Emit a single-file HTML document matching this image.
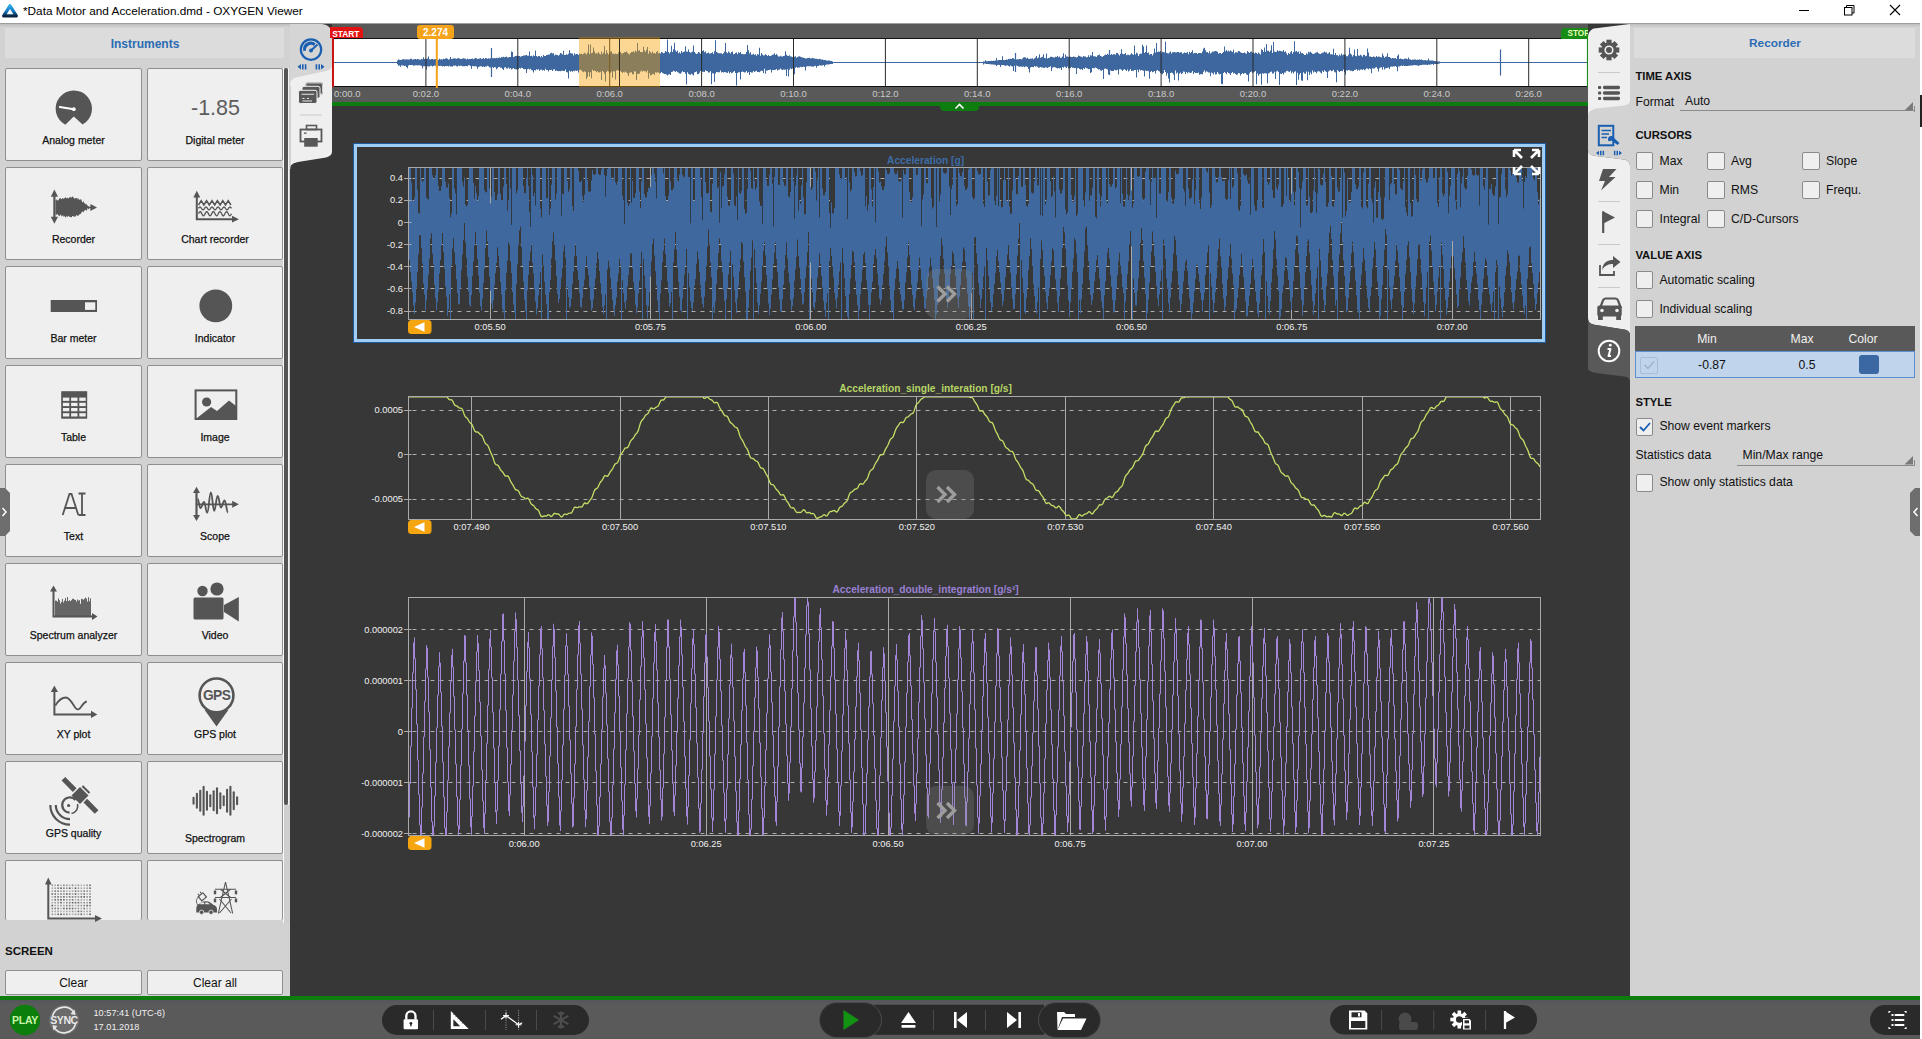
<!DOCTYPE html><html><head><meta charset="utf-8"><title>OXYGEN Viewer</title><style>
*{margin:0;padding:0;box-sizing:border-box}
html,body{width:1922px;height:1039px;overflow:hidden;background:#373737;font-family:"Liberation Sans",sans-serif}
.a{position:absolute}
.t{position:absolute;white-space:nowrap;line-height:1}
</style></head><body>
<div class="a" style="left:0px;top:0px;width:1922px;height:23px;background:#fff"></div>
<div class="a" style="left:0px;top:23px;width:1920px;height:1px;background:#9d9d9d"></div>
<div class="a" style="left:1920px;top:0px;width:2px;height:1039px;background:#fff"></div>
<svg class="a" style="left:0px;top:0px;" width="22" height="22" viewBox="0 0 22 22"><defs><linearGradient id="lg" x1="0" y1="0" x2="0" y2="1"><stop offset="0" stop-color="#2aa8e8"/><stop offset="0.55" stop-color="#1677c0"/><stop offset="1" stop-color="#0a2440"/></linearGradient></defs><path d="M10 5.8 L16.3 15.9 L3.7 15.9 Z" fill="none" stroke="url(#lg)" stroke-width="3.3" stroke-linejoin="round"/></svg>
<div class="t" style="left:23.00px;top:6.41px;font-size:11.8px;color:#000;">*Data Motor and Acceleration.dmd - OXYGEN Viewer</div>
<div class="a" style="left:1799px;top:10px;width:10px;height:1px;background:#000"></div>
<svg class="a" style="left:1843px;top:4px;" width="13" height="12" viewBox="0 0 13 12"><rect x="1.5" y="3.5" width="7.5" height="7.5" fill="none" stroke="#000" stroke-width="1"/><path d="M3.5 3.5 V1.5 H11 V9 H9" fill="none" stroke="#000" stroke-width="1"/></svg>
<svg class="a" style="left:1889px;top:4px;" width="12" height="12" viewBox="0 0 12 12"><path d="M1 1 L11 11 M11 1 L1 11" stroke="#000" stroke-width="1.1"/></svg>
<div class="a" style="left:0px;top:24px;width:290px;height:972px;background:#d2d2d2"></div>
<div class="a" style="left:0px;top:24px;width:290px;height:3px;background:linear-gradient(#bdbdbd,#d2d2d2)"></div>
<div class="a" style="left:5px;top:28px;width:279px;height:30px;background:#dcdcdc"></div>
<div class="t" style="left:-155.00px;width:600px;text-align:center;top:37.84px;font-size:12px;color:#2b6cb3;font-weight:bold;">Instruments</div>
<div class="a" style="left:5px;top:68px;width:137px;height:93px;background:#efefef;border:1px solid #8f8f8f;border-radius:2px;"></div>
<div class="t" style="left:-226.50px;width:600px;text-align:center;top:135.11px;font-size:10.5px;color:#111;-webkit-text-stroke:0.25px #111;">Analog meter</div>
<div class="a" style="left:147px;top:68px;width:136px;height:93px;background:#efefef;border:1px solid #8f8f8f;border-radius:2px;"></div>
<div class="t" style="left:-85.00px;width:600px;text-align:center;top:135.11px;font-size:10.5px;color:#111;-webkit-text-stroke:0.25px #111;">Digital meter</div>
<div class="a" style="left:5px;top:167px;width:137px;height:93px;background:#efefef;border:1px solid #8f8f8f;border-radius:2px;"></div>
<div class="t" style="left:-226.50px;width:600px;text-align:center;top:234.11px;font-size:10.5px;color:#111;-webkit-text-stroke:0.25px #111;">Recorder</div>
<div class="a" style="left:147px;top:167px;width:136px;height:93px;background:#efefef;border:1px solid #8f8f8f;border-radius:2px;"></div>
<div class="t" style="left:-85.00px;width:600px;text-align:center;top:234.11px;font-size:10.5px;color:#111;-webkit-text-stroke:0.25px #111;">Chart recorder</div>
<div class="a" style="left:5px;top:266px;width:137px;height:93px;background:#efefef;border:1px solid #8f8f8f;border-radius:2px;"></div>
<div class="t" style="left:-226.50px;width:600px;text-align:center;top:333.11px;font-size:10.5px;color:#111;-webkit-text-stroke:0.25px #111;">Bar meter</div>
<div class="a" style="left:147px;top:266px;width:136px;height:93px;background:#efefef;border:1px solid #8f8f8f;border-radius:2px;"></div>
<div class="t" style="left:-85.00px;width:600px;text-align:center;top:333.11px;font-size:10.5px;color:#111;-webkit-text-stroke:0.25px #111;">Indicator</div>
<div class="a" style="left:5px;top:365px;width:137px;height:93px;background:#efefef;border:1px solid #8f8f8f;border-radius:2px;"></div>
<div class="t" style="left:-226.50px;width:600px;text-align:center;top:432.11px;font-size:10.5px;color:#111;-webkit-text-stroke:0.25px #111;">Table</div>
<div class="a" style="left:147px;top:365px;width:136px;height:93px;background:#efefef;border:1px solid #8f8f8f;border-radius:2px;"></div>
<div class="t" style="left:-85.00px;width:600px;text-align:center;top:432.11px;font-size:10.5px;color:#111;-webkit-text-stroke:0.25px #111;">Image</div>
<div class="a" style="left:5px;top:464px;width:137px;height:93px;background:#efefef;border:1px solid #8f8f8f;border-radius:2px;"></div>
<div class="t" style="left:-226.50px;width:600px;text-align:center;top:531.11px;font-size:10.5px;color:#111;-webkit-text-stroke:0.25px #111;">Text</div>
<div class="a" style="left:147px;top:464px;width:136px;height:93px;background:#efefef;border:1px solid #8f8f8f;border-radius:2px;"></div>
<div class="t" style="left:-85.00px;width:600px;text-align:center;top:531.11px;font-size:10.5px;color:#111;-webkit-text-stroke:0.25px #111;">Scope</div>
<div class="a" style="left:5px;top:563px;width:137px;height:93px;background:#efefef;border:1px solid #8f8f8f;border-radius:2px;"></div>
<div class="t" style="left:-226.50px;width:600px;text-align:center;top:630.11px;font-size:10.5px;color:#111;-webkit-text-stroke:0.25px #111;">Spectrum analyzer</div>
<div class="a" style="left:147px;top:563px;width:136px;height:93px;background:#efefef;border:1px solid #8f8f8f;border-radius:2px;"></div>
<div class="t" style="left:-85.00px;width:600px;text-align:center;top:630.11px;font-size:10.5px;color:#111;-webkit-text-stroke:0.25px #111;">Video</div>
<div class="a" style="left:5px;top:662px;width:137px;height:93px;background:#efefef;border:1px solid #8f8f8f;border-radius:2px;"></div>
<div class="t" style="left:-226.50px;width:600px;text-align:center;top:729.11px;font-size:10.5px;color:#111;-webkit-text-stroke:0.25px #111;">XY plot</div>
<div class="a" style="left:147px;top:662px;width:136px;height:93px;background:#efefef;border:1px solid #8f8f8f;border-radius:2px;"></div>
<div class="t" style="left:-85.00px;width:600px;text-align:center;top:729.11px;font-size:10.5px;color:#111;-webkit-text-stroke:0.25px #111;">GPS plot</div>
<div class="a" style="left:5px;top:761px;width:137px;height:93px;background:#efefef;border:1px solid #8f8f8f;border-radius:2px;"></div>
<div class="t" style="left:-226.50px;width:600px;text-align:center;top:828.11px;font-size:10.5px;color:#111;-webkit-text-stroke:0.25px #111;">GPS quality</div>
<div class="a" style="left:147px;top:761px;width:136px;height:93px;background:#efefef;border:1px solid #8f8f8f;border-radius:2px;"></div>
<div class="t" style="left:-85.00px;width:600px;text-align:center;top:833.11px;font-size:10.5px;color:#111;-webkit-text-stroke:0.25px #111;">Spectrogram</div>
<div class="a" style="left:5px;top:860px;width:137px;height:60px;background:#efefef;border:1px solid #8f8f8f;border-radius:2px;border-bottom:none;"></div>
<div class="a" style="left:147px;top:860px;width:136px;height:60px;background:#efefef;border:1px solid #8f8f8f;border-radius:2px;border-bottom:none;"></div>
<div class="a" style="left:0px;top:923px;width:290px;height:73px;background:#d2d2d2"></div>
<div class="a" style="left:283px;top:68px;width:1px;height:855px;background:#fafafa"></div>
<div class="a" style="left:284px;top:68px;width:6px;height:855px;background:#cfcfcf"></div>
<div class="a" style="left:284px;top:68px;width:3.5px;height:737px;background:#555;border-radius:2px"></div>
<div class="a" style="left:288px;top:68px;width:1px;height:737px;background:#f4f4f4"></div>
<div class="t" style="left:5.00px;top:946.27px;font-size:11.5px;color:#111;font-weight:bold;">SCREEN</div>
<div class="a" style="left:5px;top:970px;width:137px;height:25px;background:#efefef;border:1px solid #8f8f8f;border-radius:2px"></div>
<div class="a" style="left:147px;top:970px;width:136px;height:25px;background:#efefef;border:1px solid #8f8f8f;border-radius:2px"></div>
<div class="t" style="left:-226.50px;width:600px;text-align:center;top:976.84px;font-size:12px;color:#111;">Clear</div>
<div class="t" style="left:-85.00px;width:600px;text-align:center;top:976.84px;font-size:12px;color:#111;">Clear all</div>
<svg class="a" style="left:0px;top:488px;" width="11" height="48" viewBox="0 0 11 48"><path d="M0 0 L5 0 L10 5 L10 43 L5 48 L0 48 Z" fill="#6e6e6e"/><path d="M2.5 20 L6 24 L2.5 28" fill="none" stroke="#fff" stroke-width="1.5"/></svg>
<svg class="a" style="left:0px;top:0px;" width="290" height="996" viewBox="0 0 290 996"><path d="M73.8 116.6 L65.26 124.67 A18.2 18.2 0 1 1 82.62 124.52 Z" fill="#555555"/><path d="M59.8 106.9 L73.8 109.2" stroke="#fff" stroke-width="2" stroke-linecap="round"/><circle cx="73.8" cy="109.2" r="1.9" fill="#fff"/><path d="M54.4 194 V219" stroke="#555555" stroke-width="2.2"/><path d="M50.8 196.8 L54.4 189.6 L58 196.8 Z M50.8 216.8 L54.4 223.8 L58 216.8 Z" fill="#555555"/><path d="M55.50 200.09 L56.20 200.18 L56.90 199.04 L57.60 200.86 L58.30 200.17 L59.00 199.29 L59.70 198.06 L60.40 197.95 L61.10 199.33 L61.80 199.11 L62.50 197.73 L63.20 198.64 L63.90 198.86 L64.60 198.02 L65.30 197.62 L66.00 197.38 L66.70 198.51 L67.40 197.52 L68.10 198.40 L68.80 198.31 L69.50 197.35 L70.20 197.56 L70.90 196.44 L71.60 198.04 L72.30 196.19 L73.00 196.95 L73.70 197.60 L74.40 199.09 L75.10 197.81 L75.80 198.53 L76.50 198.01 L77.20 198.10 L77.90 199.74 L78.60 198.00 L79.30 200.17 L80.00 199.26 L80.70 199.52 L81.40 199.59 L82.10 202.13 L82.80 202.14 L83.50 200.75 L84.20 203.62 L84.90 202.93 L85.60 204.15 L86.30 204.03 L87.00 205.11 L87.70 205.65 L88.40 206.23 L89.10 206.81 L89.10 207.88 L88.40 209.55 L87.70 207.72 L87.00 210.33 L86.30 210.73 L85.60 209.71 L84.90 209.94 L84.20 210.91 L83.50 212.57 L82.80 211.30 L82.10 211.72 L81.40 212.77 L80.70 213.78 L80.00 214.51 L79.30 214.20 L78.60 215.58 L77.90 216.27 L77.20 215.25 L76.50 214.91 L75.80 216.22 L75.10 216.54 L74.40 216.69 L73.70 216.45 L73.00 216.10 L72.30 216.00 L71.60 217.59 L70.90 217.07 L70.20 216.88 L69.50 216.92 L68.80 215.77 L68.10 216.40 L67.40 217.02 L66.70 215.55 L66.00 217.43 L65.30 217.14 L64.60 215.85 L63.90 217.25 L63.20 215.27 L62.50 215.78 L61.80 216.75 L61.10 214.96 L60.40 214.42 L59.70 216.22 L59.00 215.55 L58.30 215.44 L57.60 213.74 L56.90 214.49 L56.20 214.86 L55.50 214.74 Z" fill="#555555"/><path d="M88 207.5 H92" stroke="#555555" stroke-width="1.6"/><path d="M90.4 204 L97 207.5 L90.4 211 Z" fill="#555555"/><path d="M196.8 195 V219.2 H233" stroke="#555555" stroke-width="2" fill="none"/><path d="M193.3 197.5 L196.8 190.8 L200.3 197.5 Z M232 215.8 L239 219.2 L232 222.6 Z" fill="#555555"/><path d="M198.50 205.0 201.20 200.7 203.90 205.0 206.60 200.7 209.30 205.0 212.00 200.7 214.70 205.0 217.40 200.7 220.10 205.0 222.80 200.7 225.50 205.0 228.20 200.7 230.90 205.0" stroke="#555555" stroke-width="1.5" fill="none"/><path d="M198.5 208.40 L199.0 207.70 L199.5 207.19 L200.0 207.00 L200.5 207.19 L201.0 207.70 L201.5 208.40 L202.0 209.10 L202.5 209.61 L203.0 209.80 L203.5 209.61 L204.0 209.10 L204.5 208.40 L205.0 207.70 L205.5 207.19 L206.0 207.00 L206.5 207.19 L207.0 207.70 L207.5 208.40 L208.0 209.10 L208.5 209.61 L209.0 209.80 L209.5 209.61 L210.0 209.10 L210.5 208.40 L211.0 207.70 L211.5 207.19 L212.0 207.00 L212.5 207.19 L213.0 207.70 L213.5 208.40 L214.0 209.10 L214.5 209.61 L215.0 209.80 L215.5 209.61 L216.0 209.10 L216.5 208.40 L217.0 207.70 L217.5 207.19 L218.0 207.00 L218.5 207.19 L219.0 207.70 L219.5 208.40 L220.0 209.10 L220.5 209.61 L221.0 209.80 L221.5 209.61 L222.0 209.10 L222.5 208.40 L223.0 207.70 L223.5 207.19 L224.0 207.00 L224.5 207.19 L225.0 207.70 L225.5 208.40 L226.0 209.10 L226.5 209.61 L227.0 209.80 L227.5 209.61 L228.0 209.10 L228.5 208.40 L229.0 207.70 L229.5 207.19 L230.0 207.00 L230.5 207.19 L231.0 207.70 L231.5 208.40" stroke="#555555" stroke-width="1.3" fill="none"/><path d="M198.5 213.70 L199.0 212.74 L199.5 211.99 L200.0 211.62 L200.5 211.72 L201.0 212.25 L201.5 213.11 L202.0 214.10 L202.5 215.00 L203.0 215.61 L203.5 215.80 L204.0 215.52 L204.5 214.84 L205.0 213.90 L205.5 212.92 L206.0 212.11 L206.5 211.66 L207.0 211.66 L207.5 212.11 L208.0 212.92 L208.5 213.90 L209.0 214.84 L209.5 215.52 L210.0 215.80 L210.5 215.61 L211.0 215.00 L211.5 214.10 L212.0 213.11 L212.5 212.25 L213.0 211.72 L213.5 211.62 L214.0 211.99 L214.5 212.74 L215.0 213.70 L215.5 214.66 L216.0 215.41 L216.5 215.78 L217.0 215.68 L217.5 215.15 L218.0 214.29 L218.5 213.30 L219.0 212.40 L219.5 211.79 L220.0 211.60 L220.5 211.88 L221.0 212.56 L221.5 213.50 L222.0 214.48 L222.5 215.29 L223.0 215.74 L223.5 215.74 L224.0 215.29 L224.5 214.48 L225.0 213.50 L225.5 212.56 L226.0 211.88 L226.5 211.60 L227.0 211.79 L227.5 212.40 L228.0 213.30 L228.5 214.29 L229.0 215.15 L229.5 215.68 L230.0 215.78 L230.5 215.41 L231.0 214.66 L231.5 213.70" stroke="#555555" stroke-width="1.3" fill="none"/><rect x="50.7" y="300" width="46.3" height="12" fill="#555555"/><rect x="85" y="302.3" width="10.3" height="7.6" fill="#efefef"/><circle cx="215.8" cy="305.8" r="16.4" fill="#555555"/><rect x="61.2" y="391.2" width="26" height="27.5" fill="#555555"/><rect x="62.9" y="397.6" width="6.4" height="3.3" fill="#efefef"/><rect x="71.1" y="397.6" width="6.4" height="3.3" fill="#efefef"/><rect x="79.3" y="397.6" width="6.4" height="3.3" fill="#efefef"/><rect x="62.9" y="402.8" width="6.4" height="3.3" fill="#efefef"/><rect x="71.1" y="402.8" width="6.4" height="3.3" fill="#efefef"/><rect x="79.3" y="402.8" width="6.4" height="3.3" fill="#efefef"/><rect x="62.9" y="408.0" width="6.4" height="3.3" fill="#efefef"/><rect x="71.1" y="408.0" width="6.4" height="3.3" fill="#efefef"/><rect x="79.3" y="408.0" width="6.4" height="3.3" fill="#efefef"/><rect x="62.9" y="413.2" width="6.4" height="3.3" fill="#efefef"/><rect x="71.1" y="413.2" width="6.4" height="3.3" fill="#efefef"/><rect x="79.3" y="413.2" width="6.4" height="3.3" fill="#efefef"/><rect x="195.6" y="390.4" width="40.7" height="28.6" fill="none" stroke="#555555" stroke-width="2"/><circle cx="206.6" cy="402" r="4.6" fill="#555555"/><path d="M197 418 L211 407 L217 411 L229 400.5 L236 406 L236 418 Z" fill="#555555"/><path d="M62.7 515 L69.5 494 L71.5 494 L78.3 515 M65.3 508 H75.7" stroke="#555555" stroke-width="1.8" fill="none"/><path d="M82 493.5 V515 M78.5 493.5 H85.5 M78.5 515 H85.5" stroke="#555555" stroke-width="1.8" fill="none"/><path d="M196.5 490 V518" stroke="#555555" stroke-width="2.2"/><path d="M193 493 L196.5 486.7 L200 493 Z M193 515 L196.5 521.1 L200 515 Z" fill="#555555"/><path d="M197.5 499 C198.85 499 199.15 508 200.5 508 C202.07 508 202.43 502 204 502 C205.44 502 205.76 512.7 207.2 512.7 C208.87 512.7 209.23 492.3 210.9 492.3 C212.38 492.3 212.72 510.8 214.2 510.8 C215.77 510.8 216.12 496 217.7 496 C219.19 496 219.51 507.5 221 507.5 C222.62 507.5 222.98 500.5 224.6 500.5 C226.13 500.5 226.47 512.5 228 512.5" stroke="#555555" stroke-width="1.8" fill="none"/><path d="M197 504.3 H233" stroke="#555555" stroke-width="1.8"/><path d="M232.2 500.8 L238.9 504.3 L232.2 507.8 Z" fill="#555555"/><path d="M53.5 589 V616.5 H95" stroke="#555555" stroke-width="2" fill="none"/><path d="M50 591.5 L53.5 585.5 L57 591.5 Z M92 613 L97.5 616.5 L92 620 Z" fill="#555555"/><path d="M55.5 616 V600.6 M56.5 616 V600.7 M57.5 616 V601.8 M58.5 616 V598.4 M59.5 616 V600.2 M60.5 616 V603.6 M61.5 616 V601.9 M62.5 616 V599.0 M63.5 616 V602.4 M64.5 616 V600.6 M65.5 616 V598.0 M66.5 616 V601.2 M67.5 616 V597.0 M68.5 616 V601.1 M69.5 616 V600.2 M70.5 616 V601.1 M71.5 616 V600.2 M72.5 616 V598.8 M73.5 616 V598.9 M74.5 616 V599.6 M75.5 616 V600.0 M76.5 616 V601.6 M77.5 616 V599.5 M78.5 616 V600.5 M79.5 616 V600.2 M80.5 616 V603.8 M81.5 616 V598.8 M82.5 616 V599.2 M83.5 616 V599.7 M84.5 616 V598.7 M85.5 616 V597.7 M86.5 616 V598.5 M87.5 616 V601.6 M88.5 616 V597.2 M89.5 616 V601.3 M90.5 616 V598.4" stroke="#555555" stroke-width="0.9"/><circle cx="202.5" cy="591" r="5.2" fill="#555555"/><circle cx="217" cy="589" r="6.6" fill="#555555"/><rect x="193.5" y="597.5" width="30" height="22" rx="1.5" fill="#555555"/><path d="M224 605 L238.8 597 L238.8 621.5 L224 612 Z" fill="#555555"/><path d="M54.4 690 V714.4 H92" stroke="#555555" stroke-width="2" fill="none"/><path d="M50.8 692 L54.4 685.5 L58 692 Z M91 710.8 L97.3 714.4 L91 718 Z" fill="#555555"/><path d="M55.3 705.5 C58 701 62 697.5 66 697.5 C70 697.5 73 705 75.5 708 C77 710 79 710 81 707 C83 704 84.5 702 86.8 701.5" stroke="#555555" stroke-width="1.8" fill="none"/><path d="M204.5 709.8 L216.5 726.5 L228.5 709.8 Z" fill="#555555"/><circle cx="216.5" cy="695.4" r="16.9" fill="#efefef" stroke="#555555" stroke-width="2.6"/><text x="216.6" y="700.4" font-size="13.8" font-weight="bold" text-anchor="middle" fill="#555555" font-family="Liberation Sans" letter-spacing="-0.6">GPS</text><g transform="rotate(45 80 795.4)"><rect x="74" y="789.4" width="12" height="12" fill="#555555"/><rect x="56.5" y="792.8" width="16" height="5.2" fill="#555555"/><rect x="87.5" y="792.8" width="16" height="5.2" fill="#555555"/><rect x="75" y="786" width="10" height="2" fill="#555555"/></g><path d="M50.3 805 A19.7 19.7 0 0 0 70 824.7 M55.8 805 A14.2 14.2 0 0 0 70 819.2" stroke="#555555" stroke-width="2.2" fill="none"/><path d="M69.6 812.6 A7.6 7.6 0 1 1 75.5 800" stroke="#555555" stroke-width="2.2" fill="none"/><path d="M71.5 813.5 A7.6 7.6 0 0 0 77.5 804" stroke="#555555" stroke-width="1.6" fill="none"/><circle cx="68.6" cy="805.5" r="1.6" fill="#555555"/><rect x="192.50" y="796.7" width="2.1" height="8" rx="1" fill="#555555"/><rect x="195.85" y="792.7" width="2.1" height="16" rx="1" fill="#555555"/><rect x="199.20" y="789.7" width="2.1" height="22" rx="1" fill="#555555"/><rect x="202.55" y="785.7" width="2.1" height="30" rx="1" fill="#555555"/><rect x="205.90" y="790.7" width="2.1" height="20" rx="1" fill="#555555"/><rect x="209.25" y="794.2" width="2.1" height="13" rx="1" fill="#555555"/><rect x="212.60" y="790.2" width="2.1" height="21" rx="1" fill="#555555"/><rect x="215.95" y="787.2" width="2.1" height="27" rx="1" fill="#555555"/><rect x="219.30" y="792.2" width="2.1" height="17" rx="1" fill="#555555"/><rect x="222.65" y="795.2" width="2.1" height="11" rx="1" fill="#555555"/><rect x="226.00" y="788.7" width="2.1" height="24" rx="1" fill="#555555"/><rect x="229.35" y="785.7" width="2.1" height="30" rx="1" fill="#555555"/><rect x="232.70" y="791.2" width="2.1" height="19" rx="1" fill="#555555"/><rect x="236.05" y="796.2" width="2.1" height="9" rx="1" fill="#555555"/><path d="M48.3 882 V918.5 H98" stroke="#555555" stroke-width="2" fill="none"/><path d="M45 884.5 L48.3 877.5 L51.6 884.5 Z M95 915 L102 918.5 L95 922 Z" fill="#555555"/><rect x="51.5" y="884.5" width="1.6" height="1.6" fill="#555555" opacity="0.56"/><rect x="54.4" y="884.5" width="1.6" height="1.6" fill="#555555" opacity="0.45"/><rect x="57.3" y="884.5" width="1.6" height="1.6" fill="#555555" opacity="0.77"/><rect x="60.2" y="884.5" width="1.6" height="1.6" fill="#555555" opacity="0.40"/><rect x="63.1" y="884.5" width="1.6" height="1.6" fill="#555555" opacity="0.70"/><rect x="66.0" y="884.5" width="1.6" height="1.6" fill="#555555" opacity="0.59"/><rect x="68.9" y="884.5" width="1.6" height="1.6" fill="#555555" opacity="0.39"/><rect x="71.8" y="884.5" width="1.6" height="1.6" fill="#555555" opacity="0.68"/><rect x="74.7" y="884.5" width="1.6" height="1.6" fill="#555555" opacity="0.37"/><rect x="77.6" y="884.5" width="1.6" height="1.6" fill="#555555" opacity="0.63"/><rect x="80.5" y="884.5" width="1.6" height="1.6" fill="#555555" opacity="0.40"/><rect x="83.4" y="884.5" width="1.6" height="1.6" fill="#555555" opacity="0.41"/><rect x="86.3" y="884.5" width="1.6" height="1.6" fill="#555555" opacity="0.63"/><rect x="89.2" y="884.5" width="1.6" height="1.6" fill="#555555" opacity="0.89"/><rect x="51.5" y="887.4" width="1.6" height="1.6" fill="#555555" opacity="0.43"/><rect x="54.4" y="887.4" width="1.6" height="1.6" fill="#555555" opacity="0.50"/><rect x="57.3" y="887.4" width="1.6" height="1.6" fill="#555555" opacity="0.76"/><rect x="60.2" y="887.4" width="1.6" height="1.6" fill="#555555" opacity="0.97"/><rect x="63.1" y="887.4" width="1.6" height="1.6" fill="#555555" opacity="0.73"/><rect x="66.0" y="887.4" width="1.6" height="1.6" fill="#555555" opacity="0.61"/><rect x="68.9" y="887.4" width="1.6" height="1.6" fill="#555555" opacity="0.98"/><rect x="71.8" y="887.4" width="1.6" height="1.6" fill="#555555" opacity="0.38"/><rect x="74.7" y="887.4" width="1.6" height="1.6" fill="#555555" opacity="0.91"/><rect x="77.6" y="887.4" width="1.6" height="1.6" fill="#555555" opacity="0.54"/><rect x="80.5" y="887.4" width="1.6" height="1.6" fill="#555555" opacity="0.44"/><rect x="83.4" y="887.4" width="1.6" height="1.6" fill="#555555" opacity="0.43"/><rect x="86.3" y="887.4" width="1.6" height="1.6" fill="#555555" opacity="0.55"/><rect x="89.2" y="887.4" width="1.6" height="1.6" fill="#555555" opacity="0.88"/><rect x="51.5" y="890.3" width="1.6" height="1.6" fill="#555555" opacity="0.47"/><rect x="54.4" y="890.3" width="1.6" height="1.6" fill="#555555" opacity="0.73"/><rect x="57.3" y="890.3" width="1.6" height="1.6" fill="#555555" opacity="0.77"/><rect x="60.2" y="890.3" width="1.6" height="1.6" fill="#555555" opacity="0.59"/><rect x="63.1" y="890.3" width="1.6" height="1.6" fill="#555555" opacity="0.71"/><rect x="66.0" y="890.3" width="1.6" height="1.6" fill="#555555" opacity="0.39"/><rect x="68.9" y="890.3" width="1.6" height="1.6" fill="#555555" opacity="0.39"/><rect x="71.8" y="890.3" width="1.6" height="1.6" fill="#555555" opacity="0.48"/><rect x="74.7" y="890.3" width="1.6" height="1.6" fill="#555555" opacity="0.79"/><rect x="77.6" y="890.3" width="1.6" height="1.6" fill="#555555" opacity="0.63"/><rect x="80.5" y="890.3" width="1.6" height="1.6" fill="#555555" opacity="0.55"/><rect x="83.4" y="890.3" width="1.6" height="1.6" fill="#555555" opacity="0.73"/><rect x="86.3" y="890.3" width="1.6" height="1.6" fill="#555555" opacity="0.64"/><rect x="89.2" y="890.3" width="1.6" height="1.6" fill="#555555" opacity="0.54"/><rect x="51.5" y="893.2" width="1.6" height="1.6" fill="#555555" opacity="0.87"/><rect x="54.4" y="893.2" width="1.6" height="1.6" fill="#555555" opacity="0.80"/><rect x="57.3" y="893.2" width="1.6" height="1.6" fill="#555555" opacity="0.51"/><rect x="60.2" y="893.2" width="1.6" height="1.6" fill="#555555" opacity="0.72"/><rect x="63.1" y="893.2" width="1.6" height="1.6" fill="#555555" opacity="0.69"/><rect x="66.0" y="893.2" width="1.6" height="1.6" fill="#555555" opacity="0.92"/><rect x="68.9" y="893.2" width="1.6" height="1.6" fill="#555555" opacity="0.82"/><rect x="71.8" y="893.2" width="1.6" height="1.6" fill="#555555" opacity="0.54"/><rect x="74.7" y="893.2" width="1.6" height="1.6" fill="#555555" opacity="0.99"/><rect x="77.6" y="893.2" width="1.6" height="1.6" fill="#555555" opacity="0.43"/><rect x="80.5" y="893.2" width="1.6" height="1.6" fill="#555555" opacity="0.62"/><rect x="83.4" y="893.2" width="1.6" height="1.6" fill="#555555" opacity="0.84"/><rect x="86.3" y="893.2" width="1.6" height="1.6" fill="#555555" opacity="0.45"/><rect x="89.2" y="893.2" width="1.6" height="1.6" fill="#555555" opacity="0.67"/><rect x="51.5" y="896.1" width="1.6" height="1.6" fill="#555555" opacity="0.38"/><rect x="54.4" y="896.1" width="1.6" height="1.6" fill="#555555" opacity="0.78"/><rect x="57.3" y="896.1" width="1.6" height="1.6" fill="#555555" opacity="0.85"/><rect x="60.2" y="896.1" width="1.6" height="1.6" fill="#555555" opacity="0.72"/><rect x="63.1" y="896.1" width="1.6" height="1.6" fill="#555555" opacity="0.92"/><rect x="66.0" y="896.1" width="1.6" height="1.6" fill="#555555" opacity="0.55"/><rect x="68.9" y="896.1" width="1.6" height="1.6" fill="#555555" opacity="0.80"/><rect x="71.8" y="896.1" width="1.6" height="1.6" fill="#555555" opacity="0.74"/><rect x="74.7" y="896.1" width="1.6" height="1.6" fill="#555555" opacity="0.73"/><rect x="77.6" y="896.1" width="1.6" height="1.6" fill="#555555" opacity="0.65"/><rect x="80.5" y="896.1" width="1.6" height="1.6" fill="#555555" opacity="0.90"/><rect x="83.4" y="896.1" width="1.6" height="1.6" fill="#555555" opacity="0.96"/><rect x="86.3" y="896.1" width="1.6" height="1.6" fill="#555555" opacity="0.66"/><rect x="89.2" y="896.1" width="1.6" height="1.6" fill="#555555" opacity="0.78"/><rect x="51.5" y="899.0" width="1.6" height="1.6" fill="#555555" opacity="0.39"/><rect x="54.4" y="899.0" width="1.6" height="1.6" fill="#555555" opacity="0.81"/><rect x="57.3" y="899.0" width="1.6" height="1.6" fill="#555555" opacity="0.77"/><rect x="60.2" y="899.0" width="1.6" height="1.6" fill="#555555" opacity="1.00"/><rect x="63.1" y="899.0" width="1.6" height="1.6" fill="#555555" opacity="0.88"/><rect x="66.0" y="899.0" width="1.6" height="1.6" fill="#555555" opacity="0.53"/><rect x="68.9" y="899.0" width="1.6" height="1.6" fill="#555555" opacity="0.60"/><rect x="71.8" y="899.0" width="1.6" height="1.6" fill="#555555" opacity="0.78"/><rect x="74.7" y="899.0" width="1.6" height="1.6" fill="#555555" opacity="0.36"/><rect x="77.6" y="899.0" width="1.6" height="1.6" fill="#555555" opacity="0.65"/><rect x="80.5" y="899.0" width="1.6" height="1.6" fill="#555555" opacity="0.46"/><rect x="83.4" y="899.0" width="1.6" height="1.6" fill="#555555" opacity="0.43"/><rect x="86.3" y="899.0" width="1.6" height="1.6" fill="#555555" opacity="0.39"/><rect x="89.2" y="899.0" width="1.6" height="1.6" fill="#555555" opacity="0.85"/><rect x="51.5" y="901.9" width="1.6" height="1.6" fill="#555555" opacity="0.43"/><rect x="54.4" y="901.9" width="1.6" height="1.6" fill="#555555" opacity="0.51"/><rect x="57.3" y="901.9" width="1.6" height="1.6" fill="#555555" opacity="0.60"/><rect x="60.2" y="901.9" width="1.6" height="1.6" fill="#555555" opacity="0.92"/><rect x="63.1" y="901.9" width="1.6" height="1.6" fill="#555555" opacity="0.40"/><rect x="66.0" y="901.9" width="1.6" height="1.6" fill="#555555" opacity="0.64"/><rect x="68.9" y="901.9" width="1.6" height="1.6" fill="#555555" opacity="0.71"/><rect x="71.8" y="901.9" width="1.6" height="1.6" fill="#555555" opacity="0.92"/><rect x="74.7" y="901.9" width="1.6" height="1.6" fill="#555555" opacity="0.88"/><rect x="77.6" y="901.9" width="1.6" height="1.6" fill="#555555" opacity="0.91"/><rect x="80.5" y="901.9" width="1.6" height="1.6" fill="#555555" opacity="0.53"/><rect x="83.4" y="901.9" width="1.6" height="1.6" fill="#555555" opacity="0.62"/><rect x="86.3" y="901.9" width="1.6" height="1.6" fill="#555555" opacity="0.58"/><rect x="89.2" y="901.9" width="1.6" height="1.6" fill="#555555" opacity="0.92"/><rect x="51.5" y="904.8" width="1.6" height="1.6" fill="#555555" opacity="0.97"/><rect x="54.4" y="904.8" width="1.6" height="1.6" fill="#555555" opacity="0.45"/><rect x="57.3" y="904.8" width="1.6" height="1.6" fill="#555555" opacity="0.46"/><rect x="60.2" y="904.8" width="1.6" height="1.6" fill="#555555" opacity="0.50"/><rect x="63.1" y="904.8" width="1.6" height="1.6" fill="#555555" opacity="0.50"/><rect x="66.0" y="904.8" width="1.6" height="1.6" fill="#555555" opacity="0.67"/><rect x="68.9" y="904.8" width="1.6" height="1.6" fill="#555555" opacity="0.73"/><rect x="71.8" y="904.8" width="1.6" height="1.6" fill="#555555" opacity="0.52"/><rect x="74.7" y="904.8" width="1.6" height="1.6" fill="#555555" opacity="0.35"/><rect x="77.6" y="904.8" width="1.6" height="1.6" fill="#555555" opacity="0.62"/><rect x="80.5" y="904.8" width="1.6" height="1.6" fill="#555555" opacity="0.59"/><rect x="83.4" y="904.8" width="1.6" height="1.6" fill="#555555" opacity="0.72"/><rect x="86.3" y="904.8" width="1.6" height="1.6" fill="#555555" opacity="0.97"/><rect x="89.2" y="904.8" width="1.6" height="1.6" fill="#555555" opacity="0.80"/><rect x="51.5" y="907.7" width="1.6" height="1.6" fill="#555555" opacity="0.69"/><rect x="54.4" y="907.7" width="1.6" height="1.6" fill="#555555" opacity="0.75"/><rect x="57.3" y="907.7" width="1.6" height="1.6" fill="#555555" opacity="0.79"/><rect x="60.2" y="907.7" width="1.6" height="1.6" fill="#555555" opacity="0.39"/><rect x="63.1" y="907.7" width="1.6" height="1.6" fill="#555555" opacity="0.93"/><rect x="66.0" y="907.7" width="1.6" height="1.6" fill="#555555" opacity="0.86"/><rect x="68.9" y="907.7" width="1.6" height="1.6" fill="#555555" opacity="0.92"/><rect x="71.8" y="907.7" width="1.6" height="1.6" fill="#555555" opacity="0.87"/><rect x="74.7" y="907.7" width="1.6" height="1.6" fill="#555555" opacity="0.61"/><rect x="77.6" y="907.7" width="1.6" height="1.6" fill="#555555" opacity="0.61"/><rect x="80.5" y="907.7" width="1.6" height="1.6" fill="#555555" opacity="0.42"/><rect x="83.4" y="907.7" width="1.6" height="1.6" fill="#555555" opacity="0.76"/><rect x="86.3" y="907.7" width="1.6" height="1.6" fill="#555555" opacity="0.39"/><rect x="89.2" y="907.7" width="1.6" height="1.6" fill="#555555" opacity="0.39"/><rect x="51.5" y="910.6" width="1.6" height="1.6" fill="#555555" opacity="0.49"/><rect x="54.4" y="910.6" width="1.6" height="1.6" fill="#555555" opacity="0.46"/><rect x="57.3" y="910.6" width="1.6" height="1.6" fill="#555555" opacity="0.57"/><rect x="60.2" y="910.6" width="1.6" height="1.6" fill="#555555" opacity="0.38"/><rect x="63.1" y="910.6" width="1.6" height="1.6" fill="#555555" opacity="0.35"/><rect x="66.0" y="910.6" width="1.6" height="1.6" fill="#555555" opacity="0.45"/><rect x="68.9" y="910.6" width="1.6" height="1.6" fill="#555555" opacity="0.42"/><rect x="71.8" y="910.6" width="1.6" height="1.6" fill="#555555" opacity="0.59"/><rect x="74.7" y="910.6" width="1.6" height="1.6" fill="#555555" opacity="0.37"/><rect x="77.6" y="910.6" width="1.6" height="1.6" fill="#555555" opacity="0.92"/><rect x="80.5" y="910.6" width="1.6" height="1.6" fill="#555555" opacity="0.75"/><rect x="83.4" y="910.6" width="1.6" height="1.6" fill="#555555" opacity="0.45"/><rect x="86.3" y="910.6" width="1.6" height="1.6" fill="#555555" opacity="0.51"/><rect x="89.2" y="910.6" width="1.6" height="1.6" fill="#555555" opacity="0.58"/><rect x="51.5" y="913.5" width="1.6" height="1.6" fill="#555555" opacity="0.59"/><rect x="54.4" y="913.5" width="1.6" height="1.6" fill="#555555" opacity="0.43"/><rect x="57.3" y="913.5" width="1.6" height="1.6" fill="#555555" opacity="0.90"/><rect x="60.2" y="913.5" width="1.6" height="1.6" fill="#555555" opacity="1.00"/><rect x="63.1" y="913.5" width="1.6" height="1.6" fill="#555555" opacity="0.65"/><rect x="66.0" y="913.5" width="1.6" height="1.6" fill="#555555" opacity="0.66"/><rect x="68.9" y="913.5" width="1.6" height="1.6" fill="#555555" opacity="0.41"/><rect x="71.8" y="913.5" width="1.6" height="1.6" fill="#555555" opacity="0.42"/><rect x="74.7" y="913.5" width="1.6" height="1.6" fill="#555555" opacity="0.57"/><rect x="77.6" y="913.5" width="1.6" height="1.6" fill="#555555" opacity="0.52"/><rect x="80.5" y="913.5" width="1.6" height="1.6" fill="#555555" opacity="0.89"/><rect x="83.4" y="913.5" width="1.6" height="1.6" fill="#555555" opacity="0.45"/><rect x="86.3" y="913.5" width="1.6" height="1.6" fill="#555555" opacity="0.37"/><rect x="89.2" y="913.5" width="1.6" height="1.6" fill="#555555" opacity="0.97"/><path d="M225.5 882 L218.3 913.5 M225.5 882 L232.7 913.5 M215 889.3 H236 M215 897.5 H236 M220.5 889.3 L230.5 897.5 M230.5 889.3 L220.5 897.5 M219.5 899 L231 913 M231.5 899 L219.5 913" stroke="#555555" stroke-width="1.1" fill="none"/><rect x="213.8" y="890.5" width="2.4" height="3.8" fill="#555555"/><rect x="234.8" y="890.5" width="2.4" height="3.8" fill="#555555"/><rect x="213.8" y="898.5" width="2.4" height="3.8" fill="#555555"/><rect x="234.8" y="898.5" width="2.4" height="3.8" fill="#555555"/><path d="M196.3 912.5 V908 C196.5 905.5 198 904 200 903.5 L202 902 C203.5 901 206 901 208 901.5 C210 902 212 904 213.5 905 C215.5 905.5 217 907 217 909.5 V912.5 Z" fill="#555555"/><path d="M199.6 904.2 L201.5 902.6 H204.2 V904.2 Z M205.3 902.6 H207.6 L210 904.2 H205.3 Z" fill="#efefef"/><circle cx="201.6" cy="912.3" r="2.2" fill="#555555" stroke="#efefef" stroke-width="0.8"/><circle cx="211" cy="912.3" r="2.2" fill="#555555" stroke="#efefef" stroke-width="0.8"/><path d="M197.5 905 C195.5 901 196.5 898 199.5 896" stroke="#555555" stroke-width="0.9" fill="none"/><g transform="rotate(-40 202.5 897)"><rect x="199.5" y="894" width="6" height="5.5" fill="none" stroke="#555555" stroke-width="1.2"/><path d="M201 894 V891.5 M204 894 V891.5" stroke="#555555" stroke-width="1"/></g></svg>
<div class="t" style="left:191.00px;top:98.10px;font-size:21.5px;color:#5c5c5c;">-1.85</div>
<svg class="a" style="left:290px;top:24px;" width="42" height="146" viewBox="0 0 42 146"><path d="M0 0 H31 C37 0 42 4 42 10 V50 L0 68 Z" fill="#d5d5d5"/><path d="M0 62 C0 56 3 54 8 53 L36 47 C40 46 42 44 42 40 V127 C42 131 40 132 36 133.5 L8 138 C3 139 0 141 0 145 Z" fill="#efefef"/><path d="M0 62 V145" stroke="#b8b8b8" stroke-width="1"/><circle cx="21" cy="25.6" r="10.2" fill="none" stroke="#1b5fb0" stroke-width="2.2"/><path d="M13.2 27 A7.8 7.8 0 0 1 25.5 19.2 L24 22 A5 5 0 0 0 16 26.8 Z" fill="#1b5fb0"/><path d="M21 26.5 L27.5 20.5" stroke="#1b5fb0" stroke-width="2"/><circle cx="21" cy="26.5" r="2" fill="#1b5fb0"/><path d="M7.5 42.8 L11 40 V45.6 Z M12 40.2 h1.6 v5.2 h-1.6 Z M14.8 40.2 h1.6 v5.2 h-1.6 Z M25.6 40.2 h1.6 v5.2 h-1.6 Z M28.4 40.2 h1.6 v5.2 h-1.6 Z M31 40 L34.5 42.8 L31 45.6 Z" fill="#1b5fb0"/><rect x="15.5" y="58.5" width="17.5" height="12" rx="2" fill="#585858"/><rect x="16" y="59" width="16.5" height="11" rx="1.6" fill="#585858" stroke="#efefef" stroke-width="0.8"/><rect x="12" y="62.3" width="18" height="12" rx="2" fill="#585858" stroke="#efefef" stroke-width="1"/><rect x="8.5" y="66.3" width="18.5" height="13.2" rx="2" fill="#585858" stroke="#efefef" stroke-width="1"/><path d="M11.5 70.2 H24 M12.5 74.5 H14.5 M17 74.5 H19 M12.5 77 H22" stroke="#e8e8e8" stroke-width="1.1"/><path d="M10 91 H32" stroke="#c9c9c9" stroke-width="1"/><rect x="16.5" y="101.5" width="10" height="4" fill="none" stroke="#585858" stroke-width="1.6"/><rect x="10.5" y="105.5" width="21" height="12" fill="none" stroke="#585858" stroke-width="1.8"/><rect x="14.2" y="114" width="13.5" height="8.7" fill="#585858"/><rect x="14" y="108.5" width="2.5" height="1.3" fill="#585858"/></svg>
<div class="a" style="left:332px;top:24px;width:1256px;height:14px;background:#595959"></div>
<div class="a" style="left:332px;top:38px;width:1256px;height:1px;background:#111"></div>
<div class="a" style="left:333px;top:39px;width:1255px;height:47px;background:#fff"></div>
<div class="a" style="left:332px;top:86px;width:1256px;height:1px;background:#111"></div>
<div class="a" style="left:332px;top:87px;width:1256px;height:15px;background:#595959"></div>
<div class="a" style="left:332px;top:102px;width:1298px;height:4px;background:#0e7d10"></div>
<svg class="a" style="left:940px;top:101px;" width="39" height="11" viewBox="0 0 39 11"><path d="M0 1 H39 V5 C39 9 37 10 34 10 H5 C2 10 0 9 0 5 Z" fill="#0e7d10"/><path d="M15.5 7.5 L19.5 3.5 L23.5 7.5" stroke="#fff" stroke-width="1.6" fill="none"/></svg>
<svg class="a" style="left:0px;top:0px;" width="1600" height="110" viewBox="0 0 1600 110"><path d="M334 62.0 L335 62.0 L335 62.0 L336 62.0 L336 62.0 L337 62.0 L337 62.0 L338 62.0 L338 62.0 L339 62.0 L339 62.0 L340 62.0 L340 62.0 L341 62.0 L341 62.0 L342 62.0 L342 62.0 L343 62.0 L343 62.0 L344 62.0 L344 62.0 L345 62.0 L345 62.0 L346 62.0 L346 62.0 L347 62.0 L347 62.0 L348 62.0 L348 62.0 L349 62.0 L349 62.0 L350 62.0 L350 62.0 L351 62.0 L351 62.0 L352 62.0 L352 62.0 L353 62.0 L353 62.0 L354 62.0 L354 62.0 L355 62.0 L355 62.0 L356 62.0 L356 62.0 L357 62.0 L357 62.0 L358 62.0 L358 62.0 L359 62.0 L359 62.0 L360 62.0 L360 62.0 L361 62.0 L361 62.0 L362 62.0 L362 62.0 L363 62.0 L363 62.0 L364 62.0 L364 62.0 L365 62.0 L365 62.0 L366 62.0 L366 62.0 L367 62.0 L367 62.0 L368 62.0 L368 62.0 L369 62.0 L369 62.0 L370 62.0 L370 62.0 L371 62.0 L371 62.0 L372 62.0 L372 62.0 L373 62.0 L373 62.0 L374 62.0 L374 62.0 L375 62.0 L375 62.0 L376 62.0 L376 62.0 L377 62.0 L377 62.0 L378 62.0 L378 62.0 L379 62.0 L379 62.0 L380 62.0 L380 62.0 L381 62.0 L381 62.0 L382 62.0 L382 62.0 L383 62.0 L383 62.0 L384 62.0 L384 62.0 L385 62.0 L385 62.0 L386 62.0 L386 62.0 L387 62.0 L387 62.0 L388 62.0 L388 62.0 L389 62.0 L389 62.0 L390 62.0 L390 62.0 L391 62.0 L391 62.0 L392 62.0 L392 62.0 L393 62.0 L393 62.0 L394 62.0 L394 62.0 L395 62.0 L395 62.0 L396 62.0 L396 62.0 L397 62.0 L397 60.6 L398 60.6 L398 59.6 L399 59.6 L399 59.8 L400 59.8 L400 59.9 L401 59.9 L401 59.8 L402 59.8 L402 59.4 L403 59.4 L403 59.0 L404 59.0 L404 59.6 L405 59.6 L405 59.5 L406 59.5 L406 59.3 L407 59.3 L407 59.4 L408 59.4 L408 59.5 L409 59.5 L409 59.4 L410 59.4 L410 58.8 L411 58.8 L411 58.7 L412 58.7 L412 59.7 L413 59.7 L413 59.3 L414 59.3 L414 59.3 L415 59.3 L415 59.0 L416 59.0 L416 59.6 L417 59.6 L417 58.9 L418 58.9 L418 59.3 L419 59.3 L419 59.5 L420 59.5 L420 59.7 L421 59.7 L421 59.1 L422 59.1 L422 59.2 L423 59.2 L423 57.3 L424 57.3 L424 58.9 L425 58.9 L425 58.7 L426 58.7 L426 59.1 L427 59.1 L427 58.6 L428 58.6 L428 56.6 L429 56.6 L429 59.2 L430 59.2 L430 59.4 L431 59.4 L431 59.0 L432 59.0 L432 58.9 L433 58.9 L433 59.4 L434 59.4 L434 59.2 L435 59.2 L435 59.1 L436 59.1 L436 56.7 L437 56.7 L437 59.7 L438 59.7 L438 59.8 L439 59.8 L439 58.8 L440 58.8 L440 59.4 L441 59.4 L441 59.3 L442 59.3 L442 59.4 L443 59.4 L443 58.7 L444 58.7 L444 58.9 L445 58.9 L445 58.5 L446 58.5 L446 58.2 L447 58.2 L447 58.8 L448 58.8 L448 59.6 L449 59.6 L449 59.2 L450 59.2 L450 57.0 L451 57.0 L451 58.9 L452 58.9 L452 58.8 L453 58.8 L453 58.6 L454 58.6 L454 58.3 L455 58.3 L455 58.6 L456 58.6 L456 58.7 L457 58.7 L457 58.4 L458 58.4 L458 58.0 L459 58.0 L459 58.5 L460 58.5 L460 59.1 L461 59.1 L461 58.9 L462 58.9 L462 58.5 L463 58.5 L463 58.3 L464 58.3 L464 58.6 L465 58.6 L465 58.8 L466 58.8 L466 59.5 L467 59.5 L467 58.6 L468 58.6 L468 59.3 L469 59.3 L469 59.1 L470 59.1 L470 58.9 L471 58.9 L471 58.7 L472 58.7 L472 58.5 L473 58.5 L473 59.3 L474 59.3 L474 58.6 L475 58.6 L475 58.0 L476 58.0 L476 58.2 L477 58.2 L477 59.1 L478 59.1 L478 58.8 L479 58.8 L479 58.5 L480 58.5 L480 57.9 L481 57.9 L481 59.1 L482 59.1 L482 58.8 L483 58.8 L483 57.9 L484 57.9 L484 59.0 L485 59.0 L485 58.0 L486 58.0 L486 58.3 L487 58.3 L487 58.8 L488 58.8 L488 58.2 L489 58.2 L489 58.8 L490 58.8 L490 58.2 L491 58.2 L491 58.0 L492 58.0 L492 58.2 L493 58.2 L493 58.2 L494 58.2 L494 57.9 L495 57.9 L495 58.3 L496 58.3 L496 57.8 L497 57.8 L497 58.2 L498 58.2 L498 57.7 L499 57.7 L499 57.4 L500 57.4 L500 57.9 L501 57.9 L501 57.0 L502 57.0 L502 57.2 L503 57.2 L503 56.8 L504 56.8 L504 57.2 L505 57.2 L505 57.1 L506 57.1 L506 56.6 L507 56.6 L507 57.5 L508 57.5 L508 57.5 L509 57.5 L509 57.0 L510 57.0 L510 57.0 L511 57.0 L511 51.6 L512 51.6 L512 51.9 L513 51.9 L513 57.0 L514 57.0 L514 56.5 L515 56.5 L515 56.0 L516 56.0 L516 55.7 L517 55.7 L517 55.8 L518 55.8 L518 55.9 L519 55.9 L519 55.9 L520 55.9 L520 56.8 L521 56.8 L521 56.3 L522 56.3 L522 56.0 L523 56.0 L523 55.4 L524 55.4 L524 55.4 L525 55.4 L525 55.2 L526 55.2 L526 55.1 L527 55.1 L527 55.8 L528 55.8 L528 55.7 L529 55.7 L529 51.4 L530 51.4 L530 56.1 L531 56.1 L531 55.7 L532 55.7 L532 56.6 L533 56.6 L533 55.2 L534 55.2 L534 56.0 L535 56.0 L535 50.5 L536 50.5 L536 56.1 L537 56.1 L537 56.7 L538 56.7 L538 55.9 L539 55.9 L539 56.0 L540 56.0 L540 57.2 L541 57.2 L541 56.0 L542 56.0 L542 57.2 L543 57.2 L543 55.1 L544 55.1 L544 55.9 L545 55.9 L545 55.9 L546 55.9 L546 55.1 L547 55.1 L547 54.9 L548 54.9 L548 54.6 L549 54.6 L549 54.6 L550 54.6 L550 53.2 L551 53.2 L551 52.8 L552 52.8 L552 53.5 L553 53.5 L553 53.3 L554 53.3 L554 55.6 L555 55.6 L555 54.4 L556 54.4 L556 55.0 L557 55.0 L557 55.1 L558 55.1 L558 55.7 L559 55.7 L559 54.7 L560 54.7 L560 53.0 L561 53.0 L561 53.5 L562 53.5 L562 54.5 L563 54.5 L563 50.7 L564 50.7 L564 54.9 L565 54.9 L565 55.0 L566 55.0 L566 54.2 L567 54.2 L567 54.8 L568 54.8 L568 53.7 L569 53.7 L569 50.3 L570 50.3 L570 52.9 L571 52.9 L571 53.4 L572 53.4 L572 53.4 L573 53.4 L573 55.6 L574 55.6 L574 53.2 L575 53.2 L575 54.4 L576 54.4 L576 54.1 L577 54.1 L577 54.0 L578 54.0 L578 54.9 L579 54.9 L579 53.6 L580 53.6 L580 54.0 L581 54.0 L581 53.7 L582 53.7 L582 54.6 L583 54.6 L583 53.8 L584 53.8 L584 52.7 L585 52.7 L585 53.6 L586 53.6 L586 54.6 L587 54.6 L587 52.5 L588 52.5 L588 44.6 L589 44.6 L589 53.9 L590 53.9 L590 44.4 L591 44.4 L591 53.2 L592 53.2 L592 52.7 L593 52.7 L593 47.6 L594 47.6 L594 51.2 L595 51.2 L595 53.5 L596 53.5 L596 53.3 L597 53.3 L597 53.6 L598 53.6 L598 51.9 L599 51.9 L599 53.8 L600 53.8 L600 54.4 L601 54.4 L601 51.5 L602 51.5 L602 54.1 L603 54.1 L603 52.6 L604 52.6 L604 46.0 L605 46.0 L605 54.0 L606 54.0 L606 50.2 L607 50.2 L607 52.9 L608 52.9 L608 54.4 L609 54.4 L609 53.2 L610 53.2 L610 51.7 L611 51.7 L611 51.2 L612 51.2 L612 53.7 L613 53.7 L613 53.6 L614 53.6 L614 54.3 L615 54.3 L615 53.5 L616 53.5 L616 54.0 L617 54.0 L617 54.0 L618 54.0 L618 52.5 L619 52.5 L619 51.6 L620 51.6 L620 52.1 L621 52.1 L621 53.5 L622 53.5 L622 53.6 L623 53.6 L623 53.1 L624 53.1 L624 52.3 L625 52.3 L625 52.0 L626 52.0 L626 51.5 L627 51.5 L627 52.8 L628 52.8 L628 53.7 L629 53.7 L629 54.5 L630 54.5 L630 52.9 L631 52.9 L631 52.0 L632 52.0 L632 52.0 L633 52.0 L633 51.3 L634 51.3 L634 52.6 L635 52.6 L635 50.5 L636 50.5 L636 51.7 L637 51.7 L637 43.1 L638 43.1 L638 50.8 L639 50.8 L639 50.3 L640 50.3 L640 52.0 L641 52.0 L641 52.0 L642 52.0 L642 52.2 L643 52.2 L643 46.8 L644 46.8 L644 50.4 L645 50.4 L645 51.8 L646 51.8 L646 49.7 L647 49.7 L647 47.1 L648 47.1 L648 53.8 L649 53.8 L649 51.0 L650 51.0 L650 52.2 L651 52.2 L651 53.3 L652 53.3 L652 51.5 L653 51.5 L653 53.2 L654 53.2 L654 53.0 L655 53.0 L655 53.7 L656 53.7 L656 52.1 L657 52.1 L657 50.9 L658 50.9 L658 53.2 L659 53.2 L659 53.0 L660 53.0 L660 53.4 L661 53.4 L661 51.9 L662 51.9 L662 52.4 L663 52.4 L663 53.2 L664 53.2 L664 52.7 L665 52.7 L665 51.0 L666 51.0 L666 51.7 L667 51.7 L667 39.5 L668 39.5 L668 51.9 L669 51.9 L669 53.5 L670 53.5 L670 51.9 L671 51.9 L671 45.8 L672 45.8 L672 51.9 L673 51.9 L673 49.3 L674 49.3 L674 42.7 L675 42.7 L675 50.6 L676 50.6 L676 51.8 L677 51.8 L677 50.4 L678 50.4 L678 53.2 L679 53.2 L679 52.3 L680 52.3 L680 53.4 L681 53.4 L681 50.9 L682 50.9 L682 52.4 L683 52.4 L683 52.1 L684 52.1 L684 51.6 L685 51.6 L685 46.2 L686 46.2 L686 51.6 L687 51.6 L687 51.7 L688 51.7 L688 49.4 L689 49.4 L689 51.9 L690 51.9 L690 52.7 L691 52.7 L691 52.2 L692 52.2 L692 51.6 L693 51.6 L693 45.6 L694 45.6 L694 51.9 L695 51.9 L695 53.3 L696 53.3 L696 53.9 L697 53.9 L697 53.6 L698 53.6 L698 52.0 L699 52.0 L699 52.5 L700 52.5 L700 53.7 L701 53.7 L701 51.9 L702 51.9 L702 50.9 L703 50.9 L703 50.2 L704 50.2 L704 52.3 L705 52.3 L705 51.4 L706 51.4 L706 53.5 L707 53.5 L707 53.0 L708 53.0 L708 52.6 L709 52.6 L709 53.4 L710 53.4 L710 53.6 L711 53.6 L711 52.9 L712 52.9 L712 52.2 L713 52.2 L713 54.1 L714 54.1 L714 51.3 L715 51.3 L715 40.2 L716 40.2 L716 52.1 L717 52.1 L717 52.6 L718 52.6 L718 53.3 L719 53.3 L719 53.3 L720 53.3 L720 53.3 L721 53.3 L721 53.2 L722 53.2 L722 54.2 L723 54.2 L723 53.2 L724 53.2 L724 51.4 L725 51.4 L725 43.1 L726 43.1 L726 52.2 L727 52.2 L727 53.3 L728 53.3 L728 51.5 L729 51.5 L729 52.4 L730 52.4 L730 53.5 L731 53.5 L731 52.0 L732 52.0 L732 51.6 L733 51.6 L733 54.3 L734 54.3 L734 53.9 L735 53.9 L735 53.1 L736 53.1 L736 52.4 L737 52.4 L737 54.2 L738 54.2 L738 52.2 L739 52.2 L739 53.1 L740 53.1 L740 52.0 L741 52.0 L741 53.9 L742 53.9 L742 54.1 L743 54.1 L743 54.2 L744 54.2 L744 54.2 L745 54.2 L745 53.9 L746 53.9 L746 52.1 L747 52.1 L747 45.1 L748 45.1 L748 50.3 L749 50.3 L749 53.4 L750 53.4 L750 52.3 L751 52.3 L751 54.8 L752 54.8 L752 54.4 L753 54.4 L753 53.7 L754 53.7 L754 55.1 L755 55.1 L755 54.3 L756 54.3 L756 55.8 L757 55.8 L757 54.2 L758 54.2 L758 54.5 L759 54.5 L759 47.8 L760 47.8 L760 55.7 L761 55.7 L761 53.1 L762 53.1 L762 54.4 L763 54.4 L763 55.5 L764 55.5 L764 55.3 L765 55.3 L765 54.2 L766 54.2 L766 55.0 L767 55.0 L767 55.9 L768 55.9 L768 55.1 L769 55.1 L769 56.0 L770 56.0 L770 56.0 L771 56.0 L771 55.4 L772 55.4 L772 54.8 L773 54.8 L773 54.4 L774 54.4 L774 53.2 L775 53.2 L775 54.9 L776 54.9 L776 53.9 L777 53.9 L777 55.2 L778 55.2 L778 56.5 L779 56.5 L779 56.5 L780 56.5 L780 55.7 L781 55.7 L781 56.4 L782 56.4 L782 56.5 L783 56.5 L783 56.0 L784 56.0 L784 55.7 L785 55.7 L785 51.2 L786 51.2 L786 54.8 L787 54.8 L787 55.8 L788 55.8 L788 55.9 L789 55.9 L789 55.3 L790 55.3 L790 56.4 L791 56.4 L791 56.4 L792 56.4 L792 56.9 L793 56.9 L793 56.8 L794 56.8 L794 56.7 L795 56.7 L795 56.3 L796 56.3 L796 57.8 L797 57.8 L797 56.9 L798 56.9 L798 56.6 L799 56.6 L799 56.3 L800 56.3 L800 56.8 L801 56.8 L801 57.3 L802 57.3 L802 57.6 L803 57.6 L803 57.8 L804 57.8 L804 57.9 L805 57.9 L805 58.4 L806 58.4 L806 58.6 L807 58.6 L807 58.0 L808 58.0 L808 58.0 L809 58.0 L809 57.8 L810 57.8 L810 58.6 L811 58.6 L811 58.3 L812 58.3 L812 57.9 L813 57.9 L813 58.3 L814 58.3 L814 58.5 L815 58.5 L815 58.8 L816 58.8 L816 58.7 L817 58.7 L817 59.1 L818 59.1 L818 59.2 L819 59.2 L819 58.7 L820 58.7 L820 59.3 L821 59.3 L821 59.5 L822 59.5 L822 59.5 L823 59.5 L823 60.1 L824 60.1 L824 60.0 L825 60.0 L825 60.1 L826 60.1 L826 60.6 L827 60.6 L827 60.7 L828 60.7 L828 60.6 L829 60.6 L829 60.6 L830 60.6 L830 60.9 L831 60.9 L831 61.0 L832 61.0 L832 61.4 L833 61.4 L833 62.0 L834 62.0 L834 62.0 L835 62.0 L835 62.0 L836 62.0 L836 62.0 L837 62.0 L837 62.0 L838 62.0 L838 62.0 L839 62.0 L839 62.0 L840 62.0 L840 62.0 L841 62.0 L841 62.0 L842 62.0 L842 62.0 L843 62.0 L843 62.0 L844 62.0 L844 62.0 L845 62.0 L845 62.0 L846 62.0 L846 62.0 L847 62.0 L847 62.0 L848 62.0 L848 62.0 L849 62.0 L849 62.0 L850 62.0 L850 62.0 L851 62.0 L851 62.0 L852 62.0 L852 62.0 L853 62.0 L853 62.0 L854 62.0 L854 62.0 L855 62.0 L855 62.0 L856 62.0 L856 62.0 L857 62.0 L857 62.0 L858 62.0 L858 62.0 L859 62.0 L859 62.0 L860 62.0 L860 62.0 L861 62.0 L861 62.0 L862 62.0 L862 62.0 L863 62.0 L863 62.0 L864 62.0 L864 62.0 L865 62.0 L865 62.0 L866 62.0 L866 62.0 L867 62.0 L867 62.0 L868 62.0 L868 62.0 L869 62.0 L869 62.0 L870 62.0 L870 62.0 L871 62.0 L871 62.0 L872 62.0 L872 62.0 L873 62.0 L873 62.0 L874 62.0 L874 62.0 L875 62.0 L875 62.0 L876 62.0 L876 62.0 L877 62.0 L877 62.0 L878 62.0 L878 62.0 L879 62.0 L879 62.0 L880 62.0 L880 62.0 L881 62.0 L881 62.0 L882 62.0 L882 62.0 L883 62.0 L883 62.0 L884 62.0 L884 62.0 L885 62.0 L885 62.0 L886 62.0 L886 62.0 L887 62.0 L887 62.0 L888 62.0 L888 62.0 L889 62.0 L889 62.0 L890 62.0 L890 62.0 L891 62.0 L891 62.0 L892 62.0 L892 62.0 L893 62.0 L893 62.0 L894 62.0 L894 62.0 L895 62.0 L895 62.0 L896 62.0 L896 62.0 L897 62.0 L897 62.0 L898 62.0 L898 62.0 L899 62.0 L899 62.0 L900 62.0 L900 62.0 L901 62.0 L901 62.0 L902 62.0 L902 62.0 L903 62.0 L903 62.0 L904 62.0 L904 62.0 L905 62.0 L905 62.0 L906 62.0 L906 62.0 L907 62.0 L907 62.0 L908 62.0 L908 62.0 L909 62.0 L909 62.0 L910 62.0 L910 62.0 L911 62.0 L911 62.0 L912 62.0 L912 62.0 L913 62.0 L913 62.0 L914 62.0 L914 62.0 L915 62.0 L915 62.0 L916 62.0 L916 62.0 L917 62.0 L917 62.0 L918 62.0 L918 62.0 L919 62.0 L919 62.0 L920 62.0 L920 62.0 L921 62.0 L921 62.0 L922 62.0 L922 62.0 L923 62.0 L923 62.0 L924 62.0 L924 62.0 L925 62.0 L925 62.0 L926 62.0 L926 62.0 L927 62.0 L927 62.0 L928 62.0 L928 62.0 L929 62.0 L929 62.0 L930 62.0 L930 62.0 L931 62.0 L931 62.0 L932 62.0 L932 62.0 L933 62.0 L933 62.0 L934 62.0 L934 62.0 L935 62.0 L935 62.0 L936 62.0 L936 62.0 L937 62.0 L937 62.0 L938 62.0 L938 62.0 L939 62.0 L939 62.0 L940 62.0 L940 62.0 L941 62.0 L941 62.0 L942 62.0 L942 62.0 L943 62.0 L943 62.0 L944 62.0 L944 62.0 L945 62.0 L945 62.0 L946 62.0 L946 62.0 L947 62.0 L947 62.0 L948 62.0 L948 62.0 L949 62.0 L949 62.0 L950 62.0 L950 62.0 L951 62.0 L951 62.0 L952 62.0 L952 62.0 L953 62.0 L953 62.0 L954 62.0 L954 62.0 L955 62.0 L955 62.0 L956 62.0 L956 62.0 L957 62.0 L957 62.0 L958 62.0 L958 62.0 L959 62.0 L959 62.0 L960 62.0 L960 62.0 L961 62.0 L961 62.0 L962 62.0 L962 62.0 L963 62.0 L963 62.0 L964 62.0 L964 62.0 L965 62.0 L965 62.0 L966 62.0 L966 62.0 L967 62.0 L967 62.0 L968 62.0 L968 62.0 L969 62.0 L969 62.0 L970 62.0 L970 62.0 L971 62.0 L971 62.0 L972 62.0 L972 62.0 L973 62.0 L973 62.0 L974 62.0 L974 62.0 L975 62.0 L975 62.0 L976 62.0 L976 62.0 L977 62.0 L977 62.0 L978 62.0 L978 62.0 L979 62.0 L979 62.0 L980 62.0 L980 62.0 L981 62.0 L981 62.0 L982 62.0 L982 62.0 L983 62.0 L983 61.4 L984 61.4 L984 61.5 L985 61.5 L985 60.3 L986 60.3 L986 61.2 L987 61.2 L987 61.2 L988 61.2 L988 61.1 L989 61.1 L989 61.1 L990 61.1 L990 60.9 L991 60.9 L991 60.8 L992 60.8 L992 61.1 L993 61.1 L993 60.7 L994 60.7 L994 60.7 L995 60.7 L995 60.5 L996 60.5 L996 57.9 L997 57.9 L997 60.6 L998 60.6 L998 60.0 L999 60.0 L999 60.0 L1000 60.0 L1000 60.0 L1001 60.0 L1001 59.9 L1002 59.9 L1002 56.3 L1003 56.3 L1003 60.0 L1004 60.0 L1004 60.0 L1005 60.0 L1005 60.0 L1006 60.0 L1006 59.5 L1007 59.5 L1007 59.7 L1008 59.7 L1008 59.0 L1009 59.0 L1009 59.1 L1010 59.1 L1010 58.8 L1011 58.8 L1011 58.9 L1012 58.9 L1012 58.0 L1013 58.0 L1013 58.3 L1014 58.3 L1014 59.3 L1015 59.3 L1015 58.7 L1016 58.7 L1016 59.4 L1017 59.4 L1017 59.2 L1018 59.2 L1018 59.3 L1019 59.3 L1019 59.0 L1020 59.0 L1020 58.9 L1021 58.9 L1021 59.4 L1022 59.4 L1022 58.6 L1023 58.6 L1023 57.5 L1024 57.5 L1024 57.3 L1025 57.3 L1025 57.5 L1026 57.5 L1026 58.4 L1027 58.4 L1027 57.7 L1028 57.7 L1028 58.8 L1029 58.8 L1029 59.0 L1030 59.0 L1030 58.5 L1031 58.5 L1031 58.8 L1032 58.8 L1032 58.2 L1033 58.2 L1033 59.2 L1034 59.2 L1034 58.5 L1035 58.5 L1035 57.4 L1036 57.4 L1036 56.0 L1037 56.0 L1037 58.2 L1038 58.2 L1038 57.5 L1039 57.5 L1039 54.2 L1040 54.2 L1040 57.7 L1041 57.7 L1041 57.2 L1042 57.2 L1042 56.8 L1043 56.8 L1043 54.2 L1044 54.2 L1044 57.9 L1045 57.9 L1045 58.3 L1046 58.3 L1046 53.5 L1047 53.5 L1047 58.6 L1048 58.6 L1048 58.1 L1049 58.1 L1049 57.8 L1050 57.8 L1050 56.7 L1051 56.7 L1051 56.7 L1052 56.7 L1052 57.0 L1053 57.0 L1053 57.4 L1054 57.4 L1054 57.4 L1055 57.4 L1055 56.8 L1056 56.8 L1056 57.1 L1057 57.1 L1057 56.1 L1058 56.1 L1058 57.2 L1059 57.2 L1059 56.5 L1060 56.5 L1060 57.7 L1061 57.7 L1061 57.8 L1062 57.8 L1062 56.5 L1063 56.5 L1063 53.3 L1064 53.3 L1064 57.9 L1065 57.9 L1065 54.5 L1066 54.5 L1066 56.4 L1067 56.4 L1067 56.6 L1068 56.6 L1068 57.1 L1069 57.1 L1069 56.6 L1070 56.6 L1070 56.8 L1071 56.8 L1071 57.1 L1072 57.1 L1072 57.0 L1073 57.0 L1073 56.6 L1074 56.6 L1074 56.8 L1075 56.8 L1075 57.1 L1076 57.1 L1076 57.6 L1077 57.6 L1077 57.0 L1078 57.0 L1078 55.5 L1079 55.5 L1079 56.0 L1080 56.0 L1080 56.6 L1081 56.6 L1081 56.8 L1082 56.8 L1082 57.2 L1083 57.2 L1083 56.0 L1084 56.0 L1084 56.5 L1085 56.5 L1085 56.6 L1086 56.6 L1086 57.5 L1087 57.5 L1087 56.9 L1088 56.9 L1088 55.2 L1089 55.2 L1089 57.0 L1090 57.0 L1090 55.3 L1091 55.3 L1091 55.5 L1092 55.5 L1092 51.9 L1093 51.9 L1093 56.2 L1094 56.2 L1094 56.2 L1095 56.2 L1095 56.4 L1096 56.4 L1096 57.0 L1097 57.0 L1097 55.5 L1098 55.5 L1098 54.9 L1099 54.9 L1099 54.6 L1100 54.6 L1100 56.0 L1101 56.0 L1101 56.4 L1102 56.4 L1102 56.8 L1103 56.8 L1103 56.0 L1104 56.0 L1104 55.2 L1105 55.2 L1105 54.6 L1106 54.6 L1106 55.1 L1107 55.1 L1107 53.7 L1108 53.7 L1108 54.7 L1109 54.7 L1109 54.5 L1110 54.5 L1110 55.0 L1111 55.0 L1111 53.9 L1112 53.9 L1112 54.8 L1113 54.8 L1113 54.2 L1114 54.2 L1114 54.3 L1115 54.3 L1115 54.8 L1116 54.8 L1116 53.1 L1117 53.1 L1117 52.9 L1118 52.9 L1118 54.2 L1119 54.2 L1119 55.6 L1120 55.6 L1120 53.8 L1121 53.8 L1121 49.3 L1122 49.3 L1122 53.7 L1123 53.7 L1123 54.2 L1124 54.2 L1124 54.0 L1125 54.0 L1125 52.9 L1126 52.9 L1126 55.2 L1127 55.2 L1127 54.7 L1128 54.7 L1128 54.8 L1129 54.8 L1129 55.2 L1130 55.2 L1130 54.4 L1131 54.4 L1131 53.3 L1132 53.3 L1132 54.2 L1133 54.2 L1133 54.8 L1134 54.8 L1134 45.6 L1135 45.6 L1135 54.6 L1136 54.6 L1136 52.7 L1137 52.7 L1137 53.5 L1138 53.5 L1138 56.1 L1139 56.1 L1139 54.3 L1140 54.3 L1140 53.5 L1141 53.5 L1141 53.7 L1142 53.7 L1142 44.7 L1143 44.7 L1143 46.5 L1144 46.5 L1144 52.9 L1145 52.9 L1145 51.9 L1146 51.9 L1146 45.5 L1147 45.5 L1147 52.9 L1148 52.9 L1148 52.5 L1149 52.5 L1149 54.8 L1150 54.8 L1150 53.9 L1151 53.9 L1151 54.0 L1152 54.0 L1152 55.5 L1153 55.5 L1153 53.6 L1154 53.6 L1154 48.4 L1155 48.4 L1155 52.6 L1156 52.6 L1156 43.0 L1157 43.0 L1157 52.0 L1158 52.0 L1158 51.5 L1159 51.5 L1159 51.7 L1160 51.7 L1160 51.1 L1161 51.1 L1161 53.3 L1162 53.3 L1162 51.7 L1163 51.7 L1163 51.9 L1164 51.9 L1164 52.5 L1165 52.5 L1165 41.8 L1166 41.8 L1166 52.7 L1167 52.7 L1167 53.2 L1168 53.2 L1168 53.5 L1169 53.5 L1169 52.4 L1170 52.4 L1170 51.4 L1171 51.4 L1171 53.5 L1172 53.5 L1172 52.2 L1173 52.2 L1173 52.2 L1174 52.2 L1174 52.1 L1175 52.1 L1175 52.5 L1176 52.5 L1176 52.5 L1177 52.5 L1177 51.9 L1178 51.9 L1178 52.0 L1179 52.0 L1179 52.8 L1180 52.8 L1180 52.3 L1181 52.3 L1181 52.2 L1182 52.2 L1182 53.8 L1183 53.8 L1183 53.3 L1184 53.3 L1184 52.5 L1185 52.5 L1185 53.1 L1186 53.1 L1186 52.7 L1187 52.7 L1187 51.9 L1188 51.9 L1188 54.3 L1189 54.3 L1189 51.7 L1190 51.7 L1190 53.0 L1191 53.0 L1191 52.0 L1192 52.0 L1192 50.3 L1193 50.3 L1193 53.6 L1194 53.6 L1194 52.9 L1195 52.9 L1195 53.1 L1196 53.1 L1196 52.9 L1197 52.9 L1197 53.9 L1198 53.9 L1198 53.1 L1199 53.1 L1199 53.0 L1200 53.0 L1200 53.0 L1201 53.0 L1201 53.3 L1202 53.3 L1202 51.6 L1203 51.6 L1203 48.4 L1204 48.4 L1204 47.7 L1205 47.7 L1205 50.3 L1206 50.3 L1206 52.2 L1207 52.2 L1207 52.1 L1208 52.1 L1208 53.2 L1209 53.2 L1209 51.3 L1210 51.3 L1210 53.5 L1211 53.5 L1211 52.8 L1212 52.8 L1212 51.4 L1213 51.4 L1213 51.8 L1214 51.8 L1214 51.3 L1215 51.3 L1215 51.1 L1216 51.1 L1216 51.2 L1217 51.2 L1217 51.8 L1218 51.8 L1218 53.8 L1219 53.8 L1219 53.0 L1220 53.0 L1220 53.0 L1221 53.0 L1221 54.1 L1222 54.1 L1222 52.9 L1223 52.9 L1223 52.0 L1224 52.0 L1224 46.6 L1225 46.6 L1225 51.3 L1226 51.3 L1226 50.0 L1227 50.0 L1227 51.6 L1228 51.6 L1228 50.8 L1229 50.8 L1229 51.5 L1230 51.5 L1230 50.4 L1231 50.4 L1231 51.2 L1232 51.2 L1232 52.0 L1233 52.0 L1233 49.7 L1234 49.7 L1234 53.5 L1235 53.5 L1235 52.3 L1236 52.3 L1236 52.2 L1237 52.2 L1237 52.6 L1238 52.6 L1238 51.0 L1239 51.0 L1239 51.3 L1240 51.3 L1240 52.2 L1241 52.2 L1241 52.8 L1242 52.8 L1242 53.0 L1243 53.0 L1243 53.0 L1244 53.0 L1244 52.4 L1245 52.4 L1245 53.2 L1246 53.2 L1246 53.8 L1247 53.8 L1247 51.1 L1248 51.1 L1248 52.1 L1249 52.1 L1249 52.9 L1250 52.9 L1250 51.8 L1251 51.8 L1251 51.4 L1252 51.4 L1252 53.1 L1253 53.1 L1253 52.6 L1254 52.6 L1254 53.5 L1255 53.5 L1255 52.5 L1256 52.5 L1256 53.1 L1257 53.1 L1257 54.0 L1258 54.0 L1258 52.4 L1259 52.4 L1259 53.5 L1260 53.5 L1260 54.5 L1261 54.5 L1261 49.3 L1262 49.3 L1262 50.1 L1263 50.1 L1263 51.9 L1264 51.9 L1264 47.6 L1265 47.6 L1265 51.8 L1266 51.8 L1266 44.1 L1267 44.1 L1267 50.7 L1268 50.7 L1268 50.8 L1269 50.8 L1269 51.9 L1270 51.9 L1270 50.4 L1271 50.4 L1271 45.3 L1272 45.3 L1272 53.1 L1273 53.1 L1273 41.9 L1274 41.9 L1274 51.5 L1275 51.5 L1275 52.1 L1276 52.1 L1276 51.8 L1277 51.8 L1277 50.3 L1278 50.3 L1278 51.2 L1279 51.2 L1279 50.7 L1280 50.7 L1280 51.0 L1281 51.0 L1281 51.2 L1282 51.2 L1282 51.5 L1283 51.5 L1283 49.9 L1284 49.9 L1284 51.9 L1285 51.9 L1285 51.3 L1286 51.3 L1286 53.2 L1287 53.2 L1287 55.0 L1288 55.0 L1288 53.0 L1289 53.0 L1289 53.9 L1290 53.9 L1290 52.3 L1291 52.3 L1291 51.0 L1292 51.0 L1292 53.7 L1293 53.7 L1293 52.1 L1294 52.1 L1294 41.3 L1295 41.3 L1295 51.5 L1296 51.5 L1296 50.9 L1297 50.9 L1297 52.2 L1298 52.2 L1298 51.6 L1299 51.6 L1299 53.7 L1300 53.7 L1300 51.5 L1301 51.5 L1301 53.2 L1302 53.2 L1302 52.9 L1303 52.9 L1303 53.9 L1304 53.9 L1304 55.0 L1305 55.0 L1305 54.9 L1306 54.9 L1306 53.3 L1307 53.3 L1307 54.2 L1308 54.2 L1308 51.7 L1309 51.7 L1309 52.4 L1310 52.4 L1310 51.7 L1311 51.7 L1311 52.8 L1312 52.8 L1312 53.8 L1313 53.8 L1313 53.9 L1314 53.9 L1314 53.6 L1315 53.6 L1315 52.8 L1316 52.8 L1316 52.6 L1317 52.6 L1317 52.0 L1318 52.0 L1318 53.2 L1319 53.2 L1319 53.7 L1320 53.7 L1320 54.1 L1321 54.1 L1321 53.2 L1322 53.2 L1322 52.8 L1323 52.8 L1323 52.4 L1324 52.4 L1324 51.5 L1325 51.5 L1325 52.4 L1326 52.4 L1326 52.2 L1327 52.2 L1327 53.8 L1328 53.8 L1328 53.2 L1329 53.2 L1329 52.0 L1330 52.0 L1330 54.2 L1331 54.2 L1331 54.2 L1332 54.2 L1332 54.6 L1333 54.6 L1333 48.7 L1334 48.7 L1334 55.0 L1335 55.0 L1335 53.0 L1336 53.0 L1336 55.3 L1337 55.3 L1337 55.0 L1338 55.0 L1338 56.2 L1339 56.2 L1339 54.6 L1340 54.6 L1340 55.4 L1341 55.4 L1341 53.5 L1342 53.5 L1342 55.2 L1343 55.2 L1343 54.5 L1344 54.5 L1344 54.8 L1345 54.8 L1345 54.6 L1346 54.6 L1346 56.3 L1347 56.3 L1347 56.2 L1348 56.2 L1348 54.8 L1349 54.8 L1349 47.8 L1350 47.8 L1350 53.5 L1351 53.5 L1351 54.4 L1352 54.4 L1352 56.4 L1353 56.4 L1353 55.0 L1354 55.0 L1354 49.6 L1355 49.6 L1355 56.0 L1356 56.0 L1356 56.3 L1357 56.3 L1357 49.1 L1358 49.1 L1358 55.5 L1359 55.5 L1359 55.8 L1360 55.8 L1360 54.8 L1361 54.8 L1361 55.4 L1362 55.4 L1362 56.8 L1363 56.8 L1363 54.8 L1364 54.8 L1364 54.9 L1365 54.9 L1365 56.2 L1366 56.2 L1366 55.7 L1367 55.7 L1367 48.6 L1368 48.6 L1368 52.4 L1369 52.4 L1369 56.4 L1370 56.4 L1370 56.6 L1371 56.6 L1371 56.9 L1372 56.9 L1372 56.9 L1373 56.9 L1373 56.6 L1374 56.6 L1374 56.8 L1375 56.8 L1375 57.2 L1376 57.2 L1376 56.1 L1377 56.1 L1377 57.1 L1378 57.1 L1378 56.5 L1379 56.5 L1379 56.8 L1380 56.8 L1380 57.0 L1381 57.0 L1381 57.4 L1382 57.4 L1382 53.5 L1383 53.5 L1383 55.8 L1384 55.8 L1384 57.7 L1385 57.7 L1385 56.8 L1386 56.8 L1386 56.6 L1387 56.6 L1387 53.3 L1388 53.3 L1388 57.1 L1389 57.1 L1389 57.0 L1390 57.0 L1390 57.8 L1391 57.8 L1391 58.6 L1392 58.6 L1392 57.9 L1393 57.9 L1393 58.3 L1394 58.3 L1394 58.3 L1395 58.3 L1395 58.1 L1396 58.1 L1396 58.9 L1397 58.9 L1397 55.8 L1398 55.8 L1398 54.5 L1399 54.5 L1399 58.9 L1400 58.9 L1400 58.6 L1401 58.6 L1401 59.0 L1402 59.0 L1402 59.0 L1403 59.0 L1403 59.4 L1404 59.4 L1404 58.7 L1405 58.7 L1405 58.6 L1406 58.6 L1406 58.8 L1407 58.8 L1407 59.3 L1408 59.3 L1408 57.4 L1409 57.4 L1409 59.3 L1410 59.3 L1410 59.4 L1411 59.4 L1411 60.0 L1412 60.0 L1412 59.4 L1413 59.4 L1413 59.7 L1414 59.7 L1414 59.5 L1415 59.5 L1415 59.6 L1416 59.6 L1416 60.0 L1417 60.0 L1417 59.6 L1418 59.6 L1418 59.8 L1419 59.8 L1419 59.6 L1420 59.6 L1420 59.7 L1421 59.7 L1421 59.6 L1422 59.6 L1422 59.9 L1423 59.9 L1423 60.3 L1424 60.3 L1424 60.2 L1425 60.2 L1425 59.9 L1426 59.9 L1426 60.5 L1427 60.5 L1427 60.3 L1428 60.3 L1428 58.6 L1429 58.6 L1429 60.6 L1430 60.6 L1430 60.6 L1431 60.6 L1431 60.5 L1432 60.5 L1432 60.6 L1433 60.6 L1433 60.7 L1434 60.7 L1434 60.9 L1435 60.9 L1435 61.0 L1436 61.0 L1436 61.4 L1437 61.4 L1437 61.4 L1438 61.4 L1438 61.4 L1439 61.4 L1439 61.5 L1440 61.5 L1440 62.0 L1441 62.0 L1441 62.0 L1442 62.0 L1442 62.0 L1443 62.0 L1443 62.0 L1444 62.0 L1444 62.0 L1445 62.0 L1445 62.0 L1446 62.0 L1446 62.0 L1447 62.0 L1447 62.0 L1448 62.0 L1448 62.0 L1449 62.0 L1449 62.0 L1450 62.0 L1450 62.0 L1451 62.0 L1451 62.0 L1452 62.0 L1452 62.0 L1453 62.0 L1453 62.0 L1454 62.0 L1454 62.0 L1455 62.0 L1455 62.0 L1456 62.0 L1456 62.0 L1457 62.0 L1457 62.0 L1458 62.0 L1458 62.0 L1459 62.0 L1459 62.0 L1460 62.0 L1460 62.0 L1461 62.0 L1461 62.0 L1462 62.0 L1462 62.0 L1463 62.0 L1463 62.0 L1464 62.0 L1464 62.0 L1465 62.0 L1465 62.0 L1466 62.0 L1466 62.0 L1467 62.0 L1467 62.0 L1468 62.0 L1468 62.0 L1469 62.0 L1469 62.0 L1470 62.0 L1470 62.0 L1471 62.0 L1471 62.0 L1472 62.0 L1472 62.0 L1473 62.0 L1473 62.0 L1474 62.0 L1474 62.0 L1475 62.0 L1475 62.0 L1476 62.0 L1476 62.0 L1477 62.0 L1477 62.0 L1478 62.0 L1478 62.0 L1479 62.0 L1479 62.0 L1480 62.0 L1480 62.0 L1481 62.0 L1481 62.0 L1482 62.0 L1482 62.0 L1483 62.0 L1483 62.0 L1484 62.0 L1484 62.0 L1485 62.0 L1485 62.0 L1486 62.0 L1486 62.0 L1487 62.0 L1487 62.0 L1488 62.0 L1488 62.0 L1489 62.0 L1489 62.0 L1490 62.0 L1490 62.0 L1491 62.0 L1491 62.0 L1492 62.0 L1492 62.0 L1493 62.0 L1493 62.0 L1494 62.0 L1494 62.0 L1495 62.0 L1495 62.0 L1496 62.0 L1496 62.0 L1497 62.0 L1497 62.0 L1498 62.0 L1498 62.0 L1499 62.0 L1499 62.0 L1500 62.0 L1500 62.0 L1501 62.0 L1501 62.0 L1502 62.0 L1502 62.0 L1503 62.0 L1503 62.0 L1504 62.0 L1504 62.0 L1505 62.0 L1505 62.0 L1506 62.0 L1506 62.0 L1507 62.0 L1507 62.0 L1508 62.0 L1508 62.0 L1509 62.0 L1509 62.0 L1510 62.0 L1510 62.0 L1511 62.0 L1511 62.0 L1512 62.0 L1512 62.0 L1513 62.0 L1513 62.0 L1514 62.0 L1514 62.0 L1515 62.0 L1515 62.0 L1516 62.0 L1516 62.0 L1517 62.0 L1517 62.0 L1518 62.0 L1518 62.0 L1519 62.0 L1519 62.0 L1520 62.0 L1520 62.0 L1521 62.0 L1521 62.0 L1522 62.0 L1522 62.0 L1523 62.0 L1523 62.0 L1524 62.0 L1524 62.0 L1525 62.0 L1525 62.0 L1526 62.0 L1526 62.0 L1527 62.0 L1527 62.0 L1528 62.0 L1528 62.0 L1529 62.0 L1529 62.0 L1530 62.0 L1530 62.0 L1531 62.0 L1531 62.0 L1532 62.0 L1532 62.0 L1533 62.0 L1533 62.0 L1534 62.0 L1534 62.0 L1535 62.0 L1535 62.0 L1536 62.0 L1536 62.0 L1537 62.0 L1537 62.0 L1538 62.0 L1538 62.0 L1539 62.0 L1539 62.0 L1540 62.0 L1540 62.0 L1541 62.0 L1541 62.0 L1542 62.0 L1542 62.0 L1543 62.0 L1543 62.0 L1544 62.0 L1544 62.0 L1545 62.0 L1545 62.0 L1546 62.0 L1546 62.0 L1547 62.0 L1547 62.0 L1548 62.0 L1548 62.0 L1549 62.0 L1549 62.0 L1550 62.0 L1550 62.0 L1551 62.0 L1551 62.0 L1552 62.0 L1552 62.0 L1553 62.0 L1553 62.0 L1554 62.0 L1554 62.0 L1555 62.0 L1555 62.0 L1556 62.0 L1556 62.0 L1557 62.0 L1557 62.0 L1558 62.0 L1558 62.0 L1559 62.0 L1559 62.0 L1560 62.0 L1560 62.0 L1561 62.0 L1561 62.0 L1562 62.0 L1562 62.0 L1563 62.0 L1563 62.0 L1564 62.0 L1564 62.0 L1565 62.0 L1565 62.0 L1566 62.0 L1566 62.0 L1567 62.0 L1567 62.0 L1568 62.0 L1568 62.0 L1569 62.0 L1569 62.0 L1570 62.0 L1570 62.0 L1571 62.0 L1571 62.0 L1572 62.0 L1572 62.0 L1573 62.0 L1573 62.0 L1574 62.0 L1574 62.0 L1575 62.0 L1575 62.0 L1576 62.0 L1576 62.0 L1577 62.0 L1577 62.0 L1578 62.0 L1578 62.0 L1579 62.0 L1579 62.0 L1580 62.0 L1580 62.0 L1581 62.0 L1581 62.0 L1582 62.0 L1582 62.0 L1583 62.0 L1583 62.0 L1584 62.0 L1584 62.0 L1585 62.0 L1585 62.0 L1586 62.0 L1586 62.0 L1587 62.0 L1587 63.0 L1586 63.0 L1586 63.0 L1585 63.0 L1585 63.0 L1584 63.0 L1584 63.0 L1583 63.0 L1583 63.0 L1582 63.0 L1582 63.0 L1581 63.0 L1581 63.0 L1580 63.0 L1580 63.0 L1579 63.0 L1579 63.0 L1578 63.0 L1578 63.0 L1577 63.0 L1577 63.0 L1576 63.0 L1576 63.0 L1575 63.0 L1575 63.0 L1574 63.0 L1574 63.0 L1573 63.0 L1573 63.0 L1572 63.0 L1572 63.0 L1571 63.0 L1571 63.0 L1570 63.0 L1570 63.0 L1569 63.0 L1569 63.0 L1568 63.0 L1568 63.0 L1567 63.0 L1567 63.0 L1566 63.0 L1566 63.0 L1565 63.0 L1565 63.0 L1564 63.0 L1564 63.0 L1563 63.0 L1563 63.0 L1562 63.0 L1562 63.0 L1561 63.0 L1561 63.0 L1560 63.0 L1560 63.0 L1559 63.0 L1559 63.0 L1558 63.0 L1558 63.0 L1557 63.0 L1557 63.0 L1556 63.0 L1556 63.0 L1555 63.0 L1555 63.0 L1554 63.0 L1554 63.0 L1553 63.0 L1553 63.0 L1552 63.0 L1552 63.0 L1551 63.0 L1551 63.0 L1550 63.0 L1550 63.0 L1549 63.0 L1549 63.0 L1548 63.0 L1548 63.0 L1547 63.0 L1547 63.0 L1546 63.0 L1546 63.0 L1545 63.0 L1545 63.0 L1544 63.0 L1544 63.0 L1543 63.0 L1543 63.0 L1542 63.0 L1542 63.0 L1541 63.0 L1541 63.0 L1540 63.0 L1540 63.0 L1539 63.0 L1539 63.0 L1538 63.0 L1538 63.0 L1537 63.0 L1537 63.0 L1536 63.0 L1536 63.0 L1535 63.0 L1535 63.0 L1534 63.0 L1534 63.0 L1533 63.0 L1533 63.0 L1532 63.0 L1532 63.0 L1531 63.0 L1531 63.0 L1530 63.0 L1530 63.0 L1529 63.0 L1529 63.0 L1528 63.0 L1528 63.0 L1527 63.0 L1527 63.0 L1526 63.0 L1526 63.0 L1525 63.0 L1525 63.0 L1524 63.0 L1524 63.0 L1523 63.0 L1523 63.0 L1522 63.0 L1522 63.0 L1521 63.0 L1521 63.0 L1520 63.0 L1520 63.0 L1519 63.0 L1519 63.0 L1518 63.0 L1518 63.0 L1517 63.0 L1517 63.0 L1516 63.0 L1516 63.0 L1515 63.0 L1515 63.0 L1514 63.0 L1514 63.0 L1513 63.0 L1513 63.0 L1512 63.0 L1512 63.0 L1511 63.0 L1511 63.0 L1510 63.0 L1510 63.0 L1509 63.0 L1509 63.0 L1508 63.0 L1508 63.0 L1507 63.0 L1507 63.0 L1506 63.0 L1506 63.0 L1505 63.0 L1505 63.0 L1504 63.0 L1504 63.0 L1503 63.0 L1503 63.0 L1502 63.0 L1502 63.0 L1501 63.0 L1501 63.0 L1500 63.0 L1500 63.0 L1499 63.0 L1499 63.0 L1498 63.0 L1498 63.0 L1497 63.0 L1497 63.0 L1496 63.0 L1496 63.0 L1495 63.0 L1495 63.0 L1494 63.0 L1494 63.0 L1493 63.0 L1493 63.0 L1492 63.0 L1492 63.0 L1491 63.0 L1491 63.0 L1490 63.0 L1490 63.0 L1489 63.0 L1489 63.0 L1488 63.0 L1488 63.0 L1487 63.0 L1487 63.0 L1486 63.0 L1486 63.0 L1485 63.0 L1485 63.0 L1484 63.0 L1484 63.0 L1483 63.0 L1483 63.0 L1482 63.0 L1482 63.0 L1481 63.0 L1481 63.0 L1480 63.0 L1480 63.0 L1479 63.0 L1479 63.0 L1478 63.0 L1478 63.0 L1477 63.0 L1477 63.0 L1476 63.0 L1476 63.0 L1475 63.0 L1475 63.0 L1474 63.0 L1474 63.0 L1473 63.0 L1473 63.0 L1472 63.0 L1472 63.0 L1471 63.0 L1471 63.0 L1470 63.0 L1470 63.0 L1469 63.0 L1469 63.0 L1468 63.0 L1468 63.0 L1467 63.0 L1467 63.0 L1466 63.0 L1466 63.0 L1465 63.0 L1465 63.0 L1464 63.0 L1464 63.0 L1463 63.0 L1463 63.0 L1462 63.0 L1462 63.0 L1461 63.0 L1461 63.0 L1460 63.0 L1460 63.0 L1459 63.0 L1459 63.0 L1458 63.0 L1458 63.0 L1457 63.0 L1457 63.0 L1456 63.0 L1456 63.0 L1455 63.0 L1455 63.0 L1454 63.0 L1454 63.0 L1453 63.0 L1453 63.0 L1452 63.0 L1452 63.0 L1451 63.0 L1451 63.0 L1450 63.0 L1450 63.0 L1449 63.0 L1449 63.0 L1448 63.0 L1448 63.0 L1447 63.0 L1447 63.0 L1446 63.0 L1446 63.0 L1445 63.0 L1445 63.0 L1444 63.0 L1444 63.0 L1443 63.0 L1443 63.0 L1442 63.0 L1442 63.0 L1441 63.0 L1441 63.0 L1440 63.0 L1440 63.5 L1439 63.5 L1439 63.8 L1438 63.8 L1438 64.0 L1437 64.0 L1437 63.9 L1436 63.9 L1436 64.0 L1435 64.0 L1435 63.9 L1434 63.9 L1434 65.0 L1433 65.0 L1433 64.0 L1432 64.0 L1432 64.3 L1431 64.3 L1431 64.5 L1430 64.5 L1430 64.8 L1429 64.8 L1429 64.5 L1428 64.5 L1428 64.9 L1427 64.9 L1427 64.7 L1426 64.7 L1426 64.7 L1425 64.7 L1425 64.8 L1424 64.8 L1424 64.7 L1423 64.7 L1423 64.7 L1422 64.7 L1422 65.2 L1421 65.2 L1421 65.0 L1420 65.0 L1420 65.5 L1419 65.5 L1419 65.8 L1418 65.8 L1418 65.5 L1417 65.5 L1417 65.2 L1416 65.2 L1416 65.3 L1415 65.3 L1415 64.9 L1414 64.9 L1414 65.2 L1413 65.2 L1413 65.6 L1412 65.6 L1412 65.6 L1411 65.6 L1411 65.6 L1410 65.6 L1410 65.7 L1409 65.7 L1409 65.7 L1408 65.7 L1408 65.9 L1407 65.9 L1407 65.9 L1406 65.9 L1406 66.0 L1405 66.0 L1405 65.9 L1404 65.9 L1404 65.5 L1403 65.5 L1403 65.9 L1402 65.9 L1402 65.6 L1401 65.6 L1401 66.0 L1400 66.0 L1400 66.5 L1399 66.5 L1399 66.2 L1398 66.2 L1398 71.3 L1397 71.3 L1397 66.9 L1396 66.9 L1396 66.1 L1395 66.1 L1395 66.6 L1394 66.6 L1394 66.3 L1393 66.3 L1393 66.8 L1392 66.8 L1392 66.6 L1391 66.6 L1391 66.7 L1390 66.7 L1390 68.9 L1389 68.9 L1389 67.6 L1388 67.6 L1388 67.7 L1387 67.7 L1387 68.3 L1386 68.3 L1386 68.3 L1385 68.3 L1385 69.4 L1384 69.4 L1384 66.9 L1383 66.9 L1383 69.6 L1382 69.6 L1382 67.2 L1381 67.2 L1381 67.4 L1380 67.4 L1380 68.3 L1379 68.3 L1379 71.4 L1378 71.4 L1378 68.8 L1377 68.8 L1377 67.2 L1376 67.2 L1376 67.5 L1375 67.5 L1375 68.5 L1374 68.5 L1374 68.6 L1373 68.6 L1373 68.2 L1372 68.2 L1372 73.2 L1371 73.2 L1371 69.1 L1370 69.1 L1370 68.2 L1369 68.2 L1369 69.5 L1368 69.5 L1368 68.5 L1367 68.5 L1367 68.4 L1366 68.4 L1366 69.5 L1365 69.5 L1365 70.3 L1364 70.3 L1364 69.0 L1363 69.0 L1363 69.9 L1362 69.9 L1362 69.6 L1361 69.6 L1361 69.6 L1360 69.6 L1360 70.5 L1359 70.5 L1359 69.7 L1358 69.7 L1358 70.7 L1357 70.7 L1357 69.3 L1356 69.3 L1356 69.8 L1355 69.8 L1355 70.1 L1354 70.1 L1354 70.9 L1353 70.9 L1353 71.3 L1352 71.3 L1352 70.8 L1351 70.8 L1351 70.8 L1350 70.8 L1350 70.2 L1349 70.2 L1349 70.1 L1348 70.1 L1348 70.8 L1347 70.8 L1347 70.2 L1346 70.2 L1346 74.5 L1345 74.5 L1345 71.9 L1344 71.9 L1344 69.6 L1343 69.6 L1343 71.3 L1342 71.3 L1342 71.1 L1341 71.1 L1341 70.9 L1340 70.9 L1340 72.1 L1339 72.1 L1339 71.2 L1338 71.2 L1338 69.9 L1337 69.9 L1337 82.3 L1336 82.3 L1336 72.6 L1335 72.6 L1335 71.8 L1334 71.8 L1334 69.8 L1333 69.8 L1333 70.8 L1332 70.8 L1332 71.3 L1331 71.3 L1331 70.3 L1330 70.3 L1330 70.4 L1329 70.4 L1329 71.4 L1328 71.4 L1328 77.9 L1327 77.9 L1327 71.9 L1326 71.9 L1326 71.2 L1325 71.2 L1325 70.2 L1324 70.2 L1324 71.9 L1323 71.9 L1323 70.8 L1322 70.8 L1322 73.5 L1321 73.5 L1321 72.6 L1320 72.6 L1320 71.5 L1319 71.5 L1319 71.2 L1318 71.2 L1318 71.6 L1317 71.6 L1317 73.2 L1316 73.2 L1316 71.9 L1315 71.9 L1315 71.4 L1314 71.4 L1314 72.6 L1313 72.6 L1313 70.4 L1312 70.4 L1312 74.3 L1311 74.3 L1311 72.5 L1310 72.5 L1310 75.1 L1309 75.1 L1309 71.7 L1308 71.7 L1308 80.3 L1307 80.3 L1307 71.6 L1306 71.6 L1306 73.7 L1305 73.7 L1305 73.5 L1304 73.5 L1304 72.3 L1303 72.3 L1303 80.7 L1302 80.7 L1302 80.5 L1301 80.5 L1301 72.9 L1300 72.9 L1300 74.6 L1299 74.6 L1299 79.7 L1298 79.7 L1298 72.8 L1297 72.8 L1297 84.9 L1296 84.9 L1296 71.2 L1295 71.2 L1295 71.7 L1294 71.7 L1294 73.5 L1293 73.5 L1293 71.7 L1292 71.7 L1292 73.3 L1291 73.3 L1291 70.8 L1290 70.8 L1290 72.0 L1289 72.0 L1289 71.4 L1288 71.4 L1288 70.8 L1287 70.8 L1287 71.1 L1286 71.1 L1286 72.4 L1285 72.4 L1285 72.4 L1284 72.4 L1284 74.5 L1283 74.5 L1283 73.0 L1282 73.0 L1282 73.9 L1281 73.9 L1281 73.7 L1280 73.7 L1280 84.9 L1279 84.9 L1279 72.0 L1278 72.0 L1278 70.8 L1277 70.8 L1277 71.5 L1276 71.5 L1276 79.1 L1275 79.1 L1275 71.8 L1274 71.8 L1274 73.5 L1273 73.5 L1273 73.6 L1272 73.6 L1272 71.5 L1271 71.5 L1271 72.0 L1270 72.0 L1270 72.8 L1269 72.8 L1269 73.5 L1268 73.5 L1268 83.2 L1267 83.2 L1267 73.4 L1266 73.4 L1266 73.3 L1265 73.3 L1265 73.2 L1264 73.2 L1264 73.7 L1263 73.7 L1263 73.2 L1262 73.2 L1262 84.8 L1261 84.8 L1261 73.7 L1260 73.7 L1260 74.2 L1259 74.2 L1259 75.8 L1258 75.8 L1258 73.6 L1257 73.6 L1257 84.2 L1256 84.2 L1256 70.9 L1255 70.9 L1255 71.7 L1254 71.7 L1254 72.5 L1253 72.5 L1253 73.0 L1252 73.0 L1252 71.6 L1251 71.6 L1251 71.9 L1250 71.9 L1250 73.5 L1249 73.5 L1249 81.6 L1248 81.6 L1248 75.1 L1247 75.1 L1247 74.4 L1246 74.4 L1246 73.0 L1245 73.0 L1245 73.2 L1244 73.2 L1244 74.1 L1243 74.1 L1243 73.0 L1242 73.0 L1242 74.0 L1241 74.0 L1241 75.4 L1240 75.4 L1240 73.3 L1239 73.3 L1239 72.9 L1238 72.9 L1238 74.6 L1237 74.6 L1237 74.8 L1236 74.8 L1236 74.1 L1235 74.1 L1235 73.0 L1234 73.0 L1234 73.6 L1233 73.6 L1233 72.1 L1232 72.1 L1232 73.1 L1231 73.1 L1231 75.0 L1230 75.0 L1230 73.5 L1229 73.5 L1229 73.0 L1228 73.0 L1228 72.0 L1227 72.0 L1227 74.2 L1226 74.2 L1226 73.0 L1225 73.0 L1225 72.0 L1224 72.0 L1224 73.0 L1223 73.0 L1223 84.3 L1222 84.3 L1222 83.7 L1221 83.7 L1221 74.1 L1220 74.1 L1220 74.6 L1219 74.6 L1219 73.4 L1218 73.4 L1218 72.0 L1217 72.0 L1217 74.3 L1216 74.3 L1216 74.5 L1215 74.5 L1215 72.2 L1214 72.2 L1214 74.5 L1213 74.5 L1213 73.2 L1212 73.2 L1212 72.4 L1211 72.4 L1211 76.2 L1210 76.2 L1210 72.4 L1209 72.4 L1209 72.4 L1208 72.4 L1208 71.8 L1207 71.8 L1207 71.2 L1206 71.2 L1206 72.5 L1205 72.5 L1205 70.2 L1204 70.2 L1204 71.7 L1203 71.7 L1203 74.3 L1202 74.3 L1202 73.9 L1201 73.9 L1201 74.2 L1200 74.2 L1200 74.8 L1199 74.8 L1199 72.5 L1198 72.5 L1198 73.1 L1197 73.1 L1197 73.1 L1196 73.1 L1196 72.9 L1195 72.9 L1195 72.3 L1194 72.3 L1194 74.1 L1193 74.1 L1193 70.9 L1192 70.9 L1192 72.5 L1191 72.5 L1191 72.9 L1190 72.9 L1190 72.4 L1189 72.4 L1189 72.3 L1188 72.3 L1188 73.3 L1187 73.3 L1187 72.1 L1186 72.1 L1186 74.1 L1185 74.1 L1185 71.8 L1184 71.8 L1184 71.6 L1183 71.6 L1183 73.2 L1182 73.2 L1182 74.0 L1181 74.0 L1181 72.5 L1180 72.5 L1180 73.5 L1179 73.5 L1179 80.4 L1178 80.4 L1178 72.4 L1177 72.4 L1177 73.6 L1176 73.6 L1176 70.6 L1175 70.6 L1175 80.0 L1174 80.0 L1174 74.4 L1173 74.4 L1173 73.1 L1172 73.1 L1172 72.6 L1171 72.6 L1171 73.1 L1170 73.1 L1170 82.6 L1169 82.6 L1169 78.6 L1168 78.6 L1168 73.3 L1167 73.3 L1167 75.8 L1166 75.8 L1166 72.1 L1165 72.1 L1165 70.1 L1164 70.1 L1164 73.0 L1163 73.0 L1163 74.3 L1162 74.3 L1162 73.8 L1161 73.8 L1161 72.9 L1160 72.9 L1160 71.4 L1159 71.4 L1159 71.1 L1158 71.1 L1158 70.1 L1157 70.1 L1157 70.7 L1156 70.7 L1156 73.5 L1155 73.5 L1155 71.1 L1154 71.1 L1154 71.7 L1153 71.7 L1153 72.3 L1152 72.3 L1152 70.9 L1151 70.9 L1151 71.9 L1150 71.9 L1150 78.7 L1149 78.7 L1149 71.3 L1148 71.3 L1148 70.8 L1147 70.8 L1147 71.1 L1146 71.1 L1146 70.5 L1145 70.5 L1145 76.4 L1144 76.4 L1144 70.7 L1143 70.7 L1143 70.6 L1142 70.6 L1142 69.9 L1141 69.9 L1141 70.4 L1140 70.4 L1140 69.4 L1139 69.4 L1139 72.2 L1138 72.2 L1138 69.7 L1137 69.7 L1137 77.6 L1136 77.6 L1136 69.9 L1135 69.9 L1135 70.1 L1134 70.1 L1134 70.8 L1133 70.8 L1133 70.8 L1132 70.8 L1132 70.9 L1131 70.9 L1131 68.9 L1130 68.9 L1130 70.6 L1129 70.6 L1129 71.6 L1128 71.6 L1128 69.4 L1127 69.4 L1127 71.1 L1126 71.1 L1126 70.1 L1125 70.1 L1125 69.2 L1124 69.2 L1124 69.7 L1123 69.7 L1123 70.9 L1122 70.9 L1122 69.7 L1121 69.7 L1121 69.3 L1120 69.3 L1120 69.3 L1119 69.3 L1119 74.5 L1118 74.5 L1118 69.7 L1117 69.7 L1117 70.2 L1116 70.2 L1116 70.2 L1115 70.2 L1115 69.8 L1114 69.8 L1114 70.9 L1113 70.9 L1113 70.9 L1112 70.9 L1112 71.1 L1111 71.1 L1111 70.3 L1110 70.3 L1110 69.7 L1109 69.7 L1109 74.4 L1108 74.4 L1108 69.6 L1107 69.6 L1107 69.0 L1106 69.0 L1106 68.4 L1105 68.4 L1105 68.8 L1104 68.8 L1104 79.1 L1103 79.1 L1103 70.1 L1102 70.1 L1102 70.7 L1101 70.7 L1101 70.4 L1100 70.4 L1100 69.2 L1099 69.2 L1099 69.4 L1098 69.4 L1098 68.8 L1097 68.8 L1097 68.1 L1096 68.1 L1096 67.6 L1095 67.6 L1095 68.2 L1094 68.2 L1094 68.2 L1093 68.2 L1093 68.0 L1092 68.0 L1092 72.3 L1091 72.3 L1091 73.1 L1090 73.1 L1090 68.9 L1089 68.9 L1089 69.3 L1088 69.3 L1088 68.5 L1087 68.5 L1087 68.3 L1086 68.3 L1086 67.5 L1085 67.5 L1085 69.0 L1084 69.0 L1084 68.3 L1083 68.3 L1083 70.1 L1082 70.1 L1082 69.0 L1081 69.0 L1081 69.5 L1080 69.5 L1080 69.0 L1079 69.0 L1079 68.1 L1078 68.1 L1078 68.3 L1077 68.3 L1077 74.0 L1076 74.0 L1076 68.0 L1075 68.0 L1075 68.2 L1074 68.2 L1074 67.7 L1073 67.7 L1073 67.8 L1072 67.8 L1072 67.0 L1071 67.0 L1071 68.3 L1070 68.3 L1070 68.3 L1069 68.3 L1069 68.6 L1068 68.6 L1068 66.6 L1067 66.6 L1067 68.0 L1066 68.0 L1066 67.2 L1065 67.2 L1065 66.6 L1064 66.6 L1064 67.7 L1063 67.7 L1063 67.0 L1062 67.0 L1062 70.1 L1061 70.1 L1061 68.1 L1060 68.1 L1060 68.5 L1059 68.5 L1059 67.9 L1058 67.9 L1058 68.4 L1057 68.4 L1057 68.0 L1056 68.0 L1056 67.4 L1055 67.4 L1055 67.0 L1054 67.0 L1054 67.3 L1053 67.3 L1053 67.7 L1052 67.7 L1052 71.1 L1051 71.1 L1051 66.3 L1050 66.3 L1050 67.0 L1049 67.0 L1049 67.2 L1048 67.2 L1048 68.0 L1047 68.0 L1047 67.6 L1046 67.6 L1046 67.3 L1045 67.3 L1045 67.9 L1044 67.9 L1044 67.8 L1043 67.8 L1043 67.5 L1042 67.5 L1042 67.6 L1041 67.6 L1041 66.9 L1040 66.9 L1040 67.5 L1039 67.5 L1039 67.7 L1038 67.7 L1038 66.8 L1037 66.8 L1037 66.3 L1036 66.3 L1036 66.7 L1035 66.7 L1035 66.1 L1034 66.1 L1034 67.3 L1033 67.3 L1033 66.9 L1032 66.9 L1032 67.1 L1031 67.1 L1031 67.4 L1030 67.4 L1030 72.4 L1029 72.4 L1029 68.9 L1028 68.9 L1028 66.9 L1027 66.9 L1027 66.6 L1026 66.6 L1026 66.5 L1025 66.5 L1025 67.3 L1024 67.3 L1024 66.6 L1023 66.6 L1023 66.7 L1022 66.7 L1022 66.7 L1021 66.7 L1021 66.5 L1020 66.5 L1020 66.7 L1019 66.7 L1019 66.5 L1018 66.5 L1018 65.9 L1017 65.9 L1017 65.6 L1016 65.6 L1016 67.5 L1015 67.5 L1015 65.7 L1014 65.7 L1014 71.1 L1013 71.1 L1013 66.6 L1012 66.6 L1012 66.2 L1011 66.2 L1011 65.5 L1010 65.5 L1010 66.6 L1009 66.6 L1009 66.1 L1008 66.1 L1008 65.2 L1007 65.2 L1007 65.5 L1006 65.5 L1006 65.8 L1005 65.8 L1005 65.6 L1004 65.6 L1004 65.1 L1003 65.1 L1003 65.1 L1002 65.1 L1002 64.9 L1001 64.9 L1001 67.0 L1000 67.0 L1000 64.9 L999 64.9 L999 64.8 L998 64.8 L998 64.9 L997 64.9 L997 66.1 L996 66.1 L996 64.7 L995 64.7 L995 64.7 L994 64.7 L994 64.6 L993 64.6 L993 64.4 L992 64.4 L992 64.4 L991 64.4 L991 64.2 L990 64.2 L990 64.2 L989 64.2 L989 63.9 L988 63.9 L988 63.9 L987 63.9 L987 63.9 L986 63.9 L986 63.7 L985 63.7 L985 63.5 L984 63.5 L984 64.4 L983 64.4 L983 63.0 L982 63.0 L982 63.0 L981 63.0 L981 63.0 L980 63.0 L980 63.0 L979 63.0 L979 63.0 L978 63.0 L978 63.0 L977 63.0 L977 63.0 L976 63.0 L976 63.0 L975 63.0 L975 63.0 L974 63.0 L974 63.0 L973 63.0 L973 63.0 L972 63.0 L972 63.0 L971 63.0 L971 63.0 L970 63.0 L970 63.0 L969 63.0 L969 63.0 L968 63.0 L968 63.0 L967 63.0 L967 63.0 L966 63.0 L966 63.0 L965 63.0 L965 63.0 L964 63.0 L964 63.0 L963 63.0 L963 63.0 L962 63.0 L962 63.0 L961 63.0 L961 63.0 L960 63.0 L960 63.0 L959 63.0 L959 63.0 L958 63.0 L958 63.0 L957 63.0 L957 63.0 L956 63.0 L956 63.0 L955 63.0 L955 63.0 L954 63.0 L954 63.0 L953 63.0 L953 63.0 L952 63.0 L952 63.0 L951 63.0 L951 63.0 L950 63.0 L950 63.0 L949 63.0 L949 63.0 L948 63.0 L948 63.0 L947 63.0 L947 63.0 L946 63.0 L946 63.0 L945 63.0 L945 63.0 L944 63.0 L944 63.0 L943 63.0 L943 63.0 L942 63.0 L942 63.0 L941 63.0 L941 63.0 L940 63.0 L940 63.0 L939 63.0 L939 63.0 L938 63.0 L938 63.0 L937 63.0 L937 63.0 L936 63.0 L936 63.0 L935 63.0 L935 63.0 L934 63.0 L934 63.0 L933 63.0 L933 63.0 L932 63.0 L932 63.0 L931 63.0 L931 63.0 L930 63.0 L930 63.0 L929 63.0 L929 63.0 L928 63.0 L928 63.0 L927 63.0 L927 63.0 L926 63.0 L926 63.0 L925 63.0 L925 63.0 L924 63.0 L924 63.0 L923 63.0 L923 63.0 L922 63.0 L922 63.0 L921 63.0 L921 63.0 L920 63.0 L920 63.0 L919 63.0 L919 63.0 L918 63.0 L918 63.0 L917 63.0 L917 63.0 L916 63.0 L916 63.0 L915 63.0 L915 63.0 L914 63.0 L914 63.0 L913 63.0 L913 63.0 L912 63.0 L912 63.0 L911 63.0 L911 63.0 L910 63.0 L910 63.0 L909 63.0 L909 63.0 L908 63.0 L908 63.0 L907 63.0 L907 63.0 L906 63.0 L906 63.0 L905 63.0 L905 63.0 L904 63.0 L904 63.0 L903 63.0 L903 63.0 L902 63.0 L902 63.0 L901 63.0 L901 63.0 L900 63.0 L900 63.0 L899 63.0 L899 63.0 L898 63.0 L898 63.0 L897 63.0 L897 63.0 L896 63.0 L896 63.0 L895 63.0 L895 63.0 L894 63.0 L894 63.0 L893 63.0 L893 63.0 L892 63.0 L892 63.0 L891 63.0 L891 63.0 L890 63.0 L890 63.0 L889 63.0 L889 63.0 L888 63.0 L888 63.0 L887 63.0 L887 63.0 L886 63.0 L886 63.0 L885 63.0 L885 63.0 L884 63.0 L884 63.0 L883 63.0 L883 63.0 L882 63.0 L882 63.0 L881 63.0 L881 63.0 L880 63.0 L880 63.0 L879 63.0 L879 63.0 L878 63.0 L878 63.0 L877 63.0 L877 63.0 L876 63.0 L876 63.0 L875 63.0 L875 63.0 L874 63.0 L874 63.0 L873 63.0 L873 63.0 L872 63.0 L872 63.0 L871 63.0 L871 63.0 L870 63.0 L870 63.0 L869 63.0 L869 63.0 L868 63.0 L868 63.0 L867 63.0 L867 63.0 L866 63.0 L866 63.0 L865 63.0 L865 63.0 L864 63.0 L864 63.0 L863 63.0 L863 63.0 L862 63.0 L862 63.0 L861 63.0 L861 63.0 L860 63.0 L860 63.0 L859 63.0 L859 63.0 L858 63.0 L858 63.0 L857 63.0 L857 63.0 L856 63.0 L856 63.0 L855 63.0 L855 63.0 L854 63.0 L854 63.0 L853 63.0 L853 63.0 L852 63.0 L852 63.0 L851 63.0 L851 63.0 L850 63.0 L850 63.0 L849 63.0 L849 63.0 L848 63.0 L848 63.0 L847 63.0 L847 63.0 L846 63.0 L846 63.0 L845 63.0 L845 63.0 L844 63.0 L844 63.0 L843 63.0 L843 63.0 L842 63.0 L842 63.0 L841 63.0 L841 63.0 L840 63.0 L840 63.0 L839 63.0 L839 63.0 L838 63.0 L838 63.0 L837 63.0 L837 63.0 L836 63.0 L836 63.0 L835 63.0 L835 63.0 L834 63.0 L834 63.0 L833 63.0 L833 63.9 L832 63.9 L832 64.1 L831 64.1 L831 63.9 L830 63.9 L830 64.3 L829 64.3 L829 64.6 L828 64.6 L828 64.6 L827 64.6 L827 64.6 L826 64.6 L826 64.9 L825 64.9 L825 66.4 L824 66.4 L824 65.1 L823 65.1 L823 65.6 L822 65.6 L822 65.6 L821 65.6 L821 65.4 L820 65.4 L820 65.3 L819 65.3 L819 66.0 L818 66.0 L818 65.9 L817 65.9 L817 67.7 L816 67.7 L816 65.8 L815 65.8 L815 66.1 L814 66.1 L814 66.7 L813 66.7 L813 66.5 L812 66.5 L812 66.5 L811 66.5 L811 66.3 L810 66.3 L810 66.3 L809 66.3 L809 66.3 L808 66.3 L808 66.3 L807 66.3 L807 66.4 L806 66.4 L806 70.5 L805 70.5 L805 67.0 L804 67.0 L804 66.5 L803 66.5 L803 66.9 L802 66.9 L802 67.3 L801 67.3 L801 66.8 L800 66.8 L800 67.5 L799 67.5 L799 67.5 L798 67.5 L798 67.7 L797 67.7 L797 67.1 L796 67.1 L796 67.7 L795 67.7 L795 74.3 L794 74.3 L794 69.3 L793 69.3 L793 68.4 L792 68.4 L792 69.2 L791 69.2 L791 68.2 L790 68.2 L790 69.7 L789 69.7 L789 76.4 L788 76.4 L788 69.2 L787 69.2 L787 76.1 L786 76.1 L786 69.5 L785 69.5 L785 69.8 L784 69.8 L784 69.4 L783 69.4 L783 70.0 L782 70.0 L782 69.5 L781 69.5 L781 68.4 L780 68.4 L780 69.8 L779 69.8 L779 69.7 L778 69.7 L778 70.4 L777 70.4 L777 69.1 L776 69.1 L776 69.7 L775 69.7 L775 70.1 L774 70.1 L774 70.0 L773 70.0 L773 70.0 L772 70.0 L772 72.5 L771 72.5 L771 69.5 L770 69.5 L770 70.0 L769 70.0 L769 70.1 L768 70.1 L768 70.6 L767 70.6 L767 70.6 L766 70.6 L766 73.7 L765 73.7 L765 68.8 L764 68.8 L764 73.0 L763 73.0 L763 71.0 L762 71.0 L762 70.4 L761 70.4 L761 71.3 L760 71.3 L760 72.2 L759 72.2 L759 72.0 L758 72.0 L758 71.9 L757 71.9 L757 70.8 L756 70.8 L756 71.2 L755 71.2 L755 72.1 L754 72.1 L754 71.1 L753 71.1 L753 72.6 L752 72.6 L752 72.5 L751 72.5 L751 72.0 L750 72.0 L750 75.1 L749 75.1 L749 72.1 L748 72.1 L748 73.0 L747 73.0 L747 71.0 L746 71.0 L746 72.2 L745 72.2 L745 72.6 L744 72.6 L744 72.0 L743 72.0 L743 71.4 L742 71.4 L742 72.1 L741 72.1 L741 79.6 L740 79.6 L740 72.3 L739 72.3 L739 72.3 L738 72.3 L738 72.9 L737 72.9 L737 85.5 L736 85.5 L736 72.9 L735 72.9 L735 71.1 L734 71.1 L734 71.7 L733 71.7 L733 72.7 L732 72.7 L732 73.3 L731 73.3 L731 72.1 L730 72.1 L730 73.4 L729 73.4 L729 71.5 L728 71.5 L728 73.0 L727 73.0 L727 72.6 L726 72.6 L726 72.2 L725 72.2 L725 71.9 L724 71.9 L724 72.6 L723 72.6 L723 71.9 L722 71.9 L722 72.6 L721 72.6 L721 70.5 L720 70.5 L720 72.3 L719 72.3 L719 72.2 L718 72.2 L718 72.3 L717 72.3 L717 72.1 L716 72.1 L716 73.6 L715 73.6 L715 82.1 L714 82.1 L714 73.5 L713 73.5 L713 73.3 L712 73.3 L712 84.3 L711 84.3 L711 71.3 L710 71.3 L710 72.5 L709 72.5 L709 72.4 L708 72.4 L708 71.2 L707 71.2 L707 71.0 L706 71.0 L706 70.2 L705 70.2 L705 72.0 L704 72.0 L704 71.7 L703 71.7 L703 71.8 L702 71.8 L702 69.9 L701 69.9 L701 70.9 L700 70.9 L700 72.8 L699 72.8 L699 74.0 L698 74.0 L698 74.3 L697 74.3 L697 71.5 L696 71.5 L696 72.1 L695 72.1 L695 72.4 L694 72.4 L694 75.4 L693 75.4 L693 74.6 L692 74.6 L692 73.7 L691 73.7 L691 74.8 L690 74.8 L690 74.6 L689 74.6 L689 73.7 L688 73.7 L688 72.3 L687 72.3 L687 84.5 L686 84.5 L686 73.7 L685 73.7 L685 71.9 L684 71.9 L684 72.1 L683 72.1 L683 71.3 L682 71.3 L682 72.5 L681 72.5 L681 73.7 L680 73.7 L680 73.5 L679 73.5 L679 72.4 L678 72.4 L678 72.2 L677 72.2 L677 71.0 L676 71.0 L676 72.0 L675 72.0 L675 71.2 L674 71.2 L674 70.7 L673 70.7 L673 71.8 L672 71.8 L672 72.0 L671 72.0 L671 75.1 L670 75.1 L670 74.3 L669 74.3 L669 74.5 L668 74.5 L668 75.4 L667 75.4 L667 74.6 L666 74.6 L666 74.0 L665 74.0 L665 74.1 L664 74.1 L664 73.6 L663 73.6 L663 73.1 L662 73.1 L662 72.0 L661 72.0 L661 73.2 L660 73.2 L660 73.6 L659 73.6 L659 72.5 L658 72.5 L658 72.2 L657 72.2 L657 72.7 L656 72.7 L656 72.3 L655 72.3 L655 75.1 L654 75.1 L654 73.7 L653 73.7 L653 74.0 L652 74.0 L652 74.9 L651 74.9 L651 75.4 L650 75.4 L650 72.9 L649 72.9 L649 78.4 L648 78.4 L648 70.6 L647 70.6 L647 72.4 L646 72.4 L646 71.3 L645 71.3 L645 71.2 L644 71.2 L644 70.7 L643 70.7 L643 71.7 L642 71.7 L642 70.5 L641 70.5 L641 71.5 L640 71.5 L640 73.4 L639 73.4 L639 74.1 L638 74.1 L638 73.7 L637 73.7 L637 80.1 L636 80.1 L636 71.6 L635 71.6 L635 71.3 L634 71.3 L634 74.2 L633 74.2 L633 74.3 L632 74.3 L632 72.3 L631 72.3 L631 72.5 L630 72.5 L630 72.7 L629 72.7 L629 75.9 L628 75.9 L628 73.4 L627 73.4 L627 72.5 L626 72.5 L626 71.6 L625 71.6 L625 72.6 L624 72.6 L624 71.9 L623 71.9 L623 73.0 L622 73.0 L622 72.0 L621 72.0 L621 71.1 L620 71.1 L620 72.6 L619 72.6 L619 70.6 L618 70.6 L618 70.3 L617 70.3 L617 70.5 L616 70.5 L616 79.4 L615 79.4 L615 71.5 L614 71.5 L614 71.2 L613 71.2 L613 77.7 L612 77.7 L612 71.6 L611 71.6 L611 72.7 L610 72.7 L610 73.1 L609 73.1 L609 71.5 L608 71.5 L608 70.7 L607 70.7 L607 72.1 L606 72.1 L606 81.5 L605 81.5 L605 73.8 L604 73.8 L604 72.0 L603 72.0 L603 71.0 L602 71.0 L602 80.0 L601 80.0 L601 71.8 L600 71.8 L600 72.4 L599 72.4 L599 72.2 L598 72.2 L598 71.2 L597 71.2 L597 72.3 L596 72.3 L596 71.1 L595 71.1 L595 70.6 L594 70.6 L594 71.1 L593 71.1 L593 69.8 L592 69.8 L592 78.3 L591 78.3 L591 72.2 L590 72.2 L590 76.5 L589 76.5 L589 72.2 L588 72.2 L588 77.1 L587 77.1 L587 79.1 L586 79.1 L586 71.9 L585 71.9 L585 71.3 L584 71.3 L584 72.3 L583 72.3 L583 71.6 L582 71.6 L582 70.5 L581 70.5 L581 69.8 L580 69.8 L580 70.0 L579 70.0 L579 72.4 L578 72.4 L578 70.5 L577 70.5 L577 71.1 L576 71.1 L576 70.5 L575 70.5 L575 71.3 L574 71.3 L574 70.7 L573 70.7 L573 71.8 L572 71.8 L572 70.9 L571 70.9 L571 71.7 L570 71.7 L570 70.7 L569 70.7 L569 78.5 L568 78.5 L568 72.4 L567 72.4 L567 71.9 L566 71.9 L566 69.6 L565 69.6 L565 71.1 L564 71.1 L564 71.1 L563 71.1 L563 70.8 L562 70.8 L562 70.8 L561 70.8 L561 71.3 L560 71.3 L560 71.0 L559 71.0 L559 71.3 L558 71.3 L558 70.9 L557 70.9 L557 70.4 L556 70.4 L556 70.9 L555 70.9 L555 69.3 L554 69.3 L554 69.6 L553 69.6 L553 71.1 L552 71.1 L552 69.7 L551 69.7 L551 70.0 L550 70.0 L550 70.1 L549 70.1 L549 71.4 L548 71.4 L548 70.0 L547 70.0 L547 70.0 L546 70.0 L546 68.8 L545 68.8 L545 70.8 L544 70.8 L544 70.0 L543 70.0 L543 70.6 L542 70.6 L542 69.4 L541 69.4 L541 69.8 L540 69.8 L540 70.7 L539 70.7 L539 69.2 L538 69.2 L538 69.8 L537 69.8 L537 69.2 L536 69.2 L536 70.5 L535 70.5 L535 69.9 L534 69.9 L534 72.6 L533 72.6 L533 70.5 L532 70.5 L532 70.0 L531 70.0 L531 68.8 L530 68.8 L530 69.4 L529 69.4 L529 68.7 L528 68.7 L528 69.2 L527 69.2 L527 73.0 L526 73.0 L526 69.0 L525 69.0 L525 69.3 L524 69.3 L524 69.0 L523 69.0 L523 68.1 L522 68.1 L522 67.8 L521 67.8 L521 68.4 L520 68.4 L520 68.0 L519 68.0 L519 68.9 L518 68.9 L518 69.4 L517 69.4 L517 69.6 L516 69.6 L516 69.3 L515 69.3 L515 69.0 L514 69.0 L514 68.1 L513 68.1 L513 68.8 L512 68.8 L512 69.5 L511 69.5 L511 68.0 L510 68.0 L510 68.7 L509 68.7 L509 67.6 L508 67.6 L508 68.4 L507 68.4 L507 68.6 L506 68.6 L506 67.2 L505 67.2 L505 67.6 L504 67.6 L504 70.0 L503 70.0 L503 69.1 L502 69.1 L502 67.8 L501 67.8 L501 67.8 L500 67.8 L500 67.1 L499 67.1 L499 67.1 L498 67.1 L498 68.2 L497 68.2 L497 69.3 L496 69.3 L496 67.3 L495 67.3 L495 67.2 L494 67.2 L494 67.9 L493 67.9 L493 66.9 L492 66.9 L492 70.4 L491 70.4 L491 67.5 L490 67.5 L490 67.2 L489 67.2 L489 66.3 L488 66.3 L488 65.7 L487 65.7 L487 66.5 L486 66.5 L486 66.5 L485 66.5 L485 67.1 L484 67.1 L484 66.4 L483 66.4 L483 66.9 L482 66.9 L482 66.2 L481 66.2 L481 66.2 L480 66.2 L480 66.4 L479 66.4 L479 67.0 L478 67.0 L478 68.8 L477 68.8 L477 66.6 L476 66.6 L476 66.2 L475 66.2 L475 66.3 L474 66.3 L474 66.3 L473 66.3 L473 65.9 L472 65.9 L472 68.7 L471 68.7 L471 65.9 L470 65.9 L470 65.3 L469 65.3 L469 65.3 L468 65.3 L468 66.2 L467 66.2 L467 66.0 L466 66.0 L466 66.1 L465 66.1 L465 66.3 L464 66.3 L464 66.2 L463 66.2 L463 66.2 L462 66.2 L462 65.7 L461 65.7 L461 65.7 L460 65.7 L460 66.0 L459 66.0 L459 65.6 L458 65.6 L458 66.4 L457 66.4 L457 66.3 L456 66.3 L456 65.5 L455 65.5 L455 65.7 L454 65.7 L454 65.8 L453 65.8 L453 66.5 L452 66.5 L452 66.4 L451 66.4 L451 66.6 L450 66.6 L450 65.8 L449 65.8 L449 66.4 L448 66.4 L448 65.9 L447 65.9 L447 66.1 L446 66.1 L446 66.1 L445 66.1 L445 66.6 L444 66.6 L444 66.1 L443 66.1 L443 66.6 L442 66.6 L442 66.0 L441 66.0 L441 65.8 L440 65.8 L440 66.1 L439 66.1 L439 65.7 L438 65.7 L438 68.8 L437 68.8 L437 65.8 L436 65.8 L436 65.7 L435 65.7 L435 65.6 L434 65.6 L434 66.0 L433 66.0 L433 66.4 L432 66.4 L432 65.7 L431 65.7 L431 65.7 L430 65.7 L430 66.4 L429 66.4 L429 66.5 L428 66.5 L428 66.2 L427 66.2 L427 69.4 L426 69.4 L426 66.1 L425 66.1 L425 66.2 L424 66.2 L424 66.2 L423 66.2 L423 68.5 L422 68.5 L422 66.1 L421 66.1 L421 65.6 L420 65.6 L420 65.3 L419 65.3 L419 65.3 L418 65.3 L418 65.5 L417 65.5 L417 65.2 L416 65.2 L416 65.3 L415 65.3 L415 65.6 L414 65.6 L414 65.7 L413 65.7 L413 64.9 L412 64.9 L412 65.0 L411 65.0 L411 65.1 L410 65.1 L410 65.1 L409 65.1 L409 65.4 L408 65.4 L408 68.2 L407 68.2 L407 67.1 L406 67.1 L406 65.7 L405 65.7 L405 66.1 L404 66.1 L404 65.6 L403 65.6 L403 65.4 L402 65.4 L402 65.3 L401 65.3 L401 66.7 L400 66.7 L400 65.4 L399 65.4 L399 65.8 L398 65.8 L398 64.3 L397 64.3 L397 63.0 L396 63.0 L396 63.0 L395 63.0 L395 63.0 L394 63.0 L394 63.0 L393 63.0 L393 63.0 L392 63.0 L392 63.0 L391 63.0 L391 63.0 L390 63.0 L390 63.0 L389 63.0 L389 63.0 L388 63.0 L388 63.0 L387 63.0 L387 63.0 L386 63.0 L386 63.0 L385 63.0 L385 63.0 L384 63.0 L384 63.0 L383 63.0 L383 63.0 L382 63.0 L382 63.0 L381 63.0 L381 63.0 L380 63.0 L380 63.0 L379 63.0 L379 63.0 L378 63.0 L378 63.0 L377 63.0 L377 63.0 L376 63.0 L376 63.0 L375 63.0 L375 63.0 L374 63.0 L374 63.0 L373 63.0 L373 63.0 L372 63.0 L372 63.0 L371 63.0 L371 63.0 L370 63.0 L370 63.0 L369 63.0 L369 63.0 L368 63.0 L368 63.0 L367 63.0 L367 63.0 L366 63.0 L366 63.0 L365 63.0 L365 63.0 L364 63.0 L364 63.0 L363 63.0 L363 63.0 L362 63.0 L362 63.0 L361 63.0 L361 63.0 L360 63.0 L360 63.0 L359 63.0 L359 63.0 L358 63.0 L358 63.0 L357 63.0 L357 63.0 L356 63.0 L356 63.0 L355 63.0 L355 63.0 L354 63.0 L354 63.0 L353 63.0 L353 63.0 L352 63.0 L352 63.0 L351 63.0 L351 63.0 L350 63.0 L350 63.0 L349 63.0 L349 63.0 L348 63.0 L348 63.0 L347 63.0 L347 63.0 L346 63.0 L346 63.0 L345 63.0 L345 63.0 L344 63.0 L344 63.0 L343 63.0 L343 63.0 L342 63.0 L342 63.0 L341 63.0 L341 63.0 L340 63.0 L340 63.0 L339 63.0 L339 63.0 L338 63.0 L338 63.0 L337 63.0 L337 63.0 L336 63.0 L336 63.0 L335 63.0 L335 63.0 L334 63.0 Z" fill="#3d679e"/><path d="M1500.5 49.5 V75.5 M491.5 48 V77 M1015.5 53 V72 M1109.5 50 V75" stroke="#3d679e" stroke-width="1.2"/><path d="M425.9 39 V86" stroke="#2b2b2b" stroke-width="1"/><path d="M517.8 39 V86" stroke="#2b2b2b" stroke-width="1"/><path d="M609.7 39 V86" stroke="#2b2b2b" stroke-width="1"/><path d="M701.6 39 V86" stroke="#2b2b2b" stroke-width="1"/><path d="M793.5 39 V86" stroke="#2b2b2b" stroke-width="1"/><path d="M885.4 39 V86" stroke="#2b2b2b" stroke-width="1"/><path d="M977.3 39 V86" stroke="#2b2b2b" stroke-width="1"/><path d="M1069.2 39 V86" stroke="#2b2b2b" stroke-width="1"/><path d="M1161.1 39 V86" stroke="#2b2b2b" stroke-width="1"/><path d="M1253.0 39 V86" stroke="#2b2b2b" stroke-width="1"/><path d="M1344.9 39 V86" stroke="#2b2b2b" stroke-width="1"/><path d="M1436.8 39 V86" stroke="#2b2b2b" stroke-width="1"/><path d="M1528.7 39 V86" stroke="#2b2b2b" stroke-width="1"/><rect x="579" y="37.5" width="81" height="49.5" fill="#f9a000" fill-opacity="0.42"/><path d="M619.5 39 V86" stroke="#3a3020" stroke-width="1"/><path d="M333 38 V87" stroke="#c81414" stroke-width="2"/><path d="M1587.5 38 V87" stroke="#1a8a1a" stroke-width="1.2"/><path d="M436.8 36 V88" stroke="#f5a31a" stroke-width="2"/></svg>
<div class="t" style="left:334.00px;top:88.76px;font-size:9.5px;color:#c9c9c9;">0:00.0</div>
<div class="t" style="left:125.90px;width:600px;text-align:center;top:88.76px;font-size:9.5px;color:#c9c9c9;">0:02.0</div>
<div class="t" style="left:217.80px;width:600px;text-align:center;top:88.76px;font-size:9.5px;color:#c9c9c9;">0:04.0</div>
<div class="t" style="left:309.70px;width:600px;text-align:center;top:88.76px;font-size:9.5px;color:#c9c9c9;">0:06.0</div>
<div class="t" style="left:401.60px;width:600px;text-align:center;top:88.76px;font-size:9.5px;color:#c9c9c9;">0:08.0</div>
<div class="t" style="left:493.50px;width:600px;text-align:center;top:88.76px;font-size:9.5px;color:#c9c9c9;">0:10.0</div>
<div class="t" style="left:585.40px;width:600px;text-align:center;top:88.76px;font-size:9.5px;color:#c9c9c9;">0:12.0</div>
<div class="t" style="left:677.30px;width:600px;text-align:center;top:88.76px;font-size:9.5px;color:#c9c9c9;">0:14.0</div>
<div class="t" style="left:769.20px;width:600px;text-align:center;top:88.76px;font-size:9.5px;color:#c9c9c9;">0:16.0</div>
<div class="t" style="left:861.10px;width:600px;text-align:center;top:88.76px;font-size:9.5px;color:#c9c9c9;">0:18.0</div>
<div class="t" style="left:953.00px;width:600px;text-align:center;top:88.76px;font-size:9.5px;color:#c9c9c9;">0:20.0</div>
<div class="t" style="left:1044.90px;width:600px;text-align:center;top:88.76px;font-size:9.5px;color:#c9c9c9;">0:22.0</div>
<div class="t" style="left:1136.80px;width:600px;text-align:center;top:88.76px;font-size:9.5px;color:#c9c9c9;">0:24.0</div>
<div class="t" style="left:1228.70px;width:600px;text-align:center;top:88.76px;font-size:9.5px;color:#c9c9c9;">0:26.0</div>
<svg class="a" style="left:330px;top:27px;" width="33" height="12" viewBox="0 0 33 12"><path d="M0 0 H29 C31.5 0 33 1.5 33 4 V11 H0 Z" fill="#e31313"/></svg>
<div class="t" style="left:332.20px;top:29.89px;font-size:8.4px;color:#fff;font-weight:bold;">START</div>
<div class="a" style="left:417px;top:25px;width:37px;height:13.5px;background:#f5a31a;border-radius:3px"></div>
<div class="t" style="left:135.50px;width:600px;text-align:center;top:27.74px;font-size:10px;color:#fff;font-weight:bold;">2.274</div>
<svg class="a" style="left:1561px;top:28px;" width="28" height="11" viewBox="0 0 28 11"><path d="M4 0 H28 V11 H0 V4 C0 1.5 1.5 0 4 0 Z" fill="#168c16"/></svg>
<div class="t" style="left:1567.50px;top:30.16px;font-size:8.2px;color:#e6ffb5;font-weight:bold;">STOP</div>
<div class="a" style="left:352.5px;top:142.5px;width:1193.5px;height:200.5px;border:1px solid #1f5b9b"></div>
<div class="a" style="left:353.5px;top:143.5px;width:1191.5px;height:198.5px;border:3.2px solid #9fcdf5"></div>
<svg class="a" style="left:0px;top:0px;" width="1560" height="870" viewBox="0 0 1560 870"><path d="M490.5 167.5 V319.5" stroke="#a9a9a9" stroke-width="1"/><path d="M650.5 167.5 V319.5" stroke="#a9a9a9" stroke-width="1"/><path d="M810.5 167.5 V319.5" stroke="#a9a9a9" stroke-width="1"/><path d="M971.5 167.5 V319.5" stroke="#a9a9a9" stroke-width="1"/><path d="M1131.5 167.5 V319.5" stroke="#a9a9a9" stroke-width="1"/><path d="M1291.5 167.5 V319.5" stroke="#a9a9a9" stroke-width="1"/><path d="M1452.5 167.5 V319.5" stroke="#a9a9a9" stroke-width="1"/><path d="M412.5 178.5 H1540.5" stroke="#adadad" stroke-width="1" stroke-dasharray="4 5"/><path d="M412.5 200.5 H1540.5" stroke="#adadad" stroke-width="1" stroke-dasharray="4 5"/><path d="M412.5 222.5 H1540.5" stroke="#adadad" stroke-width="1" stroke-dasharray="4 5"/><path d="M412.5 244.5 H1540.5" stroke="#adadad" stroke-width="1" stroke-dasharray="4 5"/><path d="M412.5 266.5 H1540.5" stroke="#adadad" stroke-width="1" stroke-dasharray="4 5"/><path d="M412.5 288.5 H1540.5" stroke="#adadad" stroke-width="1" stroke-dasharray="4 5"/><path d="M412.5 311.5 H1540.5" stroke="#adadad" stroke-width="1" stroke-dasharray="4 5"/><path d="M409 167.2 410 167.2 410 167.2 411 167.2 411 182.6 412 182.6 412 200.2 413 200.2 413 200.9 414 200.9 414 197.6 415 197.6 415 167.2 416 167.2 416 167.2 417 167.2 417 189.8 418 189.8 418 212.7 419 212.7 419 213.6 420 213.6 420 167.2 421 167.2 421 179.5 422 179.5 422 181.9 423 181.9 423 180.7 424 180.7 424 167.2 425 167.2 425 167.4 426 167.4 426 197.6 427 197.6 427 199.1 428 199.1 428 194.6 429 194.6 429 167.2 430 167.2 430 167.2 431 167.2 431 167.2 432 167.2 432 175.3 433 175.3 433 178.7 434 178.7 434 178.7 435 178.7 435 175.2 436 175.2 436 167.2 437 167.2 437 167.2 438 167.2 438 185.9 439 185.9 439 190.9 440 190.9 440 190.9 441 190.9 441 186.3 442 186.3 442 167.2 443 167.2 443 167.2 444 167.2 444 167.2 445 167.2 445 181.7 446 181.7 446 187.5 447 187.5 447 187.5 448 187.5 448 183.4 449 183.4 449 197.9 450 197.9 450 217.3 451 217.3 451 213.3 452 213.3 452 167.2 453 167.2 453 167.2 454 167.2 454 188.6 455 188.6 455 193.2 456 193.2 456 174.0 457 174.0 457 167.2 458 167.2 458 167.2 459 167.2 459 167.2 460 167.2 460 167.2 461 167.2 461 167.2 462 167.2 462 181.8 463 181.8 463 186.5 464 186.5 464 177.6 465 177.6 465 204.5 466 204.5 466 206.4 467 206.4 467 204.8 468 204.8 468 179.8 469 179.8 469 167.2 470 167.2 470 167.2 471 167.2 471 167.2 472 167.2 472 167.2 473 167.2 473 183.0 474 183.0 474 198.6 475 198.6 475 186.1 476 186.1 476 193.0 477 193.0 477 201.5 478 201.5 478 196.3 479 196.3 479 167.2 480 167.2 480 167.2 481 167.2 481 167.2 482 167.2 482 167.2 483 167.2 483 167.2 484 167.2 484 190.1 485 190.1 485 192.4 486 192.4 486 192.0 487 192.0 487 167.2 488 167.2 488 167.2 489 167.2 489 188.5 490 188.5 490 203.4 491 203.4 491 196.8 492 196.8 492 167.2 493 167.2 493 167.2 494 167.2 494 191.9 495 191.9 495 199.9 496 199.9 496 200.0 497 200.0 497 194.5 498 194.5 498 167.2 499 167.2 499 167.2 500 167.2 500 193.7 501 193.7 501 200.3 502 200.3 502 200.0 503 200.0 503 186.5 504 186.5 504 167.2 505 167.2 505 167.2 506 167.2 506 183.9 507 183.9 507 210.4 508 210.4 508 199.7 509 199.7 509 167.2 510 167.2 510 188.6 511 188.6 511 188.7 512 188.7 512 167.2 513 167.2 513 167.2 514 167.2 514 167.2 515 167.2 515 168.3 516 168.3 516 193.3 517 193.3 517 190.3 518 190.3 518 167.2 519 167.2 519 167.2 520 167.2 520 167.2 521 167.2 521 167.2 522 167.2 522 167.2 523 167.2 523 186.1 524 186.1 524 193.3 525 193.3 525 193.0 526 193.0 526 177.8 527 177.8 527 167.2 528 167.2 528 186.1 529 186.1 529 212.2 530 212.2 530 211.7 531 211.7 531 167.2 532 167.2 532 175.1 533 175.1 533 195.9 534 195.9 534 192.9 535 192.9 535 167.2 536 167.2 536 167.2 537 167.2 537 167.2 538 167.2 538 167.2 539 167.2 539 167.2 540 167.2 540 208.7 541 208.7 541 217.5 542 217.5 542 167.2 543 167.2 543 167.2 544 167.2 544 167.2 545 167.2 545 167.2 546 167.2 546 198.3 547 198.3 547 198.1 548 198.1 548 167.2 549 167.2 549 203.6 550 203.6 550 208.6 551 208.6 551 184.7 552 184.7 552 167.2 553 167.2 553 167.2 554 167.2 554 167.2 555 167.2 555 199.5 556 199.5 556 193.6 557 193.6 557 167.2 558 167.2 558 167.2 559 167.2 559 167.2 560 167.2 560 167.2 561 167.2 561 181.4 562 181.4 562 193.6 563 193.6 563 194.3 564 194.3 564 167.2 565 167.2 565 167.2 566 167.2 566 167.2 567 167.2 567 181.1 568 181.1 568 192.1 569 192.1 569 189.2 570 189.2 570 167.2 571 167.2 571 167.2 572 167.2 572 206.1 573 206.1 573 211.0 574 211.0 574 167.2 575 167.2 575 167.2 576 167.2 576 167.2 577 167.2 577 167.2 578 167.2 578 170.9 579 170.9 579 181.8 580 181.8 580 182.3 581 182.3 581 180.5 582 180.5 582 168.7 583 168.7 583 202.0 584 202.0 584 194.8 585 194.8 585 167.2 586 167.2 586 167.2 587 167.2 587 179.9 588 179.9 588 191.2 589 191.2 589 192.0 590 192.0 590 191.3 591 191.3 591 180.5 592 180.5 592 170.1 593 170.1 593 174.5 594 174.5 594 174.7 595 174.7 595 173.9 596 173.9 596 167.2 597 167.2 597 167.2 598 167.2 598 174.1 599 174.1 599 175.0 600 175.0 600 174.8 601 174.8 601 169.6 602 169.6 602 167.2 603 167.2 603 167.2 604 167.2 604 175.0 605 175.0 605 176.6 606 176.6 606 176.3 607 176.3 607 169.1 608 169.1 608 167.2 609 167.2 609 167.2 610 167.2 610 167.2 611 167.2 611 177.6 612 177.6 612 180.3 613 180.3 613 177.8 614 177.8 614 167.2 615 167.2 615 182.3 616 182.3 616 184.8 617 184.8 617 181.6 618 181.6 618 167.2 619 167.2 619 167.2 620 167.2 620 167.2 621 167.2 621 167.2 622 167.2 622 195.6 623 195.6 623 200.3 624 200.3 624 167.2 625 167.2 625 167.2 626 167.2 626 167.2 627 167.2 627 202.8 628 202.8 628 206.1 629 206.1 629 203.7 630 203.7 630 167.2 631 167.2 631 167.2 632 167.2 632 180.9 633 180.9 633 197.4 634 197.4 634 198.0 635 198.0 635 193.2 636 193.2 636 167.2 637 167.2 637 167.2 638 167.2 638 167.2 639 167.2 639 191.5 640 191.5 640 208.2 641 208.2 641 181.4 642 181.4 642 167.2 643 167.2 643 167.2 644 167.2 644 194.0 645 194.0 645 197.6 646 197.6 646 197.5 647 197.5 647 192.0 648 192.0 648 187.7 649 187.7 649 188.0 650 188.0 650 187.0 651 187.0 651 175.6 652 175.6 652 167.2 653 167.2 653 167.2 654 167.2 654 173.8 655 173.8 655 181.6 656 181.6 656 181.3 657 181.3 657 167.2 658 167.2 658 167.2 659 167.2 659 167.2 660 167.2 660 167.2 661 167.2 661 167.2 662 167.2 662 167.2 663 167.2 663 173.5 664 173.5 664 167.2 665 167.2 665 195.9 666 195.9 666 201.2 667 201.2 667 201.1 668 201.1 668 195.6 669 195.6 669 167.2 670 167.2 670 181.4 671 181.4 671 189.9 672 189.9 672 190.2 673 190.2 673 188.0 674 188.0 674 167.3 675 167.3 675 167.2 676 167.2 676 167.2 677 167.2 677 179.9 678 179.9 678 181.3 679 181.3 679 174.6 680 174.6 680 167.2 681 167.2 681 167.2 682 167.2 682 174.7 683 174.7 683 177.3 684 177.3 684 176.6 685 176.6 685 167.2 686 167.2 686 167.2 687 167.2 687 167.2 688 167.2 688 176.9 689 176.9 689 177.1 690 177.1 690 167.2 691 167.2 691 167.2 692 167.2 692 167.4 693 167.4 693 201.3 694 201.3 694 200.6 695 200.6 695 167.2 696 167.2 696 167.2 697 167.2 697 167.2 698 167.2 698 167.2 699 167.2 699 167.2 700 167.2 700 177.7 701 177.7 701 197.0 702 197.0 702 190.1 703 190.1 703 167.2 704 167.2 704 167.2 705 167.2 705 182.0 706 182.0 706 193.0 707 193.0 707 193.7 708 193.7 708 192.8 709 192.8 709 167.9 710 167.9 710 211.6 711 211.6 711 212.2 712 212.2 712 183.8 713 183.8 713 167.2 714 167.2 714 167.2 715 167.2 715 167.2 716 167.2 716 168.1 717 168.1 717 188.2 718 188.2 718 186.4 719 186.4 719 167.2 720 167.2 720 172.0 721 172.0 721 185.5 722 185.5 722 186.4 723 186.4 723 185.7 724 185.7 724 174.3 725 174.3 725 167.2 726 167.2 726 167.2 727 167.2 727 196.8 728 196.8 728 205.5 729 205.5 729 205.7 730 205.7 730 200.2 731 200.2 731 167.2 732 167.2 732 167.2 733 167.2 733 173.8 734 173.8 734 205.3 735 205.3 735 206.3 736 206.3 736 196.6 737 196.6 737 167.2 738 167.2 738 168.0 739 168.0 739 192.8 740 192.8 740 194.1 741 194.1 741 190.7 742 190.7 742 167.2 743 167.2 743 167.2 744 167.2 744 209.0 745 209.0 745 213.9 746 213.9 746 213.0 747 213.0 747 189.1 748 189.1 748 167.2 749 167.2 749 167.2 750 167.2 750 170.7 751 170.7 751 188.3 752 188.3 752 188.8 753 188.8 753 167.2 754 167.2 754 180.8 755 180.8 755 189.7 756 189.7 756 187.2 757 187.2 757 167.2 758 167.2 758 167.2 759 167.2 759 201.4 760 201.4 760 206.0 761 206.0 761 205.8 762 205.8 762 197.0 763 197.0 763 167.2 764 167.2 764 167.2 765 167.2 765 167.2 766 167.2 766 180.3 767 180.3 767 186.1 768 186.1 768 185.9 769 185.9 769 174.7 770 174.7 770 167.2 771 167.2 771 167.2 772 167.2 772 183.8 773 183.8 773 188.9 774 188.9 774 177.0 775 177.0 775 167.2 776 167.2 776 167.2 777 167.2 777 167.2 778 167.2 778 184.7 779 184.7 779 184.9 780 184.9 780 167.2 781 167.2 781 167.2 782 167.2 782 167.2 783 167.2 783 181.7 784 181.7 784 185.7 785 185.7 785 185.7 786 185.7 786 167.2 787 167.2 787 167.3 788 167.3 788 196.2 789 196.2 789 197.4 790 197.4 790 191.9 791 191.9 791 167.2 792 167.2 792 167.2 793 167.2 793 181.0 794 181.0 794 186.0 795 186.0 795 185.8 796 185.8 796 175.5 797 175.5 797 167.2 798 167.2 798 167.2 799 167.2 799 200.5 800 200.5 800 203.7 801 203.7 801 185.5 802 185.5 802 167.2 803 167.2 803 197.3 804 197.3 804 214.5 805 214.5 805 213.9 806 213.9 806 182.2 807 182.2 807 167.2 808 167.2 808 167.2 809 167.2 809 167.2 810 167.2 810 186.7 811 186.7 811 189.9 812 189.9 812 187.5 813 187.5 813 167.2 814 167.2 814 167.2 815 167.2 815 171.5 816 171.5 816 200.5 817 200.5 817 180.0 818 180.0 818 167.2 819 167.2 819 167.2 820 167.2 820 167.2 821 167.2 821 167.2 822 167.2 822 188.6 823 188.6 823 195.2 824 195.2 824 195.3 825 195.3 825 191.7 826 191.7 826 167.2 827 167.2 827 167.2 828 167.2 828 167.2 829 167.2 829 212.9 830 212.9 830 215.3 831 215.3 831 202.6 832 202.6 832 213.2 833 213.2 833 213.4 834 213.4 834 207.7 835 207.7 835 167.2 836 167.2 836 167.2 837 167.2 837 167.2 838 167.2 838 167.2 839 167.2 839 174.6 840 174.6 840 178.3 841 178.3 841 178.4 842 178.4 842 167.2 843 167.2 843 167.2 844 167.2 844 167.2 845 167.2 845 179.9 846 179.9 846 177.2 847 177.2 847 167.2 848 167.2 848 167.2 849 167.2 849 182.5 850 182.5 850 191.3 851 191.3 851 189.6 852 189.6 852 167.2 853 167.2 853 167.2 854 167.2 854 172.0 855 172.0 855 176.5 856 176.5 856 176.2 857 176.2 857 167.2 858 167.2 858 167.2 859 167.2 859 167.2 860 167.2 860 171.6 861 171.6 861 175.9 862 175.9 862 175.1 863 175.1 863 167.2 864 167.2 864 167.2 865 167.2 865 167.2 866 167.2 866 196.1 867 196.1 867 210.6 868 210.6 868 204.2 869 204.2 869 167.2 870 167.2 870 167.2 871 167.2 871 189.3 872 189.3 872 206.8 873 206.8 873 186.9 874 186.9 874 167.2 875 167.2 875 167.2 876 167.2 876 167.2 877 167.2 877 167.2 878 167.2 878 171.5 879 171.5 879 182.4 880 182.4 880 181.4 881 181.4 881 186.2 882 186.2 882 190.1 883 190.1 883 190.1 884 190.1 884 186.3 885 186.3 885 167.2 886 167.2 886 170.1 887 170.1 887 174.1 888 174.1 888 174.2 889 174.2 889 173.3 890 173.3 890 167.2 891 167.2 891 167.2 892 167.2 892 167.2 893 167.2 893 167.2 894 167.2 894 172.7 895 172.7 895 174.4 896 174.4 896 174.0 897 174.0 897 170.9 898 170.9 898 180.5 899 180.5 899 181.5 900 181.5 900 181.4 901 181.4 901 177.6 902 177.6 902 167.2 903 167.2 903 169.7 904 169.7 904 174.5 905 174.5 905 174.3 906 174.3 906 167.2 907 167.2 907 167.2 908 167.2 908 167.2 909 167.2 909 192.1 910 192.1 910 201.7 911 201.7 911 201.9 912 201.9 912 197.3 913 197.3 913 167.2 914 167.2 914 167.2 915 167.2 915 167.2 916 167.2 916 174.9 917 174.9 917 174.7 918 174.7 918 167.2 919 167.2 919 167.2 920 167.2 920 167.2 921 167.2 921 185.7 922 185.7 922 199.4 923 199.4 923 194.4 924 194.4 924 167.2 925 167.2 925 167.2 926 167.2 926 182.9 927 182.9 927 183.2 928 183.2 928 167.2 929 167.2 929 167.2 930 167.2 930 167.2 931 167.2 931 198.0 932 198.0 932 208.5 933 208.5 933 206.5 934 206.5 934 167.2 935 167.2 935 167.2 936 167.2 936 167.2 937 167.2 937 167.2 938 167.2 938 167.2 939 167.2 939 201.4 940 201.4 940 194.2 941 194.2 941 167.2 942 167.2 942 167.2 943 167.2 943 172.5 944 172.5 944 173.5 945 173.5 945 173.5 946 173.5 946 172.6 947 172.6 947 167.2 948 167.2 948 167.2 949 167.2 949 186.2 950 186.2 950 189.0 951 189.0 951 188.9 952 188.9 952 184.8 953 184.8 953 167.2 954 167.2 954 167.2 955 167.2 955 167.2 956 167.2 956 206.0 957 206.0 957 204.1 958 204.1 958 167.2 959 167.2 959 173.0 960 173.0 960 176.3 961 176.3 961 176.3 962 176.3 962 172.1 963 172.1 963 167.2 964 167.2 964 185.8 965 185.8 965 189.7 966 189.7 966 189.7 967 189.7 967 187.4 968 187.4 968 169.2 969 169.2 969 167.2 970 167.2 970 167.2 971 167.2 971 167.2 972 167.2 972 196.7 973 196.7 973 199.3 974 199.3 974 198.5 975 198.5 975 167.2 976 167.2 976 167.2 977 167.2 977 170.9 978 170.9 978 174.3 979 174.3 979 174.5 980 174.5 980 173.9 981 173.9 981 167.5 982 167.5 982 167.2 983 167.2 983 203.8 984 203.8 984 207.0 985 207.0 985 167.2 986 167.2 986 167.2 987 167.2 987 181.7 988 181.7 988 195.7 989 195.7 989 195.3 990 195.3 990 169.8 991 169.8 991 167.2 992 167.2 992 167.2 993 167.2 993 167.2 994 167.2 994 200.8 995 200.8 995 205.0 996 205.0 996 195.8 997 195.8 997 167.2 998 167.2 998 167.2 999 167.2 999 167.2 1000 167.2 1000 200.7 1001 200.7 1001 207.6 1002 207.6 1002 206.7 1003 206.7 1003 180.3 1004 180.3 1004 167.2 1005 167.2 1005 179.9 1006 179.9 1006 200.6 1007 200.6 1007 201.5 1008 201.5 1008 167.2 1009 167.2 1009 206.5 1010 206.5 1010 214.0 1011 214.0 1011 213.3 1012 213.3 1012 190.5 1013 190.5 1013 167.2 1014 167.2 1014 167.2 1015 167.2 1015 178.1 1016 178.1 1016 194.2 1017 194.2 1017 194.1 1018 194.1 1018 175.8 1019 175.8 1019 167.2 1020 167.2 1020 167.2 1021 167.2 1021 186.8 1022 186.8 1022 186.8 1023 186.8 1023 167.2 1024 167.2 1024 167.2 1025 167.2 1025 185.0 1026 185.0 1026 205.7 1027 205.7 1027 206.7 1028 206.7 1028 203.5 1029 203.5 1029 167.9 1030 167.9 1030 167.2 1031 167.2 1031 192.5 1032 192.5 1032 193.4 1033 193.4 1033 192.7 1034 192.7 1034 181.3 1035 181.3 1035 167.2 1036 167.2 1036 167.2 1037 167.2 1037 185.2 1038 185.2 1038 185.4 1039 185.4 1039 167.2 1040 167.2 1040 167.2 1041 167.2 1041 167.2 1042 167.2 1042 167.2 1043 167.2 1043 167.2 1044 167.2 1044 167.2 1045 167.2 1045 204.6 1046 204.6 1046 199.4 1047 199.4 1047 167.2 1048 167.2 1048 167.2 1049 167.2 1049 167.2 1050 167.2 1050 181.2 1051 181.2 1051 197.3 1052 197.3 1052 195.5 1053 195.5 1053 176.6 1054 176.6 1054 191.2 1055 191.2 1055 189.6 1056 189.6 1056 167.2 1057 167.2 1057 167.2 1058 167.2 1058 167.2 1059 167.2 1059 189.7 1060 189.7 1060 193.5 1061 193.5 1061 193.5 1062 193.5 1062 189.4 1063 189.4 1063 167.2 1064 167.2 1064 167.2 1065 167.2 1065 203.3 1066 203.3 1066 214.4 1067 214.4 1067 212.5 1068 212.5 1068 167.2 1069 167.2 1069 167.2 1070 167.2 1070 167.2 1071 167.2 1071 195.0 1072 195.0 1072 201.7 1073 201.7 1073 201.7 1074 201.7 1074 195.4 1075 195.4 1075 167.2 1076 167.2 1076 216.2 1077 216.2 1077 214.0 1078 214.0 1078 167.2 1079 167.2 1079 167.2 1080 167.2 1080 167.2 1081 167.2 1081 167.2 1082 167.2 1082 167.2 1083 167.2 1083 200.1 1084 200.1 1084 206.4 1085 206.4 1085 192.6 1086 192.6 1086 167.2 1087 167.2 1087 167.2 1088 167.2 1088 167.2 1089 167.2 1089 190.7 1090 190.7 1090 195.6 1091 195.6 1091 195.5 1092 195.5 1092 187.4 1093 187.4 1093 167.2 1094 167.2 1094 167.2 1095 167.2 1095 216.7 1096 216.7 1096 218.2 1097 218.2 1097 167.2 1098 167.2 1098 167.2 1099 167.2 1099 193.8 1100 193.8 1100 206.3 1101 206.3 1101 196.3 1102 196.3 1102 167.2 1103 167.2 1103 167.2 1104 167.2 1104 167.2 1105 167.2 1105 167.2 1106 167.2 1106 200.5 1107 200.5 1107 203.2 1108 203.2 1108 167.2 1109 167.2 1109 184.0 1110 184.0 1110 186.6 1111 186.6 1111 186.6 1112 186.6 1112 184.1 1113 184.1 1113 167.2 1114 167.2 1114 167.2 1115 167.2 1115 188.6 1116 188.6 1116 186.7 1117 186.7 1117 167.2 1118 167.2 1118 167.2 1119 167.2 1119 167.2 1120 167.2 1120 167.2 1121 167.2 1121 167.2 1122 167.2 1122 193.4 1123 193.4 1123 206.6 1124 206.6 1124 206.8 1125 206.8 1125 199.0 1126 199.0 1126 167.2 1127 167.2 1127 194.2 1128 194.2 1128 200.0 1129 200.0 1129 195.2 1130 195.2 1130 167.2 1131 167.2 1131 190.8 1132 190.8 1132 208.0 1133 208.0 1133 203.4 1134 203.4 1134 167.2 1135 167.2 1135 167.2 1136 167.2 1136 167.2 1137 167.2 1137 176.2 1138 176.2 1138 176.9 1139 176.9 1139 176.0 1140 176.0 1140 167.2 1141 167.2 1141 167.2 1142 167.2 1142 198.1 1143 198.1 1143 200.2 1144 200.2 1144 198.5 1145 198.5 1145 171.2 1146 171.2 1146 167.2 1147 167.2 1147 167.2 1148 167.2 1148 167.2 1149 167.2 1149 179.6 1150 179.6 1150 182.6 1151 182.6 1151 181.6 1152 181.6 1152 167.2 1153 167.2 1153 177.7 1154 177.7 1154 178.0 1155 178.0 1155 177.6 1156 177.6 1156 172.0 1157 172.0 1157 167.2 1158 167.2 1158 167.2 1159 167.2 1159 193.3 1160 193.3 1160 193.4 1161 193.4 1161 167.2 1162 167.2 1162 167.2 1163 167.2 1163 167.2 1164 167.2 1164 167.2 1165 167.2 1165 167.2 1166 167.2 1166 200.2 1167 200.2 1167 201.5 1168 201.5 1168 192.0 1169 192.0 1169 167.2 1170 167.2 1170 167.2 1171 167.2 1171 197.4 1172 197.4 1172 203.4 1173 203.4 1173 203.4 1174 203.4 1174 199.0 1175 199.0 1175 170.5 1176 170.5 1176 174.1 1177 174.1 1177 174.2 1178 174.2 1178 173.6 1179 173.6 1179 167.2 1180 167.2 1180 167.2 1181 167.2 1181 167.2 1182 167.2 1182 167.2 1183 167.2 1183 188.8 1184 188.8 1184 191.4 1185 191.4 1185 189.2 1186 189.2 1186 167.2 1187 167.2 1187 167.2 1188 167.2 1188 188.7 1189 188.7 1189 198.5 1190 198.5 1190 198.9 1191 198.9 1191 197.3 1192 197.3 1192 179.3 1193 179.3 1193 167.2 1194 167.2 1194 204.1 1195 204.1 1195 189.8 1196 189.8 1196 167.2 1197 167.2 1197 167.2 1198 167.2 1198 167.2 1199 167.2 1199 202.4 1200 202.4 1200 208.9 1201 208.9 1201 197.4 1202 197.4 1202 167.2 1203 167.2 1203 167.2 1204 167.2 1204 167.2 1205 167.2 1205 167.2 1206 167.2 1206 171.1 1207 171.1 1207 172.4 1208 172.4 1208 167.2 1209 167.2 1209 192.8 1210 192.8 1210 208.1 1211 208.1 1211 205.0 1212 205.0 1212 167.2 1213 167.2 1213 167.2 1214 167.2 1214 167.2 1215 167.2 1215 176.8 1216 176.8 1216 182.2 1217 182.2 1217 182.2 1218 182.2 1218 177.0 1219 177.0 1219 167.2 1220 167.2 1220 167.2 1221 167.2 1221 176.8 1222 176.8 1222 180.9 1223 180.9 1223 181.1 1224 181.1 1224 180.5 1225 180.5 1225 198.6 1226 198.6 1226 200.1 1227 200.1 1227 199.0 1228 199.0 1228 179.9 1229 179.9 1229 167.2 1230 167.2 1230 167.2 1231 167.2 1231 167.2 1232 167.2 1232 187.9 1233 187.9 1233 186.1 1234 186.1 1234 167.2 1235 167.2 1235 167.2 1236 167.2 1236 167.2 1237 167.2 1237 173.5 1238 173.5 1238 209.3 1239 209.3 1239 211.0 1240 211.0 1240 205.7 1241 205.7 1241 167.2 1242 167.2 1242 167.2 1243 167.2 1243 173.7 1244 173.7 1244 175.4 1245 175.4 1245 175.5 1246 175.5 1246 174.4 1247 174.4 1247 180.5 1248 180.5 1248 183.7 1249 183.7 1249 183.5 1250 183.5 1250 177.3 1251 177.3 1251 167.2 1252 167.2 1252 167.2 1253 167.2 1253 167.2 1254 167.2 1254 205.3 1255 205.3 1255 210.8 1256 210.8 1256 210.6 1257 210.6 1257 199.9 1258 199.9 1258 167.2 1259 167.2 1259 167.2 1260 167.2 1260 167.2 1261 167.2 1261 167.2 1262 167.2 1262 207.3 1263 207.3 1263 208.1 1264 208.1 1264 167.2 1265 167.2 1265 167.2 1266 167.2 1266 167.2 1267 167.2 1267 182.1 1268 182.1 1268 184.9 1269 184.9 1269 182.5 1270 182.5 1270 167.2 1271 167.2 1271 167.2 1272 167.2 1272 190.0 1273 190.0 1273 198.0 1274 198.0 1274 198.0 1275 198.0 1275 167.2 1276 167.2 1276 187.4 1277 187.4 1277 189.5 1278 189.5 1278 184.6 1279 184.6 1279 167.2 1280 167.2 1280 167.2 1281 167.2 1281 200.8 1282 200.8 1282 206.7 1283 206.7 1283 203.7 1284 203.7 1284 167.2 1285 167.2 1285 167.2 1286 167.2 1286 167.2 1287 167.2 1287 167.2 1288 167.2 1288 179.1 1289 179.1 1289 201.0 1290 201.0 1290 201.7 1291 201.7 1291 193.7 1292 193.7 1292 167.2 1293 167.2 1293 191.4 1294 191.4 1294 205.3 1295 205.3 1295 191.7 1296 191.7 1296 167.2 1297 167.2 1297 167.2 1298 167.2 1298 172.1 1299 172.1 1299 188.1 1300 188.1 1300 189.6 1301 189.6 1301 189.3 1302 189.3 1302 181.6 1303 181.6 1303 167.2 1304 167.2 1304 167.2 1305 167.2 1305 167.2 1306 167.2 1306 205.4 1307 205.4 1307 205.2 1308 205.2 1308 167.2 1309 167.2 1309 196.8 1310 196.8 1310 212.5 1311 212.5 1311 213.3 1312 213.3 1312 211.7 1313 211.7 1313 190.5 1314 190.5 1314 167.2 1315 167.2 1315 192.0 1316 192.0 1316 196.2 1317 196.2 1317 193.4 1318 193.4 1318 167.2 1319 167.2 1319 169.1 1320 169.1 1320 184.4 1321 184.4 1321 185.6 1322 185.6 1322 184.9 1323 184.9 1323 173.7 1324 173.7 1324 167.2 1325 167.2 1325 181.7 1326 181.7 1326 205.9 1327 205.9 1327 206.9 1328 206.9 1328 202.6 1329 202.6 1329 167.2 1330 167.2 1330 167.2 1331 167.2 1331 176.1 1332 176.1 1332 205.7 1333 205.7 1333 207.0 1334 207.0 1334 201.6 1335 201.6 1335 167.2 1336 167.2 1336 167.2 1337 167.2 1337 187.5 1338 187.5 1338 191.7 1339 191.7 1339 191.3 1340 191.3 1340 179.6 1341 179.6 1341 167.2 1342 167.2 1342 167.2 1343 167.2 1343 167.2 1344 167.2 1344 172.6 1345 172.6 1345 216.4 1346 216.4 1346 211.0 1347 211.0 1347 177.4 1348 177.4 1348 200.5 1349 200.5 1349 202.7 1350 202.7 1350 202.3 1351 202.3 1351 191.7 1352 191.7 1352 167.2 1353 167.2 1353 167.2 1354 167.2 1354 167.2 1355 167.2 1355 184.5 1356 184.5 1356 189.2 1357 189.2 1357 189.3 1358 189.3 1358 186.6 1359 186.6 1359 167.2 1360 167.2 1360 167.2 1361 167.2 1361 206.8 1362 206.8 1362 208.6 1363 208.6 1363 172.4 1364 172.4 1364 167.2 1365 167.2 1365 167.2 1366 167.2 1366 206.2 1367 206.2 1367 208.3 1368 208.3 1368 183.7 1369 183.7 1369 167.2 1370 167.2 1370 167.2 1371 167.2 1371 198.8 1372 198.8 1372 202.4 1373 202.4 1373 201.9 1374 201.9 1374 187.4 1375 187.4 1375 181.2 1376 181.2 1376 217.6 1377 217.6 1377 218.0 1378 218.0 1378 192.0 1379 192.0 1379 167.2 1380 167.2 1380 197.2 1381 197.2 1381 218.8 1382 218.8 1382 220.2 1383 220.2 1383 218.8 1384 218.8 1384 197.5 1385 197.5 1385 167.2 1386 167.2 1386 167.2 1387 167.2 1387 167.2 1388 167.2 1388 167.2 1389 167.2 1389 176.1 1390 176.1 1390 184.4 1391 184.4 1391 183.1 1392 183.1 1392 167.2 1393 167.2 1393 167.2 1394 167.2 1394 184.3 1395 184.3 1395 194.2 1396 194.2 1396 194.6 1397 194.6 1397 167.2 1398 167.2 1398 167.2 1399 167.2 1399 169.9 1400 169.9 1400 188.0 1401 188.0 1401 189.8 1402 189.8 1402 189.5 1403 189.5 1403 181.3 1404 181.3 1404 167.2 1405 167.2 1405 167.2 1406 167.2 1406 212.4 1407 212.4 1407 216.1 1408 216.1 1408 167.2 1409 167.2 1409 167.2 1410 167.2 1410 203.3 1411 203.3 1411 215.8 1412 215.8 1412 215.7 1413 215.7 1413 199.5 1414 199.5 1414 167.2 1415 167.2 1415 175.0 1416 175.0 1416 199.1 1417 199.1 1417 202.0 1418 202.0 1418 201.8 1419 201.8 1419 167.2 1420 167.2 1420 179.8 1421 179.8 1421 180.6 1422 180.6 1422 169.6 1423 169.6 1423 167.2 1424 167.2 1424 167.2 1425 167.2 1425 179.0 1426 179.0 1426 182.4 1427 182.4 1427 182.3 1428 182.3 1428 178.1 1429 178.1 1429 167.2 1430 167.2 1430 167.2 1431 167.2 1431 167.2 1432 167.2 1432 168.1 1433 168.1 1433 178.6 1434 178.6 1434 177.7 1435 177.7 1435 167.2 1436 167.2 1436 167.2 1437 167.2 1437 203.1 1438 203.1 1438 206.7 1439 206.7 1439 177.4 1440 177.4 1440 167.2 1441 167.2 1441 167.2 1442 167.2 1442 193.2 1443 193.2 1443 196.4 1444 196.4 1444 194.3 1445 194.3 1445 167.2 1446 167.2 1446 167.2 1447 167.2 1447 171.7 1448 171.7 1448 195.0 1449 195.0 1449 195.6 1450 195.6 1450 186.1 1451 186.1 1451 167.2 1452 167.2 1452 167.2 1453 167.2 1453 167.2 1454 167.2 1454 167.2 1455 167.2 1455 200.4 1456 200.4 1456 209.6 1457 209.6 1457 173.9 1458 173.9 1458 167.2 1459 167.2 1459 171.2 1460 171.2 1460 183.0 1461 183.0 1461 183.2 1462 183.2 1462 176.8 1463 176.8 1463 167.2 1464 167.2 1464 187.2 1465 187.2 1465 189.5 1466 189.5 1466 188.9 1467 188.9 1467 175.7 1468 175.7 1468 167.2 1469 167.2 1469 167.2 1470 167.2 1470 167.2 1471 167.2 1471 169.5 1472 169.5 1472 174.8 1473 174.8 1473 175.4 1474 175.4 1474 175.4 1475 175.4 1475 167.2 1476 167.2 1476 174.4 1477 174.4 1477 175.4 1478 175.4 1478 175.2 1479 175.2 1479 170.2 1480 170.2 1480 167.2 1481 167.2 1481 167.2 1482 167.2 1482 167.2 1483 167.2 1483 186.0 1484 186.0 1484 189.6 1485 189.6 1485 178.1 1486 178.1 1486 167.2 1487 167.2 1487 167.2 1488 167.2 1488 171.5 1489 171.5 1489 188.7 1490 188.7 1490 189.3 1491 189.3 1491 184.0 1492 184.0 1492 193.5 1493 193.5 1493 195.8 1494 195.8 1494 195.5 1495 195.5 1495 186.6 1496 186.6 1496 167.2 1497 167.2 1497 167.2 1498 167.2 1498 193.3 1499 193.3 1499 197.8 1500 197.8 1500 196.8 1501 196.8 1501 174.0 1502 174.0 1502 167.2 1503 167.2 1503 167.2 1504 167.2 1504 167.2 1505 167.2 1505 189.5 1506 189.5 1506 197.3 1507 197.3 1507 194.2 1508 194.2 1508 167.2 1509 167.2 1509 167.2 1510 167.2 1510 170.4 1511 170.4 1511 175.5 1512 175.5 1512 172.8 1513 172.8 1513 167.2 1514 167.2 1514 167.2 1515 167.2 1515 167.2 1516 167.2 1516 177.4 1517 177.4 1517 182.5 1518 182.5 1518 182.7 1519 182.7 1519 167.2 1520 167.2 1520 167.2 1521 167.2 1521 167.2 1522 167.2 1522 180.8 1523 180.8 1523 183.5 1524 183.5 1524 181.9 1525 181.9 1525 175.9 1526 175.9 1526 178.0 1527 178.0 1527 167.2 1528 167.2 1528 167.2 1529 167.2 1529 167.2 1530 167.2 1530 167.2 1531 167.2 1531 167.2 1532 167.2 1532 167.2 1533 167.2 1533 178.0 1534 178.0 1534 180.0 1535 180.0 1535 167.2 1536 167.2 1536 167.2 1537 167.2 1537 192.3 1538 192.3 1538 204.4 1539 204.4 1539 198.9 1540 198.9 1540 167.2 1541 167.2 1541 258.4 1540 258.4 1540 272.1 1539 272.1 1539 282.4 1538 282.4 1538 293.1 1537 293.1 1537 304.1 1536 304.1 1536 310.1 1535 310.1 1535 298.2 1534 298.2 1534 283.9 1533 283.9 1533 272.9 1532 272.9 1532 263.0 1531 263.0 1531 246.6 1530 246.6 1530 247.6 1529 247.6 1529 264.7 1528 264.7 1528 279.0 1527 279.0 1527 290.9 1526 290.9 1526 305.4 1525 305.4 1525 313.9 1524 313.9 1524 308.1 1523 308.1 1523 295.4 1522 295.4 1522 284.8 1521 284.8 1521 272.3 1520 272.3 1520 255.6 1519 255.6 1519 256.0 1518 256.0 1518 271.3 1517 271.3 1517 279.1 1516 279.1 1516 290.0 1515 290.0 1515 301.6 1514 301.6 1514 309.2 1513 309.2 1513 303.1 1512 303.1 1512 291.9 1511 291.9 1511 276.1 1510 276.1 1510 262.1 1509 262.1 1509 254.0 1508 254.0 1508 250.5 1507 250.5 1507 266.4 1506 266.4 1506 275.4 1505 275.4 1505 292.3 1504 292.3 1504 306.6 1503 306.6 1503 317.3 1502 317.3 1502 308.6 1501 308.6 1501 298.2 1500 298.2 1500 286.7 1499 286.7 1499 275.4 1498 275.4 1498 264.9 1497 264.9 1497 259.9 1496 259.9 1496 271.9 1495 271.9 1495 283.2 1494 283.2 1494 291.6 1493 291.6 1493 302.6 1492 302.6 1492 312.1 1491 312.1 1491 304.2 1490 304.2 1490 294.2 1489 294.2 1489 287.4 1488 287.4 1488 275.6 1487 275.6 1487 261.2 1486 261.2 1486 258.6 1485 258.6 1485 268.3 1484 268.3 1484 278.6 1483 278.6 1483 292.5 1482 292.5 1482 304.8 1481 304.8 1481 313.4 1480 313.4 1480 310.1 1479 310.1 1479 300.0 1478 300.0 1478 284.4 1477 284.4 1477 273.6 1476 273.6 1476 261.8 1475 261.8 1475 251.8 1474 251.8 1474 261.9 1473 261.9 1473 276.2 1472 276.2 1472 282.3 1471 282.3 1471 293.0 1470 293.0 1470 305.7 1469 305.7 1469 301.1 1468 301.1 1468 289.8 1467 289.8 1467 279.7 1466 279.7 1466 262.5 1465 262.5 1465 247.7 1464 247.7 1464 236.2 1463 236.2 1463 252.5 1462 252.5 1462 262.3 1461 262.3 1461 277.4 1460 277.4 1460 289.3 1459 289.3 1459 306.1 1458 306.1 1458 307.9 1457 307.9 1457 294.2 1456 294.2 1456 279.5 1455 279.5 1455 268.3 1454 268.3 1454 256.2 1453 256.2 1453 241.1 1452 241.1 1452 256.6 1451 256.6 1451 268.5 1450 268.5 1450 281.6 1449 281.6 1449 297.1 1448 297.1 1448 307.9 1447 307.9 1447 314.7 1446 314.7 1446 299.8 1445 299.8 1445 288.3 1444 288.3 1444 269.0 1443 269.0 1443 254.8 1442 254.8 1442 242.2 1441 242.2 1441 250.7 1440 250.7 1440 265.4 1439 265.4 1439 277.3 1438 277.3 1438 291.7 1437 291.7 1437 304.8 1436 304.8 1436 311.3 1435 311.3 1435 295.0 1434 295.0 1434 281.5 1433 281.5 1433 267.2 1432 267.2 1432 250.8 1431 250.8 1431 235.4 1430 235.4 1430 241.8 1429 241.8 1429 257.2 1428 257.2 1428 271.8 1427 271.8 1427 287.6 1426 287.6 1426 303.5 1425 303.5 1425 316.3 1424 316.3 1424 302.0 1423 302.0 1423 289.5 1422 289.5 1422 273.2 1421 273.2 1421 259.1 1420 259.1 1420 244.2 1419 244.2 1419 245.2 1418 245.2 1418 259.2 1417 259.2 1417 275.7 1416 275.7 1416 287.2 1415 287.2 1415 303.4 1414 303.4 1414 314.0 1413 314.0 1413 301.7 1412 301.7 1412 289.0 1411 289.0 1411 272.1 1410 272.1 1410 257.3 1409 257.3 1409 241.3 1408 241.3 1408 245.2 1407 245.2 1407 259.7 1406 259.7 1406 273.9 1405 273.9 1405 291.8 1404 291.8 1404 307.7 1403 307.7 1403 319.3 1402 319.3 1402 305.0 1401 305.0 1401 291.4 1400 291.4 1400 277.3 1399 277.3 1399 263.1 1398 263.1 1398 250.6 1397 250.6 1397 244.7 1396 244.7 1396 260.4 1395 260.4 1395 276.0 1394 276.0 1394 285.4 1393 285.4 1393 298.6 1392 298.6 1392 309.2 1391 309.2 1391 300.5 1390 300.5 1390 287.2 1389 287.2 1389 269.6 1388 269.6 1388 252.1 1387 252.1 1387 234.7 1386 234.7 1386 229.0 1385 229.0 1385 249.7 1384 249.7 1384 265.7 1383 265.7 1383 285.1 1382 285.1 1382 299.2 1381 299.2 1381 315.8 1380 315.8 1380 310.0 1379 310.0 1379 296.0 1378 296.0 1378 281.6 1377 281.6 1377 265.5 1376 265.5 1376 249.5 1375 249.5 1375 242.0 1374 242.0 1374 257.4 1373 257.4 1373 268.4 1372 268.4 1372 286.9 1371 286.9 1371 296.3 1370 296.3 1370 311.4 1369 311.4 1369 307.9 1368 307.9 1368 298.2 1367 298.2 1367 285.9 1366 285.9 1366 271.0 1365 271.0 1365 259.6 1364 259.6 1364 248.3 1363 248.3 1363 262.3 1362 262.3 1362 274.4 1361 274.4 1361 285.8 1360 285.8 1360 297.8 1359 297.8 1359 312.8 1358 312.8 1358 309.7 1357 309.7 1357 295.2 1356 295.2 1356 280.7 1355 280.7 1355 267.8 1354 267.8 1354 251.7 1353 251.7 1353 241.6 1352 241.6 1352 253.6 1351 253.6 1351 271.0 1350 271.0 1350 283.0 1349 283.0 1349 298.1 1348 298.1 1348 310.3 1347 310.3 1347 312.3 1346 312.3 1346 296.3 1345 296.3 1345 276.0 1344 276.0 1344 260.6 1343 260.6 1343 242.6 1342 242.6 1342 221.4 1341 221.4 1341 233.2 1340 233.2 1340 253.9 1339 253.9 1339 271.4 1338 271.4 1338 287.0 1337 287.0 1337 300.0 1336 300.0 1336 305.6 1335 305.6 1335 288.3 1334 288.3 1334 276.6 1333 276.6 1333 260.1 1332 260.1 1332 239.0 1331 239.0 1331 225.7 1330 225.7 1330 232.8 1329 232.8 1329 252.9 1328 252.9 1328 273.6 1327 273.6 1327 286.1 1326 286.1 1326 304.9 1325 304.9 1325 311.6 1324 311.6 1324 299.9 1323 299.9 1323 289.7 1322 289.7 1322 276.8 1321 276.8 1321 260.6 1320 260.6 1320 248.7 1319 248.7 1319 254.1 1318 254.1 1318 267.2 1317 267.2 1317 278.7 1316 278.7 1316 293.2 1315 293.2 1315 305.6 1314 305.6 1314 314.7 1313 314.7 1313 301.1 1312 301.1 1312 284.9 1311 284.9 1311 270.3 1310 270.3 1310 252.8 1309 252.8 1309 239.3 1308 239.3 1308 241.7 1307 241.7 1307 256.0 1306 256.0 1306 271.9 1305 271.9 1305 286.9 1304 286.9 1304 305.3 1303 305.3 1303 315.7 1302 315.7 1302 300.2 1301 300.2 1301 288.4 1300 288.4 1300 272.6 1299 272.6 1299 253.6 1298 253.6 1298 236.7 1297 236.7 1297 235.8 1296 235.8 1296 249.3 1295 249.3 1295 266.4 1294 266.4 1294 281.0 1293 281.0 1293 297.5 1292 297.5 1292 309.9 1291 309.9 1291 301.4 1290 301.4 1290 289.7 1289 289.7 1289 280.1 1288 280.1 1288 270.2 1287 270.2 1287 258.4 1286 258.4 1286 257.2 1285 257.2 1285 270.5 1284 270.5 1284 285.3 1283 285.3 1283 293.0 1282 293.0 1282 308.9 1281 308.9 1281 316.7 1280 316.7 1280 305.3 1279 305.3 1279 290.9 1278 290.9 1278 275.6 1277 275.6 1277 258.9 1276 258.9 1276 239.5 1275 239.5 1275 230.9 1274 230.9 1274 249.3 1273 249.3 1273 268.6 1272 268.6 1272 282.5 1271 282.5 1271 301.1 1270 301.1 1270 314.5 1269 314.5 1269 309.7 1268 309.7 1268 296.0 1267 296.0 1267 280.9 1266 280.9 1266 267.5 1265 267.5 1265 252.1 1264 252.1 1264 239.1 1263 239.1 1263 254.8 1262 254.8 1262 275.3 1261 275.3 1261 289.8 1260 289.8 1260 303.6 1259 303.6 1259 316.9 1258 316.9 1258 313.6 1257 313.6 1257 301.5 1256 301.5 1256 291.7 1255 291.7 1255 279.4 1254 279.4 1254 266.7 1253 266.7 1253 259.1 1252 259.1 1252 270.4 1251 270.4 1251 283.9 1250 283.9 1250 295.8 1249 295.8 1249 305.9 1248 305.9 1248 316.1 1247 316.1 1247 316.4 1246 316.4 1246 301.5 1245 301.5 1245 288.1 1244 288.1 1244 276.9 1243 276.9 1243 265.9 1242 265.9 1242 253.8 1241 253.8 1241 266.1 1240 266.1 1240 274.9 1239 274.9 1239 288.6 1238 288.6 1238 297.9 1237 297.9 1237 308.7 1236 308.7 1236 311.5 1235 311.5 1235 300.5 1234 300.5 1234 285.2 1233 285.2 1233 273.8 1232 273.8 1232 258.4 1231 258.4 1231 243.8 1230 243.8 1230 255.9 1229 255.9 1229 267.7 1228 267.7 1228 279.2 1227 279.2 1227 295.9 1226 295.9 1226 306.6 1225 306.6 1225 310.7 1224 310.7 1224 298.4 1223 298.4 1223 283.9 1222 283.9 1222 267.5 1221 267.5 1221 256.2 1220 256.2 1220 238.7 1219 238.7 1219 248.9 1218 248.9 1218 261.2 1217 261.2 1217 278.7 1216 278.7 1216 292.1 1215 292.1 1215 302.9 1214 302.9 1214 312.8 1213 312.8 1213 300.0 1212 300.0 1212 286.5 1211 286.5 1211 273.3 1210 273.3 1210 261.1 1209 261.1 1209 245.4 1208 245.4 1208 252.5 1207 252.5 1207 264.0 1206 264.0 1206 274.9 1205 274.9 1205 292.6 1204 292.6 1204 299.9 1203 299.9 1203 311.4 1202 311.4 1202 300.1 1201 300.1 1201 292.7 1200 292.7 1200 281.9 1199 281.9 1199 273.7 1198 273.7 1198 265.4 1197 265.4 1197 264.7 1196 264.7 1196 278.9 1195 278.9 1195 291.2 1194 291.2 1194 302.4 1193 302.4 1193 313.4 1192 313.4 1192 319.3 1191 319.3 1191 310.1 1190 310.1 1190 298.3 1189 298.3 1189 285.4 1188 285.4 1188 270.7 1187 270.7 1187 259.7 1186 259.7 1186 262.0 1185 262.0 1185 270.8 1184 270.8 1184 281.6 1183 281.6 1183 293.5 1182 293.5 1182 303.9 1181 303.9 1181 310.5 1180 310.5 1180 300.3 1179 300.3 1179 285.1 1178 285.1 1178 271.1 1177 271.1 1177 255.2 1176 255.2 1176 239.8 1175 239.8 1175 236.1 1174 236.1 1174 253.2 1173 253.2 1173 271.0 1172 271.0 1172 282.4 1171 282.4 1171 297.5 1170 297.5 1170 312.1 1169 312.1 1169 303.2 1168 303.2 1168 289.1 1167 289.1 1167 278.7 1166 278.7 1166 259.1 1165 259.1 1165 245.4 1164 245.4 1164 239.5 1163 239.5 1163 254.0 1162 254.0 1162 270.2 1161 270.2 1161 281.2 1160 281.2 1160 294.2 1159 294.2 1159 306.2 1158 306.2 1158 298.4 1157 298.4 1157 286.1 1156 286.1 1156 271.7 1155 271.7 1155 256.5 1154 256.5 1154 242.3 1153 242.3 1153 231.4 1152 231.4 1152 251.4 1151 251.4 1151 266.4 1150 266.4 1150 282.7 1149 282.7 1149 299.6 1148 299.6 1148 312.9 1147 312.9 1147 305.9 1146 305.9 1146 293.7 1145 293.7 1145 277.4 1144 277.4 1144 261.2 1143 261.2 1143 240.1 1142 240.1 1142 227.9 1141 227.9 1141 242.9 1140 242.9 1140 260.2 1139 260.2 1139 278.1 1138 278.1 1138 290.8 1137 290.8 1137 305.4 1136 305.4 1136 305.3 1135 305.3 1135 293.0 1134 293.0 1134 278.5 1133 278.5 1133 261.7 1132 261.7 1132 246.6 1131 246.6 1131 231.1 1130 231.1 1130 244.5 1129 244.5 1129 261.3 1128 261.3 1128 274.3 1127 274.3 1127 288.2 1126 288.2 1126 301.7 1125 301.7 1125 306.8 1124 306.8 1124 293.1 1123 293.1 1123 287.0 1122 287.0 1122 273.7 1121 273.7 1121 265.4 1120 265.4 1120 252.8 1119 252.8 1119 261.6 1118 261.6 1118 275.3 1117 275.3 1117 289.1 1116 289.1 1116 300.4 1115 300.4 1115 311.7 1114 311.7 1114 312.8 1113 312.8 1113 300.1 1112 300.1 1112 286.7 1111 286.7 1111 275.2 1110 275.2 1110 258.7 1109 258.7 1109 247.8 1108 247.8 1108 252.8 1107 252.8 1107 265.8 1106 265.8 1106 281.5 1105 281.5 1105 295.3 1104 295.3 1104 304.1 1103 304.1 1103 308.3 1102 308.3 1102 301.4 1101 301.4 1101 291.1 1100 291.1 1100 278.6 1099 278.6 1099 267.5 1098 267.5 1098 255.0 1097 255.0 1097 260.2 1096 260.2 1096 272.2 1095 272.2 1095 281.1 1094 281.1 1094 293.2 1093 293.2 1093 300.2 1092 300.2 1092 305.0 1091 305.0 1091 295.0 1090 295.0 1090 280.2 1089 280.2 1089 261.0 1088 261.0 1088 245.3 1087 245.3 1087 226.6 1086 226.6 1086 228.8 1085 228.8 1085 251.3 1084 251.3 1084 267.7 1083 267.7 1083 283.9 1082 283.9 1082 299.2 1081 299.2 1081 313.2 1080 313.2 1080 299.7 1079 299.7 1079 287.5 1078 287.5 1078 271.9 1077 271.9 1077 253.5 1076 253.5 1076 240.6 1075 240.6 1075 238.3 1074 238.3 1074 258.8 1073 258.8 1073 271.8 1072 271.8 1072 288.8 1071 288.8 1071 302.5 1070 302.5 1070 317.1 1069 317.1 1069 300.3 1068 300.3 1068 285.2 1067 285.2 1067 266.7 1066 266.7 1066 248.8 1065 248.8 1065 232.4 1064 232.4 1064 227.0 1063 227.0 1063 248.2 1062 248.2 1062 265.9 1061 265.9 1061 278.7 1060 278.7 1060 296.2 1059 296.2 1059 312.1 1058 312.1 1058 302.7 1057 302.7 1057 290.8 1056 290.8 1056 279.5 1055 279.5 1055 266.8 1054 266.8 1054 250.3 1053 250.3 1053 248.3 1052 248.3 1052 261.5 1051 261.5 1051 274.9 1050 274.9 1050 288.6 1049 288.6 1049 296.2 1048 296.2 1048 309.5 1047 309.5 1047 302.4 1046 302.4 1046 291.9 1045 291.9 1045 275.7 1044 275.7 1044 266.1 1043 266.1 1043 250.0 1042 250.0 1042 240.4 1041 240.4 1041 259.1 1040 259.1 1040 272.1 1039 272.1 1039 287.6 1038 287.6 1038 302.3 1037 302.3 1037 313.5 1036 313.5 1036 309.6 1035 309.6 1035 295.9 1034 295.9 1034 284.2 1033 284.2 1033 265.9 1032 265.9 1032 249.0 1031 249.0 1031 237.9 1030 237.9 1030 256.2 1029 256.2 1029 269.9 1028 269.9 1028 287.5 1027 287.5 1027 297.8 1026 297.8 1026 314.1 1025 314.1 1025 312.0 1024 312.0 1024 292.8 1023 292.8 1023 277.9 1022 277.9 1022 260.2 1021 260.2 1021 243.4 1020 243.4 1020 222.7 1019 222.7 1019 238.8 1018 238.8 1018 255.5 1017 255.5 1017 274.6 1016 274.6 1016 293.8 1015 293.8 1015 308.4 1014 308.4 1014 309.3 1013 309.3 1013 299.1 1012 299.1 1012 287.3 1011 287.3 1011 272.7 1010 272.7 1010 259.9 1009 259.9 1009 244.9 1008 244.9 1008 254.6 1007 254.6 1007 265.7 1006 265.7 1006 277.0 1005 277.0 1005 290.0 1004 290.0 1004 301.0 1003 301.0 1003 305.7 1002 305.7 1002 293.9 1001 293.9 1001 282.7 1000 282.7 1000 271.9 999 271.9 999 261.2 998 261.2 998 250.0 997 250.0 997 256.3 996 256.3 996 273.1 995 273.1 995 284.0 994 284.0 994 293.8 993 293.8 993 307.2 992 307.2 992 311.2 991 311.2 991 302.1 990 302.1 990 288.2 989 288.2 989 275.7 988 275.7 988 260.5 987 260.5 987 248.0 986 248.0 986 249.3 985 249.3 985 266.6 984 266.6 984 276.6 983 276.6 983 289.2 982 289.2 982 299.0 981 299.0 981 308.1 980 308.1 980 295.1 979 295.1 979 282.9 978 282.9 978 264.3 977 264.3 977 253.1 976 253.1 976 237.1 975 237.1 975 237.7 974 237.7 974 256.2 973 256.2 973 273.0 972 273.0 972 293.2 971 293.2 971 307.5 970 307.5 970 319.3 969 319.3 969 305.9 968 305.9 968 293.6 967 293.6 967 277.7 966 277.7 966 261.8 965 261.8 965 249.7 964 249.7 964 247.2 963 247.2 963 262.3 962 262.3 962 271.6 961 271.6 961 285.1 960 285.1 960 296.4 959 296.4 959 308.0 958 308.0 958 298.2 957 298.2 957 289.5 956 289.5 956 276.3 955 276.3 955 263.6 954 263.6 954 253.8 953 253.8 953 251.5 952 251.5 952 265.9 951 265.9 951 274.1 950 274.1 950 289.2 949 289.2 949 300.9 948 300.9 948 307.7 947 307.7 947 299.3 946 299.3 946 288.2 945 288.2 945 273.2 944 273.2 944 258.9 943 258.9 943 245.3 942 245.3 942 238.1 941 238.1 941 255.9 940 255.9 940 274.3 939 274.3 939 289.8 938 289.8 938 305.1 937 305.1 937 314.2 936 314.2 936 314.7 935 314.7 935 299.9 934 299.9 934 288.2 933 288.2 933 278.5 932 278.5 932 266.1 931 266.1 931 258.0 930 258.0 930 267.4 929 267.4 929 277.1 928 277.1 928 290.8 927 290.8 927 298.0 926 298.0 926 309.2 925 309.2 925 308.3 924 308.3 924 296.3 923 296.3 923 288.8 922 288.8 922 280.4 921 280.4 921 268.8 920 268.8 920 257.5 919 257.5 919 270.1 918 270.1 918 282.3 917 282.3 917 291.0 916 291.0 916 298.7 915 298.7 915 310.3 914 310.3 914 307.3 913 307.3 913 295.0 912 295.0 912 284.7 911 284.7 911 270.0 910 270.0 910 255.0 909 255.0 909 242.4 908 242.4 908 257.3 907 257.3 907 272.4 906 272.4 906 282.4 905 282.4 905 300.3 904 300.3 904 309.3 903 309.3 903 309.8 902 309.8 902 301.5 901 301.5 901 294.1 900 294.1 900 282.1 899 282.1 899 268.6 898 268.6 898 261.0 897 261.0 897 268.6 896 268.6 896 278.5 895 278.5 895 290.2 894 290.2 894 298.8 893 298.8 893 310.8 892 310.8 892 312.6 891 312.6 891 300.2 890 300.2 890 286.1 889 286.1 889 266.4 888 266.4 888 252.4 887 252.4 887 236.8 886 236.8 886 246.6 885 246.6 885 261.5 884 261.5 884 273.9 883 273.9 883 285.1 882 285.1 882 300.0 881 300.0 881 304.8 880 304.8 880 298.5 879 298.5 879 285.3 878 285.3 878 273.4 877 273.4 877 258.2 876 258.2 876 248.9 875 248.9 875 254.9 874 254.9 874 264.2 873 264.2 873 281.7 872 281.7 872 292.6 871 292.6 871 304.9 870 304.9 870 312.2 869 312.2 869 304.7 868 304.7 868 290.1 867 290.1 867 280.6 866 280.6 866 263.0 865 263.0 865 251.8 864 251.8 864 254.2 863 254.2 863 269.7 862 269.7 862 282.1 861 282.1 861 294.2 860 294.2 860 309.9 859 309.9 859 317.3 858 317.3 858 305.2 857 305.2 857 294.7 856 294.7 856 280.7 855 280.7 855 262.3 854 262.3 854 252.0 853 252.0 853 250.7 852 250.7 852 264.9 851 264.9 851 278.4 850 278.4 850 294.1 849 294.1 849 309.5 848 309.5 848 316.7 847 316.7 847 310.2 846 310.2 846 295.9 845 295.9 845 277.9 844 277.9 844 263.3 843 263.3 843 248.3 842 248.3 842 246.8 841 246.8 841 262.5 840 262.5 840 271.4 839 271.4 839 284.9 838 284.9 838 297.4 837 297.4 837 308.6 836 308.6 836 299.7 835 299.7 835 292.9 834 292.9 834 277.3 833 277.3 833 266.4 832 266.4 832 255.8 831 255.8 831 248.1 830 248.1 830 261.0 829 261.0 829 277.6 828 277.6 828 293.2 827 293.2 827 302.8 826 302.8 826 316.9 825 316.9 825 309.7 824 309.7 824 300.8 823 300.8 823 287.5 822 287.5 822 276.0 821 276.0 821 263.7 820 263.7 820 253.5 819 253.5 819 267.5 818 267.5 818 277.4 817 277.4 817 290.6 816 290.6 816 302.0 815 302.0 815 309.2 814 309.2 814 306.7 813 306.7 813 292.0 812 292.0 812 278.5 811 278.5 811 262.5 810 262.5 810 248.1 809 248.1 809 232.3 808 232.3 808 251.8 807 251.8 807 266.7 806 266.7 806 278.0 805 278.0 805 292.0 804 292.0 804 303.5 803 303.5 803 304.6 802 304.6 802 293.6 801 293.6 801 279.0 800 279.0 800 267.8 799 267.8 799 256.1 798 256.1 798 239.6 797 239.6 797 256.9 796 256.9 796 269.2 795 269.2 795 280.8 794 280.8 794 298.3 793 298.3 793 306.3 792 306.3 792 310.2 791 310.2 791 300.0 790 300.0 790 282.8 789 282.8 789 272.7 788 272.7 788 258.4 787 258.4 787 242.2 786 242.2 786 255.0 785 255.0 785 269.7 784 269.7 784 284.7 783 284.7 783 299.2 782 299.2 782 311.2 781 311.2 781 311.5 780 311.5 780 299.5 779 299.5 779 287.6 778 287.6 778 272.2 777 272.2 777 259.0 776 259.0 776 242.5 775 242.5 775 252.8 774 252.8 774 264.2 773 264.2 773 279.2 772 279.2 772 294.5 771 294.5 771 308.3 770 308.3 770 315.2 769 315.2 769 303.5 768 303.5 768 289.5 767 289.5 767 275.1 766 275.1 766 255.5 765 255.5 765 242.2 764 242.2 764 251.0 763 251.0 763 266.1 762 266.1 762 281.4 761 281.4 761 293.7 760 293.7 760 305.2 759 305.2 759 314.3 758 314.3 758 302.6 757 302.6 757 283.0 756 283.0 756 267.9 755 267.9 755 249.6 754 249.6 754 235.0 753 235.0 753 240.4 752 240.4 752 257.6 751 257.6 751 270.8 750 270.8 750 289.7 749 289.7 749 307.6 748 307.6 748 319.3 747 319.3 747 304.1 746 304.1 746 291.8 745 291.8 745 277.1 744 277.1 744 261.5 743 261.5 743 243.7 742 243.7 742 241.9 741 241.9 741 259.3 740 259.3 740 271.5 739 271.5 739 286.0 738 286.0 738 298.3 737 298.3 737 313.0 736 313.0 736 302.6 735 302.6 735 290.2 734 290.2 734 276.8 733 276.8 733 264.6 732 264.6 732 253.5 731 253.5 731 250.8 730 250.8 730 262.5 729 262.5 729 274.6 728 274.6 728 288.3 727 288.3 727 299.3 726 299.3 726 313.5 725 313.5 725 301.3 724 301.3 724 290.3 723 290.3 723 272.6 722 272.6 722 261.3 721 261.3 721 244.0 720 244.0 720 238.3 719 238.3 719 253.1 718 253.1 718 269.4 717 269.4 717 283.7 716 283.7 716 301.5 715 301.5 715 313.1 714 313.1 714 307.3 713 307.3 713 292.8 712 292.8 712 277.2 711 277.2 711 262.2 710 262.2 710 243.6 709 243.6 709 229.7 708 229.7 708 247.0 707 247.0 707 266.2 706 266.2 706 281.2 705 281.2 705 296.7 704 296.7 704 307.7 703 307.7 703 304.0 702 304.0 702 297.4 701 297.4 701 285.0 700 285.0 700 272.3 699 272.3 699 259.2 698 259.2 698 251.6 697 251.6 697 263.7 696 263.7 696 279.0 695 279.0 695 285.8 694 285.8 694 302.3 693 302.3 693 311.0 692 311.0 692 307.9 691 307.9 691 301.2 690 301.2 690 287.2 689 287.2 689 273.3 688 273.3 688 263.6 687 263.6 687 248.9 686 248.9 686 266.0 685 266.0 685 274.6 684 274.6 684 285.9 683 285.9 683 298.5 682 298.5 682 312.3 681 312.3 681 310.3 680 310.3 680 296.7 679 296.7 679 281.7 678 281.7 678 267.6 677 267.6 677 249.9 676 249.9 676 232.0 675 232.0 675 248.9 674 248.9 674 262.6 673 262.6 673 275.0 672 275.0 672 292.1 671 292.1 671 303.0 670 303.0 670 306.7 669 306.7 669 293.1 668 293.1 668 281.3 667 281.3 667 266.4 666 266.4 666 254.0 665 254.0 665 238.5 664 238.5 664 250.7 663 250.7 663 262.1 662 262.1 662 280.3 661 280.3 661 293.5 660 293.5 660 304.9 659 304.9 659 311.7 658 311.7 658 300.6 657 300.6 657 285.4 656 285.4 656 271.3 655 271.3 655 255.6 654 255.6 654 238.8 653 238.8 653 243.9 652 243.9 652 261.6 651 261.6 651 276.4 650 276.4 650 292.2 649 292.2 649 306.3 648 306.3 648 318.5 647 318.5 647 305.2 646 305.2 646 288.2 645 288.2 645 275.5 644 275.5 644 259.1 643 259.1 643 246.3 642 246.3 642 251.8 641 251.8 641 264.6 640 264.6 640 280.8 639 280.8 639 293.5 638 293.5 638 307.6 637 307.6 637 313.2 636 313.2 636 304.8 635 304.8 635 290.3 634 290.3 634 282.0 633 282.0 633 268.6 632 268.6 632 253.5 631 253.5 631 253.5 630 253.5 630 266.2 629 266.2 629 275.1 628 275.1 628 286.6 627 286.6 627 300.1 626 300.1 626 308.8 625 308.8 625 302.5 624 302.5 624 293.2 623 293.2 623 280.3 622 280.3 622 273.6 621 273.6 621 265.2 620 265.2 620 258.9 619 258.9 619 273.6 618 273.6 618 281.7 617 281.7 617 297.5 616 297.5 616 305.3 615 305.3 615 316.0 614 316.0 614 309.4 613 309.4 613 300.1 612 300.1 612 288.9 611 288.9 611 278.0 610 278.0 610 267.3 609 267.3 609 260.8 608 260.8 608 269.5 607 269.5 607 284.9 606 284.9 606 294.4 605 294.4 605 305.3 604 305.3 604 314.0 603 314.0 603 307.0 602 307.0 602 294.1 601 294.1 601 283.2 600 283.2 600 270.9 599 270.9 599 258.8 598 258.8 598 252.0 597 252.0 597 263.3 596 263.3 596 278.5 595 278.5 595 286.8 594 286.8 594 299.2 593 299.2 593 308.2 592 308.2 592 310.6 591 310.6 591 300.3 590 300.3 590 287.3 589 287.3 589 275.0 588 275.0 588 268.4 587 268.4 587 256.4 586 256.4 586 266.6 585 266.6 585 279.7 584 279.7 584 286.6 583 286.6 583 298.1 582 298.1 582 307.7 581 307.7 581 306.4 580 306.4 580 293.2 579 293.2 579 280.0 578 280.0 578 270.4 577 270.4 577 256.0 576 256.0 576 244.6 575 244.6 575 256.6 574 256.6 574 271.7 573 271.7 573 284.2 572 284.2 572 298.5 571 298.5 571 306.2 570 306.2 570 307.9 569 307.9 569 296.9 568 296.9 568 286.9 567 286.9 567 273.4 566 273.4 566 257.8 565 257.8 565 245.2 564 245.2 564 251.4 563 251.4 563 268.6 562 268.6 562 277.4 561 277.4 561 287.7 560 287.7 560 299.0 559 299.0 559 302.9 558 302.9 558 293.7 557 293.7 557 275.9 556 275.9 556 260.4 555 260.4 555 245.0 554 245.0 554 232.6 553 232.6 553 241.3 552 241.3 552 258.2 551 258.2 551 279.8 550 279.8 550 292.2 549 292.2 549 310.8 548 310.8 548 319.2 547 319.2 547 304.3 546 304.3 546 294.5 545 294.5 545 281.7 544 281.7 544 265.4 543 265.4 543 254.2 542 254.2 542 257.6 541 257.6 541 272.3 540 272.3 540 284.0 539 284.0 539 295.4 538 295.4 538 307.9 537 307.9 537 314.5 536 314.5 536 301.6 535 301.6 535 289.8 534 289.8 534 273.5 533 273.5 533 262.8 532 262.8 532 244.8 531 244.8 531 251.4 530 251.4 530 260.9 529 260.9 529 274.8 528 274.8 528 290.6 527 290.6 527 302.3 526 302.3 526 311.1 525 311.1 525 299.7 524 299.7 524 281.7 523 281.7 523 265.9 522 265.9 522 247.3 521 247.3 521 226.8 520 226.8 520 230.3 519 230.3 519 245.5 518 245.5 518 264.6 517 264.6 517 284.3 516 284.3 516 297.9 515 297.9 515 312.6 514 312.6 514 304.6 513 304.6 513 291.9 512 291.9 512 272.9 511 272.9 511 261.4 510 261.4 510 245.0 509 245.0 509 242.6 508 242.6 508 260.5 507 260.5 507 272.7 506 272.7 506 290.5 505 290.5 505 302.5 504 302.5 504 312.6 503 312.6 503 308.8 502 308.8 502 294.6 501 294.6 501 282.1 500 282.1 500 267.6 499 267.6 499 255.7 498 255.7 498 247.2 497 247.2 497 263.0 496 263.0 496 272.9 495 272.9 495 285.4 494 285.4 494 300.2 493 300.2 493 308.9 492 308.9 492 303.2 491 303.2 491 290.7 490 290.7 490 276.5 489 276.5 489 257.1 488 257.1 488 241.6 487 241.6 487 230.5 486 230.5 486 248.2 485 248.2 485 268.7 484 268.7 484 283.0 483 283.0 483 298.7 482 298.7 482 310.6 481 310.6 481 306.2 480 306.2 480 292.7 479 292.7 479 275.6 478 275.6 478 258.9 477 258.9 477 244.4 476 244.4 476 232.1 475 232.1 475 245.7 474 245.7 474 261.7 473 261.7 473 276.0 472 276.0 472 294.9 471 294.9 471 306.8 470 306.8 470 304.8 469 304.8 469 291.5 468 291.5 468 276.7 467 276.7 467 257.8 466 257.8 466 242.6 465 242.6 465 222.9 464 222.9 464 240.1 463 240.1 463 254.4 462 254.4 462 270.0 461 270.0 461 288.4 460 288.4 460 303.7 459 303.7 459 304.4 458 304.4 458 293.1 457 293.1 457 279.3 456 279.3 456 264.6 455 264.6 455 252.2 454 252.2 454 238.3 453 238.3 453 248.4 452 248.4 452 265.1 451 265.1 451 283.5 450 283.5 450 294.1 449 294.1 449 309.6 448 309.6 448 315.7 447 315.7 447 296.8 446 296.8 446 286.4 445 286.4 445 268.5 444 268.5 444 251.9 443 251.9 443 233.1 442 233.1 442 245.5 441 245.5 441 260.0 440 260.0 440 273.4 439 273.4 439 291.5 438 291.5 438 302.2 437 302.2 437 310.3 436 310.3 436 298.3 435 298.3 435 284.9 434 284.9 434 264.7 433 264.7 433 253.8 432 253.8 432 232.9 431 232.9 431 238.6 430 238.6 430 258.6 429 258.6 429 274.7 428 274.7 428 289.6 427 289.6 427 300.4 426 300.4 426 310.3 425 310.3 425 294.5 424 294.5 424 283.7 423 283.7 423 263.4 422 263.4 422 247.7 421 247.7 421 235.1 420 235.1 420 235.5 419 235.5 419 254.2 418 254.2 418 272.1 417 272.1 417 287.6 416 287.6 416 302.7 415 302.7 415 313.9 414 313.9 414 305.5 413 305.5 413 292.3 412 292.3 412 281.6 411 281.6 411 272.3 410 272.3 410 260.0 409 260.0Z" fill="#3e689e"/><path d="M450.5 283.5 V319 M504.5 302.5 V319 M515.5 297.9 V319 M526.5 302.3 V319 M541.5 257.6 V319 M548.5 310.8 V319 M566.5 273.4 V319 M606.5 284.9 V319 M621.5 273.6 V319 M642.5 246.3 V319 M659.5 304.9 V319 M672.5 275.0 V319 M687.5 263.6 V319 M712.5 292.8 V319 M725.5 313.5 V319 M731.5 253.5 V319 M746.5 304.1 V319 M753.5 235.0 V319 M809.5 248.1 V319 M828.5 277.6 V319 M841.5 246.8 V319 M848.5 309.5 V319 M858.5 317.3 V319 M869.5 312.2 V319 M893.5 298.8 V319 M935.5 314.7 V319 M973.5 256.2 V319 M985.5 249.3 V319 M1020.5 243.4 V319 M1039.5 272.1 V319 M1078.5 287.5 V319 M1103.5 304.1 V319 M1124.5 306.8 V319 M1132.5 261.7 V319 M1146.5 305.9 V319 M1162.5 254.0 V319 M1209.5 261.1 V319 M1234.5 300.5 V319 M1265.5 267.5 V319 M1279.5 305.3 V319 M1318.5 254.1 V319 M1337.5 287.0 V319 M1359.5 297.8 V319 M1379.5 310.0 V319 M1387.5 252.1 V319 M1402.5 319.3 V319 M1428.5 257.2 V319 M1440.5 250.7 V319 M1480.5 313.4 V319 M1494.5 283.2 V319 M1498.5 275.4 V319 M1526.5 290.9 V319" stroke="#3e689e" stroke-width="1"/><path d="M428.5 168 V199.5 M456.5 168 V214.6 M511.5 168 V224.9 M530.5 168 V227.0 M535.5 168 V205.5 M549.5 168 V215.0 M561.5 168 V215.9 M573.5 168 V197.2 M582.5 168 V196.3 M605.5 168 V196.7 M624.5 168 V224.1 M631.5 168 V202.6 M656.5 168 V198.5 M690.5 168 V223.4 M702.5 168 V220.4 M719.5 168 V222.8 M721.5 168 V207.8 M737.5 168 V220.1 M746.5 168 V200.8 M762.5 168 V224.1 M773.5 168 V226.7 M794.5 168 V218.8 M798.5 168 V210.8 M819.5 168 V217.7 M830.5 168 V227.9 M847.5 168 V219.2 M865.5 168 V206.3 M875.5 168 V222.3 M902.5 168 V217.7 M921.5 168 V226.2 M936.5 168 V227.2 M950.5 168 V215.0 M995.5 168 V199.8 M998.5 168 V206.2 M1040.5 168 V215.1 M1042.5 168 V216.2 M1055.5 168 V217.5 M1065.5 168 V209.5 M1089.5 168 V200.7 M1107.5 168 V196.4 M1120.5 168 V203.1 M1150.5 168 V204.9 M1156.5 168 V218.0 M1185.5 168 V205.7 M1230.5 168 V198.9 M1250.5 168 V214.6 M1281.5 168 V206.8 M1286.5 168 V195.7 M1300.5 168 V227.4 M1316.5 168 V213.1 M1342.5 168 V217.6 M1373.5 168 V222.6 M1389.5 168 V200.4 M1405.5 168 V207.1 M1411.5 168 V217.0 M1448.5 168 V213.3 M1460.5 168 V207.2 M1479.5 168 V205.7 M1488.5 168 V224.6 M1498.5 168 V224.0 M1523.5 168 V208.4 M1540.5 168 V224.4" stroke="#2f3a48" stroke-width="1"/><rect x="408.5" y="167.5" width="1132.0" height="152.0" fill="none" stroke="#a9a9a9" stroke-width="1"/><path d="M404 178.5 H411.5" stroke="#a9a9a9" stroke-width="1"/><path d="M404 200.5 H411.5" stroke="#a9a9a9" stroke-width="1"/><path d="M404 222.5 H411.5" stroke="#a9a9a9" stroke-width="1"/><path d="M404 244.5 H411.5" stroke="#a9a9a9" stroke-width="1"/><path d="M404 266.5 H411.5" stroke="#a9a9a9" stroke-width="1"/><path d="M404 288.5 H411.5" stroke="#a9a9a9" stroke-width="1"/><path d="M404 311.5 H411.5" stroke="#a9a9a9" stroke-width="1"/></svg>
<div class="t" style="left:-197.00px;width:600px;text-align:right;top:174.33px;font-size:9.3px;color:#f0f0f0;">0.4</div>
<div class="t" style="left:-197.00px;width:600px;text-align:right;top:196.46px;font-size:9.3px;color:#f0f0f0;">0.2</div>
<div class="t" style="left:-197.00px;width:600px;text-align:right;top:218.60px;font-size:9.3px;color:#f0f0f0;">0</div>
<div class="t" style="left:-197.00px;width:600px;text-align:right;top:240.73px;font-size:9.3px;color:#f0f0f0;">-0.2</div>
<div class="t" style="left:-197.00px;width:600px;text-align:right;top:262.87px;font-size:9.3px;color:#f0f0f0;">-0.4</div>
<div class="t" style="left:-197.00px;width:600px;text-align:right;top:285.00px;font-size:9.3px;color:#f0f0f0;">-0.6</div>
<div class="t" style="left:-197.00px;width:600px;text-align:right;top:307.13px;font-size:9.3px;color:#f0f0f0;">-0.8</div>
<div class="t" style="left:190.10px;width:600px;text-align:center;top:323.33px;font-size:9.3px;color:#f0f0f0;">0:05.50</div>
<div class="t" style="left:350.45px;width:600px;text-align:center;top:323.33px;font-size:9.3px;color:#f0f0f0;">0:05.75</div>
<div class="t" style="left:510.80px;width:600px;text-align:center;top:323.33px;font-size:9.3px;color:#f0f0f0;">0:06.00</div>
<div class="t" style="left:671.15px;width:600px;text-align:center;top:323.33px;font-size:9.3px;color:#f0f0f0;">0:06.25</div>
<div class="t" style="left:831.50px;width:600px;text-align:center;top:323.33px;font-size:9.3px;color:#f0f0f0;">0:06.50</div>
<div class="t" style="left:991.85px;width:600px;text-align:center;top:323.33px;font-size:9.3px;color:#f0f0f0;">0:06.75</div>
<div class="t" style="left:1152.20px;width:600px;text-align:center;top:323.33px;font-size:9.3px;color:#f0f0f0;">0:07.00</div>
<div class="t" style="left:625.60px;width:600px;text-align:center;top:156.17px;font-size:10.2px;color:#3e6ca6;font-weight:bold;">Acceleration [g]</div>
<svg class="a" style="left:926px;top:269px;" width="48" height="50" viewBox="0 0 48 50"><rect x="0" y="0" width="48" height="50" rx="10" fill="#8a8a8a" fill-opacity="0.26"/><path d="M11.5 17.5 L19.0 25.0 L11.5 32.5 M21.0 17.5 L28.5 25.0 L21.0 32.5" stroke="#9d9d9d" stroke-width="3.4" fill="none"/></svg>
<svg class="a" style="left:408px;top:320px;" width="23.5" height="14" viewBox="0 0 23.5 14"><rect x="0" y="0" width="23.5" height="14" rx="3.5" fill="#f5a50f"/><path d="M6 7 L16.5 2.2 V11.8 Z" fill="#fff"/></svg>
<svg class="a" style="left:1511px;top:147px;" width="31" height="30" viewBox="0 0 31 30"><g stroke="#fff" stroke-width="2.6" fill="none"><path d="M3 3 L11 11 M3 3 H10 M3 3 V10"/><path d="M28 3 L20 11 M28 3 H21 M28 3 V10"/><path d="M3 27 L11 19 M3 27 H10 M3 27 V20"/><path d="M28 27 L20 19 M28 27 H21 M28 27 V20"/></g></svg>
<svg class="a" style="left:0px;top:0px;" width="1560" height="870" viewBox="0 0 1560 870"><path d="M471.5 396.5 V519.5" stroke="#a9a9a9" stroke-width="1"/><path d="M620.5 396.5 V519.5" stroke="#a9a9a9" stroke-width="1"/><path d="M768.5 396.5 V519.5" stroke="#a9a9a9" stroke-width="1"/><path d="M916.5 396.5 V519.5" stroke="#a9a9a9" stroke-width="1"/><path d="M1065.5 396.5 V519.5" stroke="#a9a9a9" stroke-width="1"/><path d="M1213.5 396.5 V519.5" stroke="#a9a9a9" stroke-width="1"/><path d="M1362.5 396.5 V519.5" stroke="#a9a9a9" stroke-width="1"/><path d="M1510.5 396.5 V519.5" stroke="#a9a9a9" stroke-width="1"/><path d="M412.5 410.5 H1540.5" stroke="#adadad" stroke-width="1" stroke-dasharray="4 5"/><path d="M412.5 454.5 H1540.5" stroke="#adadad" stroke-width="1" stroke-dasharray="4 5"/><path d="M412.5 499.5 H1540.5" stroke="#adadad" stroke-width="1" stroke-dasharray="4 5"/><path d="M409 396.8 410 396.8 411 396.8 412 396.8 413 396.8 414 396.8 415 396.8 416 396.8 417 396.8 418 396.8 419 396.8 420 396.8 421 396.8 422 396.8 423 396.8 424 396.8 425 396.8 426 396.8 427 396.8 428 396.8 429 396.8 430 396.8 431 396.8 432 396.8 433 396.8 434 396.8 435 396.8 436 396.8 437 396.8 438 396.8 439 396.8 440 396.8 441 396.8 442 396.8 443 396.8 444 396.8 445 396.8 446 396.8 447 396.8 448 398.1 449 399.5 450 399.9 451 399.6 452 400.0 453 401.7 454 403.9 455 405.4 456 405.8 457 406.0 458 406.9 459 407.8 460 408.2 461 408.2 462 408.8 463 410.9 464 413.9 465 416.2 466 417.3 467 418.1 468 419.5 469 421.3 470 422.7 471 423.5 472 424.6 473 426.7 474 429.5 475 431.4 476 432.0 477 431.8 478 432.1 479 433.2 480 434.3 481 434.9 482 435.8 483 437.7 484 440.5 485 442.8 486 444.0 487 444.6 488 445.8 489 448.1 490 450.8 491 453.1 492 455.2 493 457.7 494 460.9 495 463.5 496 464.7 497 464.8 498 465.3 499 466.9 500 468.9 501 470.4 502 471.3 503 472.5 504 474.2 505 475.8 506 476.2 507 475.8 508 476.0 509 477.6 510 480.0 511 482.2 512 483.7 513 485.1 514 487.0 515 489.0 516 490.0 517 490.0 518 490.3 519 491.8 520 494.2 521 496.0 522 496.8 523 497.1 524 497.6 525 498.5 526 498.8 527 498.3 528 498.1 529 499.2 530 501.5 531 503.6 532 504.7 533 505.2 534 506.0 535 507.5 536 508.8 537 509.4 538 509.9 539 511.5 540 514.0 541 516.1 542 516.8 543 516.3 544 515.9 545 516.0 546 516.2 547 515.6 548 514.9 549 514.8 550 515.8 551 516.6 552 516.2 553 514.8 554 513.5 555 513.4 556 513.8 557 514.0 558 513.9 559 514.3 560 515.6 561 516.8 562 516.9 563 515.7 564 514.4 565 514.0 566 514.4 567 514.5 568 513.8 569 513.2 570 513.2 571 513.2 572 512.3 573 510.2 574 508.0 575 507.1 576 507.4 577 507.7 578 507.3 579 506.8 580 506.8 581 507.1 582 506.8 583 505.3 584 503.6 585 502.9 586 503.4 587 503.8 588 503.1 589 501.6 590 500.2 591 499.0 592 497.3 593 494.6 594 491.6 595 489.6 596 488.9 597 488.4 598 487.1 599 484.9 600 482.8 601 481.5 602 480.3 603 478.6 604 476.6 605 475.5 606 475.8 607 476.4 608 475.9 609 474.2 610 472.2 611 470.8 612 469.7 613 468.0 614 465.8 615 464.1 616 463.5 617 463.1 618 461.8 619 459.2 620 456.3 621 454.2 622 452.9 623 451.5 624 449.7 625 448.2 626 447.8 627 447.9 628 447.1 629 444.9 630 442.3 631 440.5 632 439.5 633 438.6 634 437.0 635 435.1 636 433.8 637 432.9 638 431.2 639 428.1 640 424.5 641 421.7 642 420.3 643 419.3 644 417.8 645 416.0 646 414.8 647 414.2 648 413.4 649 411.6 650 409.4 651 408.0 652 408.1 653 408.8 654 408.8 655 408.0 656 407.2 657 406.8 658 406.2 659 404.5 660 402.1 661 400.3 662 399.9 663 400.1 664 399.6 665 398.1 666 396.8 667 396.8 668 396.8 669 396.8 670 396.8 671 396.8 672 396.8 673 396.8 674 396.8 675 396.8 676 396.8 677 396.8 678 396.8 679 396.8 680 396.8 681 396.8 682 396.8 683 396.8 684 396.8 685 396.8 686 396.8 687 396.8 688 396.8 689 396.8 690 396.8 691 396.8 692 396.8 693 396.8 694 396.8 695 396.8 696 396.8 697 396.8 698 396.8 699 396.8 700 396.8 701 396.8 702 396.8 703 396.8 704 398.3 705 398.4 706 397.5 707 396.8 708 397.4 709 398.5 710 399.3 711 399.6 712 400.1 713 401.3 714 402.6 715 402.9 716 402.4 717 402.3 718 403.7 719 406.2 720 408.4 721 409.8 722 411.1 723 412.9 724 414.8 725 415.8 726 415.9 727 416.1 728 417.5 729 419.9 730 422.0 731 423.1 732 423.6 733 424.6 734 426.0 735 427.0 736 427.3 737 427.9 738 429.8 739 433.0 740 436.2 741 438.3 742 439.7 743 441.4 744 443.6 745 445.8 746 447.3 747 448.6 748 450.7 749 453.8 750 456.7 751 458.2 752 458.4 753 458.5 754 459.3 755 460.4 756 461.0 757 461.3 758 462.4 759 464.5 760 466.8 761 468.0 762 468.2 763 468.4 764 469.8 765 471.9 766 473.8 767 475.3 768 477.2 769 479.9 770 482.7 771 484.3 772 484.6 773 484.6 774 485.6 775 487.4 776 489.0 777 490.0 778 490.9 779 492.4 780 494.2 781 495.1 782 494.9 783 494.6 784 495.4 785 497.6 786 499.9 787 501.5 788 502.7 789 504.4 790 506.4 791 507.7 792 507.8 793 507.6 794 508.2 795 510.0 796 511.8 797 512.6 798 512.4 799 512.3 800 512.5 801 512.4 802 511.4 803 510.1 804 509.7 805 510.7 806 512.2 807 512.9 808 512.6 809 512.4 810 512.9 811 513.6 812 513.7 813 513.5 814 514.0 815 515.7 816 517.7 817 518.6 818 518.2 819 517.3 820 517.0 821 516.9 822 516.4 823 515.4 824 514.7 825 515.0 826 515.9 827 515.8 828 514.4 829 512.6 830 511.6 831 511.5 832 511.4 833 510.8 834 510.4 835 510.9 836 511.8 837 512.0 838 510.6 839 508.6 840 507.2 841 506.7 842 506.3 843 505.2 844 503.7 845 502.7 846 502.1 847 500.9 848 498.4 849 495.3 850 493.1 851 492.2 852 491.8 853 491.1 854 489.9 855 489.1 856 489.0 857 488.6 858 487.3 859 485.2 860 483.8 861 483.7 862 484.2 863 484.0 864 482.8 865 481.4 866 480.3 867 479.1 868 476.9 869 473.8 870 471.3 871 470.1 872 469.6 873 468.7 874 466.6 875 464.3 876 462.5 877 461.1 878 459.4 879 457.0 880 455.1 881 454.6 882 454.8 883 454.4 884 452.8 885 450.4 886 448.3 887 446.8 888 445.0 889 442.5 890 440.1 891 438.6 892 438.0 893 437.0 894 434.6 895 431.5 896 428.9 897 427.2 898 426.0 899 424.3 900 422.8 901 422.2 902 422.5 903 422.7 904 421.5 905 419.5 906 417.7 907 417.1 908 416.9 909 416.1 910 414.9 911 414.0 912 413.7 913 413.1 914 411.2 915 408.1 916 405.3 917 403.7 918 403.0 919 402.0 920 400.5 921 399.2 922 398.6 923 398.2 924 397.0 925 396.8 926 396.8 927 396.8 928 396.8 929 396.8 930 396.8 931 396.8 932 396.8 933 396.8 934 396.8 935 396.8 936 396.8 937 396.8 938 396.8 939 396.8 940 396.8 941 396.8 942 396.8 943 396.8 944 396.8 945 396.8 946 396.8 947 396.8 948 396.8 949 396.8 950 396.8 951 396.8 952 396.8 953 396.8 954 396.8 955 396.8 956 396.8 957 396.8 958 396.8 959 396.8 960 396.8 961 396.8 962 396.8 963 396.8 964 396.8 965 396.8 966 396.8 967 396.8 968 396.8 969 396.8 970 397.5 971 397.4 972 397.4 973 398.4 974 400.3 975 402.0 976 403.3 977 404.8 978 407.1 979 409.6 980 411.0 981 411.0 982 410.7 983 411.4 984 413.1 985 414.8 986 415.8 987 416.8 988 418.5 989 420.6 990 422.0 991 422.3 992 422.5 993 423.8 994 426.5 995 429.4 996 431.6 997 433.4 998 435.4 999 437.8 1000 439.6 1001 440.3 1002 440.4 1003 441.4 1004 443.6 1005 446.1 1006 447.6 1007 448.2 1008 448.8 1009 450.0 1010 451.0 1011 451.3 1012 451.3 1013 452.2 1014 454.5 1015 457.5 1016 459.8 1017 461.0 1018 462.3 1019 464.2 1020 466.3 1021 467.9 1022 469.1 1023 470.8 1024 473.6 1025 476.8 1026 479.1 1027 479.9 1028 480.1 1029 480.9 1030 482.2 1031 483.1 1032 483.6 1033 484.3 1034 486.1 1035 488.5 1036 490.2 1037 490.6 1038 490.5 1039 491.2 1040 492.9 1041 494.6 1042 495.8 1043 497.1 1044 499.0 1045 501.5 1046 503.3 1047 503.5 1048 502.9 1049 502.9 1050 503.8 1051 505.0 1052 505.5 1053 505.6 1054 506.2 1055 507.3 1056 508.0 1057 507.6 1058 506.4 1059 506.1 1060 507.1 1061 508.9 1062 510.3 1063 511.1 1064 512.2 1065 513.8 1066 515.3 1067 515.6 1068 515.2 1069 515.1 1070 516.4 1071 518.2 1072 519.0 1073 519.0 1074 518.9 1075 518.9 1076 518.8 1077 517.8 1078 516.1 1079 514.7 1080 514.7 1081 515.6 1082 516.1 1083 515.5 1084 514.5 1085 514.0 1086 513.9 1087 513.5 1088 512.4 1089 511.6 1090 512.0 1091 513.2 1092 514.0 1093 513.3 1094 511.7 1095 510.4 1096 509.6 1097 508.6 1098 507.0 1099 505.3 1100 504.6 1101 504.8 1102 504.7 1103 503.3 1104 501.0 1105 499.2 1106 498.4 1107 498.0 1108 497.3 1109 496.4 1110 496.3 1111 497.1 1112 497.6 1113 496.8 1114 494.8 1115 493.0 1116 492.1 1117 491.7 1118 490.8 1119 489.2 1120 487.8 1121 487.0 1122 486.0 1123 483.7 1124 480.3 1125 477.1 1126 475.2 1127 474.2 1128 473.1 1129 471.4 1130 469.8 1131 468.9 1132 468.2 1133 466.7 1134 464.2 1135 461.9 1136 460.8 1137 460.8 1138 460.7 1139 459.5 1140 457.9 1141 456.6 1142 455.4 1143 453.4 1144 450.5 1145 447.4 1146 445.6 1147 444.9 1148 444.3 1149 442.7 1150 440.5 1151 438.6 1152 437.3 1153 435.9 1154 433.9 1155 431.8 1156 430.9 1157 431.2 1158 431.6 1159 430.8 1160 429.0 1161 427.1 1162 425.8 1163 424.5 1164 422.5 1165 420.1 1166 418.4 1167 417.8 1168 417.2 1169 415.5 1170 412.6 1171 409.6 1172 407.6 1173 406.2 1174 404.6 1175 402.8 1176 401.7 1177 401.8 1178 402.2 1179 401.8 1180 400.2 1181 398.4 1182 397.7 1183 397.8 1184 397.7 1185 397.2 1186 396.8 1187 396.8 1188 397.2 1189 396.8 1190 396.8 1191 396.8 1192 396.8 1193 396.8 1194 396.8 1195 396.8 1196 396.8 1197 396.8 1198 396.8 1199 396.8 1200 396.8 1201 396.8 1202 396.8 1203 396.8 1204 396.8 1205 396.8 1206 396.8 1207 396.8 1208 396.8 1209 396.8 1210 396.8 1211 396.8 1212 396.8 1213 396.8 1214 396.8 1215 396.8 1216 396.8 1217 396.8 1218 396.8 1219 396.8 1220 396.8 1221 396.8 1222 396.8 1223 396.8 1224 396.8 1225 396.8 1226 396.8 1227 396.8 1228 396.8 1229 398.3 1230 399.3 1231 399.8 1232 400.7 1233 402.7 1234 405.2 1235 406.9 1236 407.1 1237 406.8 1238 407.0 1239 407.9 1240 408.7 1241 409.0 1242 409.6 1243 411.4 1244 413.9 1245 415.9 1246 416.6 1247 416.7 1248 417.5 1249 419.4 1250 421.5 1251 423.1 1252 424.5 1253 426.7 1254 429.3 1255 431.4 1256 432.0 1257 431.8 1258 432.0 1259 433.4 1260 435.2 1261 436.5 1262 437.5 1263 438.9 1264 441.0 1265 442.9 1266 443.8 1267 443.9 1268 444.8 1269 447.2 1270 450.4 1271 453.2 1272 455.3 1273 457.4 1274 460.1 1275 462.6 1276 464.0 1277 464.5 1278 465.3 1279 467.3 1280 470.0 1281 472.1 1282 473.1 1283 473.7 1284 474.7 1285 475.8 1286 476.2 1287 475.9 1288 476.0 1289 477.5 1290 480.0 1291 482.3 1292 483.5 1293 484.1 1294 485.3 1295 487.0 1296 488.3 1297 489.0 1298 489.8 1299 491.6 1300 494.4 1301 496.7 1302 497.7 1303 497.6 1304 497.8 1305 498.5 1306 499.3 1307 499.4 1308 499.5 1309 500.6 1310 502.6 1311 504.5 1312 505.2 1313 504.9 1314 505.0 1315 506.1 1316 507.7 1317 508.9 1318 509.8 1319 511.4 1320 513.7 1321 515.8 1322 516.5 1323 515.9 1324 515.3 1325 515.6 1326 516.4 1327 516.8 1328 516.5 1329 516.3 1330 516.7 1331 517.1 1332 516.5 1333 514.7 1334 513.0 1335 512.6 1336 513.2 1337 513.9 1338 514.0 1339 514.0 1340 514.5 1341 515.4 1342 515.5 1343 514.4 1344 513.3 1345 513.3 1346 514.4 1347 515.4 1348 515.3 1349 514.5 1350 514.0 1351 513.7 1352 512.8 1353 510.9 1354 508.9 1355 507.9 1356 508.3 1357 508.8 1358 508.3 1359 507.1 1360 506.1 1361 505.7 1362 505.3 1363 504.1 1364 502.7 1365 502.2 1366 502.9 1367 503.7 1368 503.3 1369 501.6 1370 499.7 1371 498.3 1372 497.0 1373 495.0 1374 492.6 1375 490.8 1376 490.0 1377 489.5 1378 488.0 1379 485.3 1380 482.4 1381 480.4 1382 479.3 1383 478.0 1384 476.4 1385 475.3 1386 475.3 1387 475.7 1388 475.2 1389 473.4 1390 471.1 1391 469.7 1392 469.2 1393 468.5 1394 467.2 1395 465.7 1396 464.8 1397 464.3 1398 462.8 1399 460.0 1400 456.7 1401 454.3 1402 453.1 1403 452.1 1404 450.6 1405 448.8 1406 447.6 1407 446.9 1408 445.7 1409 443.5 1410 440.8 1411 438.9 1412 438.4 1413 438.2 1414 437.3 1415 435.6 1416 433.9 1417 432.6 1418 431.0 1419 428.3 1420 424.9 1421 422.3 1422 421.1 1423 420.5 1424 419.3 1425 417.2 1426 415.0 1427 413.6 1428 412.4 1429 410.7 1430 408.7 1431 407.4 1432 407.6 1433 408.5 1434 408.8 1435 408.0 1436 406.6 1437 405.8 1438 405.4 1439 404.4 1440 402.8 1441 401.5 1442 401.2 1443 401.6 1444 401.2 1445 399.4 1446 397.0 1447 396.8 1448 396.8 1449 396.8 1450 396.8 1451 396.8 1452 396.8 1453 396.8 1454 396.8 1455 396.8 1456 396.8 1457 396.8 1458 396.8 1459 396.8 1460 396.8 1461 396.8 1462 396.8 1463 396.8 1464 396.8 1465 396.8 1466 396.8 1467 396.8 1468 396.8 1469 396.8 1470 396.8 1471 396.8 1472 396.8 1473 396.8 1474 396.8 1475 396.8 1476 396.8 1477 396.8 1478 396.8 1479 396.8 1480 396.8 1481 396.8 1482 396.8 1483 396.8 1484 397.7 1485 398.1 1486 397.5 1487 397.1 1488 398.0 1489 399.7 1490 401.0 1491 401.3 1492 401.1 1493 401.5 1494 402.1 1495 402.3 1496 401.9 1497 401.8 1498 403.1 1499 405.7 1500 408.1 1501 409.4 1502 410.2 1503 411.3 1504 413.0 1505 414.5 1506 415.4 1507 416.2 1508 418.0 1509 420.8 1510 423.3 1511 424.5 1512 424.7 1513 425.0 1514 426.1 1515 427.4 1516 428.3 1517 429.1 1518 430.8 1519 433.6 1520 436.5 1521 438.2 1522 439.0 1523 439.9 1524 441.9 1525 444.5 1526 446.7 1527 448.5 1528 450.8 1529 453.8 1530 456.6 1531 458.2 1532 458.4 1533 458.3 1534 459.2 1535 460.8 1536 462.2 1537 462.9 1538 463.7 1539 465.2 1540 466.9" stroke="#c4df66" stroke-width="1.3" fill="none" stroke-linejoin="round"/><rect x="408.5" y="396.5" width="1132.0" height="123.0" fill="none" stroke="#a9a9a9" stroke-width="1"/><path d="M404 410.5 H411.5" stroke="#a9a9a9" stroke-width="1"/><path d="M404 454.5 H411.5" stroke="#a9a9a9" stroke-width="1"/><path d="M404 499.5 H411.5" stroke="#a9a9a9" stroke-width="1"/></svg>
<div class="t" style="left:-197.00px;width:600px;text-align:right;top:406.23px;font-size:9.3px;color:#f0f0f0;">0.0005</div>
<div class="t" style="left:-197.00px;width:600px;text-align:right;top:450.73px;font-size:9.3px;color:#f0f0f0;">0</div>
<div class="t" style="left:-197.00px;width:600px;text-align:right;top:495.23px;font-size:9.3px;color:#f0f0f0;">-0.0005</div>
<div class="t" style="left:171.60px;width:600px;text-align:center;top:523.03px;font-size:9.3px;color:#f0f0f0;">0:07.490</div>
<div class="t" style="left:320.03px;width:600px;text-align:center;top:523.03px;font-size:9.3px;color:#f0f0f0;">0:07.500</div>
<div class="t" style="left:468.46px;width:600px;text-align:center;top:523.03px;font-size:9.3px;color:#f0f0f0;">0:07.510</div>
<div class="t" style="left:616.89px;width:600px;text-align:center;top:523.03px;font-size:9.3px;color:#f0f0f0;">0:07.520</div>
<div class="t" style="left:765.32px;width:600px;text-align:center;top:523.03px;font-size:9.3px;color:#f0f0f0;">0:07.530</div>
<div class="t" style="left:913.75px;width:600px;text-align:center;top:523.03px;font-size:9.3px;color:#f0f0f0;">0:07.540</div>
<div class="t" style="left:1062.18px;width:600px;text-align:center;top:523.03px;font-size:9.3px;color:#f0f0f0;">0:07.550</div>
<div class="t" style="left:1210.61px;width:600px;text-align:center;top:523.03px;font-size:9.3px;color:#f0f0f0;">0:07.560</div>
<div class="t" style="left:625.60px;width:600px;text-align:center;top:384.37px;font-size:10.2px;color:#b6d566;font-weight:bold;">Acceleration_single_interation [g/s]</div>
<svg class="a" style="left:926px;top:470px;" width="48" height="49" viewBox="0 0 48 49"><rect x="0" y="0" width="48" height="49" rx="10" fill="#8a8a8a" fill-opacity="0.26"/><path d="M11.5 17.0 L19.0 24.5 L11.5 32.0 M21.0 17.0 L28.5 24.5 L21.0 32.0" stroke="#9d9d9d" stroke-width="3.4" fill="none"/></svg>
<svg class="a" style="left:408px;top:520.3px;" width="23.5" height="14" viewBox="0 0 23.5 14"><rect x="0" y="0" width="23.5" height="14" rx="3.5" fill="#f5a50f"/><path d="M6 7 L16.5 2.2 V11.8 Z" fill="#fff"/></svg>
<svg class="a" style="left:0px;top:0px;" width="1560" height="870" viewBox="0 0 1560 870"><path d="M524.5 597.5 V835.5" stroke="#a9a9a9" stroke-width="1"/><path d="M706.5 597.5 V835.5" stroke="#a9a9a9" stroke-width="1"/><path d="M888.5 597.5 V835.5" stroke="#a9a9a9" stroke-width="1"/><path d="M1070.5 597.5 V835.5" stroke="#a9a9a9" stroke-width="1"/><path d="M1252.5 597.5 V835.5" stroke="#a9a9a9" stroke-width="1"/><path d="M1433.5 597.5 V835.5" stroke="#a9a9a9" stroke-width="1"/><path d="M412.5 629.5 H1540.5" stroke="#adadad" stroke-width="1" stroke-dasharray="4 5"/><path d="M412.5 680.5 H1540.5" stroke="#adadad" stroke-width="1" stroke-dasharray="4 5"/><path d="M412.5 731.5 H1540.5" stroke="#adadad" stroke-width="1" stroke-dasharray="4 5"/><path d="M412.5 782.5 H1540.5" stroke="#adadad" stroke-width="1" stroke-dasharray="4 5"/><path d="M412.5 833.5 H1540.5" stroke="#adadad" stroke-width="1" stroke-dasharray="4 5"/><path d="M409 817.0 H409.5 V817.0 V783.7 H410.5 V783.7 V746.3 H411.5 V746.3 V708.2 H412.5 V708.2 V672.8 H413.5 V672.8 V642.8 H414.5 V642.8 V637.7 V658.5 H415.5 V658.5 V689.4 H416.5 V689.4 V724.1 H417.5 V724.1 V760.1 H418.5 V760.1 V794.5 H419.5 V794.5 V825.0 H420.5 V825.0 V835.2 V835.2 H421.5 V835.2 V807.1 H422.5 V807.1 V773.3 H423.5 V773.3 V736.9 H424.5 V736.9 V701.3 H425.5 V701.3 V669.2 H426.5 V669.2 V645.3 V648.1 H427.5 V648.1 V677.2 H428.5 V677.2 V711.9 H429.5 V711.9 V749.6 H430.5 V749.6 V787.2 H431.5 V787.2 V821.5 H432.5 V821.5 V835.2 H433.5 V835.2 V835.2 V826.3 H434.5 V826.3 V796.0 H435.5 V796.0 V762.3 H436.5 V762.3 V727.8 H437.5 V727.8 V695.2 H438.5 V695.2 V666.6 H439.5 V666.6 V652.5 V663.0 H440.5 V663.0 V692.3 H441.5 V692.3 V726.2 H442.5 V726.2 V762.2 H443.5 V762.2 V797.0 H444.5 V797.0 V827.8 H445.5 V827.8 V835.2 V835.2 H446.5 V835.2 V811.8 H447.5 V811.8 V780.5 H448.5 V780.5 V746.7 H449.5 V746.7 V712.9 H450.5 V712.9 V681.8 H451.5 V681.8 V655.1 H452.5 V655.1 V648.9 V667.0 H453.5 V667.0 V696.4 H454.5 V696.4 V729.7 H455.5 V729.7 V764.1 H456.5 V764.1 V796.9 H457.5 V796.9 V825.6 H458.5 V825.6 V835.2 V829.2 H459.5 V829.2 V799.7 H460.5 V799.7 V765.5 H461.5 V765.5 V729.1 H462.5 V729.1 V693.3 H463.5 V693.3 V661.0 H464.5 V661.0 V635.1 V636.1 H465.5 V636.1 V662.9 H466.5 V662.9 V694.9 H467.5 V694.9 V730.1 H468.5 V730.1 V765.6 H469.5 V765.6 V798.7 H470.5 V798.7 V827.0 H471.5 V827.0 V834.4 V816.4 H472.5 V816.4 V786.1 H473.5 V786.1 V751.7 H474.5 V751.7 V716.0 H475.5 V716.0 V681.8 H476.5 V681.8 V651.7 H477.5 V651.7 V635.1 V643.3 H478.5 V643.3 V670.5 H479.5 V670.5 V702.0 H480.5 V702.0 V736.0 H481.5 V736.0 V769.9 H482.5 V769.9 V801.1 H483.5 V801.1 V827.8 H484.5 V827.8 V833.8 V813.4 H485.5 V813.4 V780.4 H486.5 V780.4 V743.4 H487.5 V743.4 V705.3 H488.5 V705.3 V669.6 H489.5 V669.6 V638.9 H490.5 V638.9 V630.0 V647.0 H491.5 V647.0 V677.6 H492.5 V677.6 V712.3 H493.5 V712.3 V748.3 H494.5 V748.3 V782.4 H495.5 V782.4 V812.0 H496.5 V812.0 V823.9 V810.4 H497.5 V810.4 V780.4 H498.5 V780.4 V746.1 H499.5 V746.1 V709.7 H500.5 V709.7 V674.0 H501.5 V674.0 V641.6 H502.5 V641.6 V614.4 H503.5 V614.4 V613.7 V640.6 H504.5 V640.6 V673.9 H505.5 V673.9 V710.6 H506.5 V710.6 V747.7 H507.5 V747.7 V782.0 H508.5 V782.0 V811.0 H509.5 V811.0 V815.8 V794.9 H510.5 V794.9 V764.5 H511.5 V764.5 V730.3 H512.5 V730.3 V694.9 H513.5 V694.9 V661.0 H514.5 V661.0 V631.0 H515.5 V631.0 V612.7 V619.5 H516.5 V619.5 V647.4 H517.5 V647.4 V680.1 H518.5 V680.1 V715.4 H519.5 V715.4 V750.9 H520.5 V750.9 V783.9 H521.5 V783.9 V812.4 H522.5 V812.4 V822.0 V806.3 H523.5 V806.3 V775.9 H524.5 V775.9 V741.3 H525.5 V741.3 V705.5 H526.5 V705.5 V671.5 H527.5 V671.5 V642.3 H528.5 V642.3 V632.0 V647.6 H529.5 V647.6 V678.9 H530.5 V678.9 V714.6 H531.5 V714.6 V751.8 H532.5 V751.8 V787.0 H533.5 V787.0 V817.5 H534.5 V817.5 V829.1 V815.6 H535.5 V815.6 V787.1 H536.5 V787.1 V754.4 H537.5 V754.4 V719.9 H538.5 V719.9 V685.9 H539.5 V685.9 V654.9 H540.5 V654.9 V628.8 H541.5 V628.8 V626.4 V648.6 H542.5 V648.6 V677.8 H543.5 V677.8 V710.4 H544.5 V710.4 V744.1 H545.5 V744.1 V776.5 H546.5 V776.5 V805.4 H547.5 V805.4 V825.9 V821.7 H548.5 V821.7 V791.7 H549.5 V791.7 V756.1 H550.5 V756.1 V717.7 H551.5 V717.7 V679.9 H552.5 V679.9 V646.2 H553.5 V646.2 V623.9 V629.1 H554.5 V629.1 V657.4 H555.5 V657.4 V690.8 H556.5 V690.8 V727.0 H557.5 V727.0 V763.3 H558.5 V763.3 V796.8 H559.5 V796.8 V825.2 H560.5 V825.2 V831.0 V810.9 H561.5 V810.9 V779.9 H562.5 V779.9 V745.1 H563.5 V745.1 V709.2 H564.5 V709.2 V675.2 H565.5 V675.2 V645.7 H566.5 V645.7 V633.6 V646.0 H567.5 V646.0 V674.0 H568.5 V674.0 V706.1 H569.5 V706.1 V740.1 H570.5 V740.1 V773.4 H571.5 V773.4 V803.3 H572.5 V803.3 V827.3 V826.1 H573.5 V826.1 V797.8 H574.5 V797.8 V763.9 H575.5 V763.9 V726.7 H576.5 V726.7 V689.3 H577.5 V689.3 V654.8 H578.5 V654.8 V625.7 H579.5 V625.7 V621.3 V643.1 H580.5 V643.1 V674.2 H581.5 V674.2 V709.1 H582.5 V709.1 V745.1 H583.5 V745.1 V779.6 H584.5 V779.6 V809.9 H585.5 V809.9 V827.1 V818.9 H586.5 V818.9 V790.4 H587.5 V790.4 V757.0 H588.5 V757.0 V721.4 H589.5 V721.4 V686.4 H590.5 V686.4 V655.1 H591.5 V655.1 V632.6 V636.0 H592.5 V636.0 V664.3 H593.5 V664.3 V697.7 H594.5 V697.7 V734.2 H595.5 V734.2 V771.0 H596.5 V771.0 V805.1 H597.5 V805.1 V834.5 H598.5 V834.5 V835.2 V826.1 H599.5 V826.1 V796.9 H600.5 V796.9 V763.9 H601.5 V763.9 V729.6 H602.5 V729.6 V696.9 H603.5 V696.9 V668.3 H604.5 V668.3 V655.0 V665.6 H605.5 V665.6 V693.1 H606.5 V693.1 V724.9 H607.5 V724.9 V758.7 H608.5 V758.7 V791.8 H609.5 V791.8 V821.7 H610.5 V821.7 V835.2 V835.2 H611.5 V835.2 V817.5 H612.5 V817.5 V784.8 H613.5 V784.8 V748.9 H614.5 V748.9 V712.7 H615.5 V712.7 V679.2 H616.5 V679.2 V650.7 H617.5 V650.7 V644.8 V664.8 H618.5 V664.8 V696.1 H619.5 V696.1 V731.4 H620.5 V731.4 V767.4 H621.5 V767.4 V800.9 H622.5 V800.9 V829.4 H623.5 V829.4 V835.2 V815.3 H624.5 V815.3 V784.6 H625.5 V784.6 V749.9 H626.5 V749.9 V713.7 H627.5 V713.7 V678.6 H628.5 V678.6 V647.0 H629.5 V647.0 V622.4 V624.0 H630.5 V624.0 V650.4 H631.5 V650.4 V681.9 H632.5 V681.9 V716.4 H633.5 V716.4 V751.2 H634.5 V751.2 V783.5 H635.5 V783.5 V811.0 H636.5 V811.0 V817.3 V798.8 H637.5 V798.8 V768.8 H638.5 V768.8 V734.9 H639.5 V734.9 V699.8 H640.5 V699.8 V666.3 H641.5 V666.3 V636.8 H642.5 V636.8 V621.3 V630.4 H643.5 V630.4 V657.8 H644.5 V657.8 V689.6 H645.5 V689.6 V723.7 H646.5 V723.7 V757.8 H647.5 V757.8 V789.4 H648.5 V789.4 V816.5 H649.5 V816.5 V824.1 V805.6 H650.5 V805.6 V773.1 H651.5 V773.1 V736.3 H652.5 V736.3 V698.4 H653.5 V698.4 V662.8 H654.5 V662.8 V632.5 H655.5 V632.5 V624.4 V641.3 H656.5 V641.3 V670.1 H657.5 V670.1 V702.8 H658.5 V702.8 V737.0 H659.5 V737.0 V770.0 H660.5 V770.0 V799.6 H661.5 V799.6 V820.4 V816.4 H662.5 V816.4 V787.8 H663.5 V787.8 V753.9 H664.5 V753.9 V717.1 H665.5 V717.1 V680.6 H666.5 V680.6 V647.4 H667.5 V647.4 V619.8 H668.5 V619.8 V646.7 H669.5 V646.7 V679.1 H670.5 V679.1 V714.7 H671.5 V714.7 V750.5 H672.5 V750.5 V783.6 H673.5 V783.6 V811.6 H674.5 V811.6 V815.8 V795.2 H675.5 V795.2 V765.7 H676.5 V765.7 V732.6 H677.5 V732.6 V698.4 H678.5 V698.4 V665.6 H679.5 V665.6 V636.7 H680.5 V636.7 V619.8 V627.2 H681.5 V627.2 V654.8 H682.5 V654.8 V686.9 H683.5 V686.9 V721.6 H684.5 V721.6 V756.4 H685.5 V756.4 V788.6 H686.5 V788.6 V816.3 H687.5 V816.3 V824.4 V806.9 H688.5 V806.9 V775.5 H689.5 V775.5 V739.9 H690.5 V739.9 V703.1 H691.5 V703.1 V668.5 H692.5 V668.5 V638.7 H693.5 V638.7 V629.0 V644.6 H694.5 V644.6 V674.0 H695.5 V674.0 V707.6 H696.5 V707.6 V743.0 H697.5 V743.0 V777.4 H698.5 V777.4 V808.4 H699.5 V808.4 V832.7 V831.2 H700.5 V831.2 V803.1 H701.5 V803.1 V769.7 H702.5 V769.7 V733.0 H703.5 V733.0 V696.4 H704.5 V696.4 V662.8 H705.5 V662.8 V634.8 H706.5 V634.8 V633.1 V656.9 H707.5 V656.9 V687.4 H708.5 V687.4 V721.3 H709.5 V721.3 V756.1 H710.5 V756.1 V789.0 H711.5 V789.0 V817.8 H712.5 V817.8 V831.7 V820.4 H713.5 V820.4 V789.6 H714.5 V789.6 V754.1 H715.5 V754.1 V716.4 H716.5 V716.4 V679.8 H717.5 V679.8 V647.2 H718.5 V647.2 V626.4 V632.1 H719.5 V632.1 V659.2 H720.5 V659.2 V691.0 H721.5 V691.0 V725.5 H722.5 V725.5 V760.3 H723.5 V760.3 V792.9 H724.5 V792.9 V821.1 H725.5 V821.1 V832.5 V818.9 H726.5 V818.9 V788.9 H727.5 V788.9 V754.5 H728.5 V754.5 V718.7 H729.5 V718.7 V684.6 H730.5 V684.6 V655.1 H731.5 V655.1 V643.8 V657.6 H732.5 V657.6 V687.2 H733.5 V687.2 V721.0 H734.5 V721.0 V756.6 H735.5 V756.6 V791.2 H736.5 V791.2 V821.9 H737.5 V821.9 V835.2 V835.2 H738.5 V835.2 V810.9 H739.5 V810.9 V779.1 H740.5 V779.1 V744.7 H741.5 V744.7 V710.3 H742.5 V710.3 V678.8 H743.5 V678.8 V652.1 H744.5 V652.1 V648.9 V672.6 H745.5 V672.6 V705.7 H746.5 V705.7 V742.5 H747.5 V742.5 V779.9 H748.5 V779.9 V814.5 H749.5 V814.5 V835.2 H750.5 V835.2 V835.2 V829.1 H751.5 V829.1 V799.4 H752.5 V799.4 V765.9 H753.5 V765.9 V731.2 H754.5 V731.2 V697.7 H755.5 V697.7 V667.8 H756.5 V667.8 V646.8 V650.8 H757.5 V650.8 V677.4 H758.5 V677.4 V708.8 H759.5 V708.8 V742.9 H760.5 V742.9 V777.1 H761.5 V777.1 V808.5 H762.5 V808.5 V835.1 H763.5 V835.1 V835.2 V817.5 H764.5 V817.5 V785.7 H765.5 V785.7 V750.0 H766.5 V750.0 V713.2 H767.5 V713.2 V678.4 H768.5 V678.4 V648.0 H769.5 V648.0 V634.6 V645.5 H770.5 V645.5 V672.0 H771.5 V672.0 V702.4 H772.5 V702.4 V734.9 H773.5 V734.9 V767.0 H774.5 V767.0 V796.4 H775.5 V796.4 V821.4 H776.5 V821.4 V825.6 V801.6 H777.5 V801.6 V766.3 H778.5 V766.3 V726.9 H779.5 V726.9 V686.7 H780.5 V686.7 V649.5 H781.5 V649.5 V617.9 H782.5 V617.9 V612.2 V631.0 H783.5 V631.0 V659.3 H784.5 V659.3 V691.1 H785.5 V691.1 V724.1 H786.5 V724.1 V755.6 H787.5 V755.6 V783.6 H788.5 V783.6 V800.5 V793.1 H789.5 V793.1 V762.6 H790.5 V762.6 V726.9 H791.5 V726.9 V688.5 H792.5 V688.5 V650.7 H793.5 V650.7 V616.8 H794.5 V616.8 V597.8 V597.8 H795.5 V597.8 V622.1 H796.5 V622.1 V656.0 H797.5 V656.0 V692.9 H798.5 V692.9 V729.7 H799.5 V729.7 V763.3 H800.5 V763.3 V791.3 H801.5 V791.3 V792.3 V767.6 H802.5 V767.6 V736.9 H803.5 V736.9 V702.8 H804.5 V702.8 V667.9 H805.5 V667.9 V634.8 H806.5 V634.8 V605.8 H807.5 V605.8 V597.8 V602.2 H808.5 V602.2 V633.5 H809.5 V633.5 V669.8 H810.5 V669.8 V708.4 H811.5 V708.4 V746.0 H812.5 V746.0 V779.5 H813.5 V779.5 V802.3 V797.9 H814.5 V797.9 V771.6 H815.5 V771.6 V740.5 H816.5 V740.5 V706.7 H817.5 V706.7 V672.8 H818.5 V672.8 V641.4 H819.5 V641.4 V614.6 H820.5 V614.6 V608.1 V627.6 H821.5 V627.6 V659.6 H822.5 V659.6 V695.9 H823.5 V695.9 V733.4 H824.5 V733.4 V769.2 H825.5 V769.2 V800.4 H826.5 V800.4 V815.4 V804.9 H827.5 V804.9 V777.0 H828.5 V777.0 V744.7 H829.5 V744.7 V710.3 H830.5 V710.3 V676.6 H831.5 V676.6 V646.1 H832.5 V646.1 V621.3 V622.0 H833.5 V622.0 V648.3 H834.5 V648.3 V679.5 H835.5 V679.5 V713.9 H836.5 V713.9 V749.1 H837.5 V749.1 V782.4 H838.5 V782.4 V811.5 H839.5 V811.5 V826.0 V815.4 H840.5 V815.4 V785.7 H841.5 V785.7 V751.2 H842.5 V751.2 V714.7 H843.5 V714.7 V679.4 H844.5 V679.4 V648.3 H845.5 V648.3 V631.0 V639.9 H846.5 V639.9 V670.2 H847.5 V670.2 V705.5 H848.5 V705.5 V743.2 H849.5 V743.2 V779.8 H850.5 V779.8 V812.4 H851.5 V812.4 V832.8 V827.1 H852.5 V827.1 V801.6 H853.5 V801.6 V771.7 H854.5 V771.7 V739.3 H855.5 V739.3 V706.8 H856.5 V706.8 V676.6 H857.5 V676.6 V650.6 H858.5 V650.6 V642.8 V660.5 H859.5 V660.5 V693.0 H860.5 V693.0 V729.8 H861.5 V729.8 V767.9 H862.5 V767.9 V804.0 H863.5 V804.0 V835.2 H864.5 V835.2 V835.2 V832.9 H865.5 V832.9 V805.1 H866.5 V805.1 V773.4 H867.5 V773.4 V739.7 H868.5 V739.7 V706.8 H869.5 V706.8 V676.9 H870.5 V676.9 V651.8 H871.5 V651.8 V650.9 V674.3 H872.5 V674.3 V703.3 H873.5 V703.3 V735.5 H874.5 V735.5 V768.7 H875.5 V768.7 V800.4 H876.5 V800.4 V828.5 H877.5 V828.5 V835.2 V835.2 H878.5 V835.2 V810.7 H879.5 V810.7 V775.4 H880.5 V775.4 V737.4 H881.5 V737.4 V700.4 H882.5 V700.4 V667.5 H883.5 V667.5 V647.4 V653.7 H884.5 V653.7 V680.8 H885.5 V680.8 V712.5 H886.5 V712.5 V746.9 H887.5 V746.9 V781.2 H888.5 V781.2 V813.0 H889.5 V813.0 V835.2 H890.5 V835.2 V835.2 V827.7 H891.5 V827.7 V795.4 H892.5 V795.4 V759.0 H893.5 V759.0 V721.4 H894.5 V721.4 V685.9 H895.5 V685.9 V655.3 H896.5 V655.3 V644.3 V659.7 H897.5 V659.7 V691.0 H898.5 V691.0 V726.9 H899.5 V726.9 V764.1 H900.5 V764.1 V799.2 H901.5 V799.2 V829.4 H902.5 V829.4 V835.2 V823.7 H903.5 V823.7 V794.8 H904.5 V794.8 V761.9 H905.5 V761.9 V727.1 H906.5 V727.1 V693.0 H907.5 V693.0 V661.9 H908.5 V661.9 V635.6 H909.5 V635.6 V633.1 V655.6 H910.5 V655.6 V685.8 H911.5 V685.8 V719.5 H912.5 V719.5 V753.8 H913.5 V753.8 V785.8 H914.5 V785.8 V813.3 H915.5 V813.3 V821.0 V803.7 H916.5 V803.7 V773.1 H917.5 V773.1 V738.5 H918.5 V738.5 V702.3 H919.5 V702.3 V667.4 H920.5 V667.4 V636.2 H921.5 V636.2 V615.2 V620.2 H922.5 V620.2 V648.7 H923.5 V648.7 V682.3 H924.5 V682.3 V718.7 H925.5 V718.7 V754.9 H926.5 V754.9 V788.0 H927.5 V788.0 V815.9 H928.5 V815.9 V818.2 V794.5 H929.5 V794.5 V763.3 H930.5 V763.3 V728.6 H931.5 V728.6 V693.1 H932.5 V693.1 V659.6 H933.5 V659.6 V630.5 H934.5 V630.5 V618.3 V631.6 H935.5 V631.6 V662.1 H936.5 V662.1 V697.2 H937.5 V697.2 V734.3 H938.5 V734.3 V770.2 H939.5 V770.2 V802.1 H940.5 V802.1 V822.5 V816.9 H941.5 V816.9 V789.6 H942.5 V789.6 V757.5 H943.5 V757.5 V722.7 H944.5 V722.7 V688.1 H945.5 V688.1 V656.2 H946.5 V656.2 V629.2 H947.5 V629.2 V624.9 V646.6 H948.5 V646.6 V678.1 H949.5 V678.1 V713.3 H950.5 V713.3 V749.6 H951.5 V749.6 V783.7 H952.5 V783.7 V813.4 H953.5 V813.4 V825.0 V811.6 H954.5 V811.6 V782.5 H955.5 V782.5 V749.1 H956.5 V749.1 V713.9 H957.5 V713.9 V679.6 H958.5 V679.6 V648.9 H959.5 V648.9 V626.4 V629.6 H960.5 V629.6 V657.9 H961.5 V657.9 V691.4 H962.5 V691.4 V727.9 H963.5 V727.9 V764.2 H964.5 V764.2 V797.4 H965.5 V797.4 V825.1 H966.5 V825.1 V826.2 V802.0 H967.5 V802.0 V771.8 H968.5 V771.8 V738.3 H969.5 V738.3 V704.0 H970.5 V704.0 V671.5 H971.5 V671.5 V643.1 H972.5 V643.1 V629.5 V641.4 H973.5 V641.4 V673.0 H974.5 V673.0 V709.6 H975.5 V709.6 V748.1 H976.5 V748.1 V785.2 H977.5 V785.2 V817.6 H978.5 V817.6 V833.3 V823.2 H979.5 V823.2 V795.8 H980.5 V795.8 V764.1 H981.5 V764.1 V730.1 H982.5 V730.1 V696.4 H983.5 V696.4 V665.4 H984.5 V665.4 V638.9 H985.5 V638.9 V633.1 V652.4 H986.5 V652.4 V682.9 H987.5 V682.9 V717.4 H988.5 V717.4 V753.0 H989.5 V753.0 V787.1 H990.5 V787.1 V816.9 H991.5 V816.9 V832.4 V822.5 H992.5 V822.5 V793.0 H993.5 V793.0 V758.6 H994.5 V758.6 V721.9 H995.5 V721.9 V685.9 H996.5 V685.9 V653.5 H997.5 V653.5 V628.0 V629.4 H998.5 V629.4 V655.9 H999.5 V655.9 V687.4 H1000.5 V687.4 V722.0 H1001.5 V722.0 V757.3 H1002.5 V757.3 V790.6 H1003.5 V790.6 V819.6 H1004.5 V819.6 V832.8 V820.8 H1005.5 V820.8 V790.9 H1006.5 V790.9 V756.3 H1007.5 V756.3 V719.9 H1008.5 V719.9 V684.9 H1009.5 V684.9 V654.1 H1010.5 V654.1 V637.7 V646.7 H1011.5 V646.7 V674.9 H1012.5 V674.9 V707.6 H1013.5 V707.6 V742.8 H1014.5 V742.8 V777.6 H1015.5 V777.6 V809.5 H1016.5 V809.5 V835.2 H1017.5 V835.2 V835.2 V817.2 H1018.5 V817.2 V785.6 H1019.5 V785.6 V750.4 H1020.5 V750.4 V714.5 H1021.5 V714.5 V680.9 H1022.5 V680.9 V652.2 H1023.5 V652.2 V644.3 V662.6 H1024.5 V662.6 V694.6 H1025.5 V694.6 V730.8 H1026.5 V730.8 V768.1 H1027.5 V768.1 V803.1 H1028.5 V803.1 V832.9 H1029.5 V832.9 V835.2 V825.0 H1030.5 V825.0 V797.3 H1031.5 V797.3 V766.0 H1032.5 V766.0 V733.1 H1033.5 V733.1 V701.0 H1034.5 V701.0 V671.9 H1035.5 V671.9 V647.6 H1036.5 V647.6 V647.4 V675.1 H1037.5 V675.1 V708.9 H1038.5 V708.9 V746.0 H1039.5 V746.0 V783.3 H1040.5 V783.3 V817.4 H1041.5 V817.4 V835.2 H1042.5 V835.2 V835.2 V823.6 H1043.5 V823.6 V792.9 H1044.5 V792.9 V758.7 H1045.5 V758.7 V723.6 H1046.5 V723.6 V690.0 H1047.5 V690.0 V660.4 H1048.5 V660.4 V642.8 V649.9 H1049.5 V649.9 V677.5 H1050.5 V677.5 V709.7 H1051.5 V709.7 V744.4 H1052.5 V744.4 V778.8 H1053.5 V778.8 V810.3 H1054.5 V810.3 V835.2 H1055.5 V835.2 V835.2 V815.0 H1056.5 V815.0 V782.7 H1057.5 V782.7 V746.8 H1058.5 V746.8 V710.1 H1059.5 V710.1 V675.7 H1060.5 V675.7 V646.1 H1061.5 V646.1 V636.1 V651.6 H1062.5 V651.6 V681.7 H1063.5 V681.7 V715.9 H1064.5 V715.9 V751.6 H1065.5 V751.6 V785.9 H1066.5 V785.9 V816.0 H1067.5 V816.0 V831.6 V822.4 H1068.5 V822.4 V794.3 H1069.5 V794.3 V761.8 H1070.5 V761.8 V727.0 H1071.5 V727.0 V692.6 H1072.5 V692.6 V661.3 H1073.5 V661.3 V634.9 H1074.5 V634.9 V633.1 V658.8 H1075.5 V658.8 V692.3 H1076.5 V692.3 V729.5 H1077.5 V729.5 V766.8 H1078.5 V766.8 V800.9 H1079.5 V800.9 V829.3 H1080.5 V829.3 V829.9 V806.5 H1081.5 V806.5 V777.9 H1082.5 V777.9 V746.1 H1083.5 V746.1 V713.4 H1084.5 V713.4 V682.1 H1085.5 V682.1 V654.3 H1086.5 V654.3 V636.1 V641.9 H1087.5 V641.9 V670.8 H1088.5 V670.8 V704.8 H1089.5 V704.8 V741.5 H1090.5 V741.5 V777.6 H1091.5 V777.6 V810.1 H1092.5 V810.1 V834.0 V831.4 H1093.5 V831.4 V805.8 H1094.5 V805.8 V775.5 H1095.5 V775.5 V742.4 H1096.5 V742.4 V708.8 H1097.5 V708.8 V677.3 H1098.5 V677.3 V650.0 H1099.5 V650.0 V639.2 V653.1 H1100.5 V653.1 V683.6 H1101.5 V683.6 V718.5 H1102.5 V718.5 V755.0 H1103.5 V755.0 V789.5 H1104.5 V789.5 V819.4 H1105.5 V819.4 V830.4 V816.7 H1106.5 V816.7 V788.7 H1107.5 V788.7 V756.7 H1108.5 V756.7 V722.8 H1109.5 V722.8 V689.4 H1110.5 V689.4 V658.8 H1111.5 V658.8 V632.9 H1112.5 V632.9 V629.5 V649.7 H1113.5 V649.7 V677.8 H1114.5 V677.8 V709.3 H1115.5 V709.3 V741.9 H1116.5 V741.9 V773.0 H1117.5 V773.0 V800.5 H1118.5 V800.5 V816.9 V809.3 H1119.5 V809.3 V779.3 H1120.5 V779.3 V744.2 H1121.5 V744.2 V706.7 H1122.5 V706.7 V669.8 H1123.5 V669.8 V636.9 H1124.5 V636.9 V613.7 V617.4 H1125.5 V617.4 V643.6 H1126.5 V643.6 V674.7 H1127.5 V674.7 V708.5 H1128.5 V708.5 V742.4 H1129.5 V742.4 V773.8 H1130.5 V773.8 V800.5 H1131.5 V800.5 V806.3 V786.8 H1132.5 V786.8 V756.1 H1133.5 V756.1 V721.4 H1134.5 V721.4 V685.6 H1135.5 V685.6 V651.6 H1136.5 V651.6 V622.0 H1137.5 V622.0 V608.6 V619.8 H1138.5 V619.8 V647.5 H1139.5 V647.5 V679.4 H1140.5 V679.4 V713.4 H1141.5 V713.4 V747.2 H1142.5 V747.2 V778.3 H1143.5 V778.3 V804.9 H1144.5 V804.9 V810.7 V789.9 H1145.5 V789.9 V756.7 H1146.5 V756.7 V719.5 H1147.5 V719.5 V681.3 H1148.5 V681.3 V645.9 H1149.5 V645.9 V615.8 H1150.5 V615.8 V610.1 V631.5 H1151.5 V631.5 V664.2 H1152.5 V664.2 V700.9 H1153.5 V700.9 V738.4 H1154.5 V738.4 V773.2 H1155.5 V773.2 V802.8 H1156.5 V802.8 V808.7 V789.8 H1157.5 V789.8 V760.8 H1158.5 V760.8 V728.1 H1159.5 V728.1 V694.0 H1160.5 V694.0 V660.9 H1161.5 V660.9 V631.3 H1162.5 V631.3 V608.6 V610.8 H1163.5 V610.8 V638.4 H1164.5 V638.4 V671.2 H1165.5 V671.2 V707.1 H1166.5 V707.1 V743.3 H1167.5 V743.3 V776.7 H1168.5 V776.7 V805.3 H1169.5 V805.3 V811.5 V792.8 H1170.5 V792.8 V763.1 H1171.5 V763.1 V729.7 H1172.5 V729.7 V695.0 H1173.5 V695.0 V662.0 H1174.5 V662.0 V633.0 H1175.5 V633.0 V618.3 V628.9 H1176.5 V628.9 V659.8 H1177.5 V659.8 V695.8 H1178.5 V695.8 V733.8 H1179.5 V733.8 V770.7 H1180.5 V770.7 V803.2 H1181.5 V803.2 V821.5 V813.8 H1182.5 V813.8 V787.4 H1183.5 V787.4 V756.5 H1184.5 V756.5 V723.3 H1185.5 V723.3 V690.1 H1186.5 V690.1 V659.4 H1187.5 V659.4 V633.1 H1188.5 V633.1 V626.4 V644.4 H1189.5 V644.4 V674.4 H1190.5 V674.4 V708.2 H1191.5 V708.2 V743.5 H1192.5 V743.5 V777.3 H1193.5 V777.3 V807.2 H1194.5 V807.2 V824.9 V817.3 H1195.5 V817.3 V787.8 H1196.5 V787.8 V753.4 H1197.5 V753.4 V716.4 H1198.5 V716.4 V679.9 H1199.5 V679.9 V646.8 H1200.5 V646.8 V619.8 V620.3 H1201.5 V620.3 V648.4 H1202.5 V648.4 V682.2 H1203.5 V682.2 V719.3 H1204.5 V719.3 V756.4 H1205.5 V756.4 V790.3 H1206.5 V790.3 V818.4 H1207.5 V818.4 V819.1 V794.6 H1208.5 V794.6 V764.6 H1209.5 V764.6 V731.4 H1210.5 V731.4 V697.2 H1211.5 V697.2 V664.7 H1212.5 V664.7 V636.1 H1213.5 V636.1 V619.8 V627.9 H1214.5 V627.9 V656.4 H1215.5 V656.4 V689.5 H1216.5 V689.5 V725.2 H1217.5 V725.2 V760.7 H1218.5 V760.7 V793.4 H1219.5 V793.4 V821.1 H1220.5 V821.1 V825.8 V804.9 H1221.5 V804.9 V774.0 H1222.5 V774.0 V739.3 H1223.5 V739.3 V703.8 H1224.5 V703.8 V670.5 H1225.5 V670.5 V641.9 H1226.5 V641.9 V633.1 V649.4 H1227.5 V649.4 V679.5 H1228.5 V679.5 V713.8 H1229.5 V713.8 V749.6 H1230.5 V749.6 V784.0 H1231.5 V784.0 V814.4 H1232.5 V814.4 V831.9 V824.2 H1233.5 V824.2 V796.5 H1234.5 V796.5 V764.1 H1235.5 V764.1 V729.3 H1236.5 V729.3 V694.9 H1237.5 V694.9 V663.5 H1238.5 V663.5 V637.3 H1239.5 V637.3 V636.1 V661.1 H1240.5 V661.1 V692.7 H1241.5 V692.7 V727.6 H1242.5 V727.6 V763.0 H1243.5 V763.0 V796.0 H1244.5 V796.0 V824.1 H1245.5 V824.1 V831.0 V812.4 H1246.5 V812.4 V781.8 H1247.5 V781.8 V747.2 H1248.5 V747.2 V711.1 H1249.5 V711.1 V676.4 H1250.5 V676.4 V645.7 H1251.5 V645.7 V626.4 V633.1 H1252.5 V633.1 V662.8 H1253.5 V662.8 V697.7 H1254.5 V697.7 V735.2 H1255.5 V735.2 V772.0 H1256.5 V772.0 V805.0 H1257.5 V805.0 V828.2 V824.6 H1258.5 V824.6 V798.1 H1259.5 V798.1 V766.9 H1260.5 V766.9 V732.8 H1261.5 V732.8 V698.4 H1262.5 V698.4 V666.2 H1263.5 V666.2 V638.3 H1264.5 V638.3 V628.0 V643.5 H1265.5 V643.5 V675.7 H1266.5 V675.7 V712.5 H1267.5 V712.5 V750.9 H1268.5 V750.9 V787.4 H1269.5 V787.4 V819.0 H1270.5 V819.0 V831.4 V818.7 H1271.5 V818.7 V791.4 H1272.5 V791.4 V760.0 H1273.5 V760.0 V726.7 H1274.5 V726.7 V694.0 H1275.5 V694.0 V664.1 H1276.5 V664.1 V638.8 H1277.5 V638.8 V636.1 V658.5 H1278.5 V658.5 V688.7 H1279.5 V688.7 V722.4 H1280.5 V722.4 V757.1 H1281.5 V757.1 V790.2 H1282.5 V790.2 V819.2 H1283.5 V819.2 V834.8 V825.7 H1284.5 V825.7 V796.7 H1285.5 V796.7 V762.9 H1286.5 V762.9 V726.9 H1287.5 V726.9 V691.8 H1288.5 V691.8 V660.5 H1289.5 V660.5 V639.2 V643.9 H1290.5 V643.9 V672.7 H1291.5 V672.7 V706.8 H1292.5 V706.8 V743.5 H1293.5 V743.5 V779.5 H1294.5 V779.5 V811.6 H1295.5 V811.6 V832.4 V827.1 H1296.5 V827.1 V800.6 H1297.5 V800.6 V769.5 H1298.5 V769.5 V735.7 H1299.5 V735.7 V701.5 H1300.5 V701.5 V669.4 H1301.5 V669.4 V641.5 H1302.5 V641.5 V629.5 V642.4 H1303.5 V642.4 V672.6 H1304.5 V672.6 V707.4 H1305.5 V707.4 V744.2 H1306.5 V744.2 V779.9 H1307.5 V779.9 V811.6 H1308.5 V811.6 V832.8 V827.8 H1309.5 V827.8 V800.7 H1310.5 V800.7 V768.8 H1311.5 V768.8 V734.1 H1312.5 V734.1 V699.5 H1313.5 V699.5 V667.6 H1314.5 V667.6 V640.6 H1315.5 V640.6 V636.1 V656.0 H1316.5 V656.0 V685.1 H1317.5 V685.1 V717.7 H1318.5 V717.7 V751.7 H1319.5 V751.7 V784.5 H1320.5 V784.5 V814.0 H1321.5 V814.0 V835.2 V834.3 H1322.5 V834.3 V804.6 H1323.5 V804.6 V769.3 H1324.5 V769.3 V730.7 H1325.5 V730.7 V692.6 H1326.5 V692.6 V658.2 H1327.5 V658.2 V633.1 V635.8 H1328.5 V635.8 V662.1 H1329.5 V662.1 V693.2 H1330.5 V693.2 V727.3 H1331.5 V727.3 V761.4 H1332.5 V761.4 V793.0 H1333.5 V793.0 V819.9 H1334.5 V819.9 V825.2 V804.9 H1335.5 V804.9 V773.8 H1336.5 V773.8 V738.7 H1337.5 V738.7 V702.5 H1338.5 V702.5 V668.1 H1339.5 V668.1 V638.0 H1340.5 V638.0 V623.4 V634.3 H1341.5 V634.3 V664.2 H1342.5 V664.2 V698.8 H1343.5 V698.8 V735.4 H1344.5 V735.4 V770.7 H1345.5 V770.7 V801.9 H1346.5 V801.9 V819.7 V812.1 H1347.5 V812.1 V785.0 H1348.5 V785.0 V753.4 H1349.5 V753.4 V719.4 H1350.5 V719.4 V685.5 H1351.5 V685.5 V654.2 H1352.5 V654.2 V627.4 H1353.5 V627.4 V621.3 V640.8 H1354.5 V640.8 V671.9 H1355.5 V671.9 V707.0 H1356.5 V707.0 V743.4 H1357.5 V743.4 V778.1 H1358.5 V778.1 V808.7 H1359.5 V808.7 V824.9 V815.6 H1360.5 V815.6 V787.0 H1361.5 V787.0 V753.6 H1362.5 V753.6 V718.0 H1363.5 V718.0 V683.1 H1364.5 V683.1 V651.5 H1365.5 V651.5 V626.4 V627.6 H1366.5 V627.6 V653.9 H1367.5 V653.9 V685.2 H1368.5 V685.2 V719.7 H1369.5 V719.7 V754.7 H1370.5 V754.7 V787.4 H1371.5 V787.4 V815.7 H1372.5 V815.7 V825.8 V810.9 H1373.5 V810.9 V781.1 H1374.5 V781.1 V747.1 H1375.5 V747.1 V711.5 H1376.5 V711.5 V677.4 H1377.5 V677.4 V647.3 H1378.5 V647.3 V631.0 V639.9 H1379.5 V639.9 V668.4 H1380.5 V668.4 V701.5 H1381.5 V701.5 V737.1 H1382.5 V737.1 V772.2 H1383.5 V772.2 V804.2 H1384.5 V804.2 V831.1 H1385.5 V831.1 V832.9 V807.7 H1386.5 V807.7 V775.0 H1387.5 V775.0 V738.8 H1388.5 V738.8 V701.9 H1389.5 V701.9 V667.4 H1390.5 V667.4 V637.9 H1391.5 V637.9 V629.5 V645.5 H1392.5 V645.5 V673.5 H1393.5 V673.5 V705.4 H1394.5 V705.4 V738.7 H1395.5 V738.7 V771.1 H1396.5 V771.1 V800.0 H1397.5 V800.0 V821.2 V818.0 H1398.5 V818.0 V789.6 H1399.5 V789.6 V755.9 H1400.5 V755.9 V719.2 H1401.5 V719.2 V682.7 H1402.5 V682.7 V649.5 H1403.5 V649.5 V621.8 H1404.5 V621.8 V621.3 V644.1 H1405.5 V644.1 V671.7 H1406.5 V671.7 V702.3 H1407.5 V702.3 V733.8 H1408.5 V733.8 V763.9 H1409.5 V763.9 V790.6 H1410.5 V790.6 V807.5 V800.9 H1411.5 V800.9 V769.9 H1412.5 V769.9 V733.5 H1413.5 V733.5 V694.4 H1414.5 V694.4 V656.3 H1415.5 V656.3 V622.6 H1416.5 V622.6 V602.5 V609.6 H1417.5 V609.6 V637.9 H1418.5 V637.9 V671.1 H1419.5 V671.1 V706.7 H1420.5 V706.7 V741.7 H1421.5 V741.7 V773.1 H1422.5 V773.1 V796.6 V794.0 H1423.5 V794.0 V766.4 H1424.5 V766.4 V733.8 H1425.5 V733.8 V698.0 H1426.5 V698.0 V661.8 H1427.5 V661.8 V628.0 H1428.5 V628.0 V598.8 H1429.5 V598.8 V597.8 V603.0 H1430.5 V603.0 V630.7 H1431.5 V630.7 V662.4 H1432.5 V662.4 V695.9 H1433.5 V695.9 V728.9 H1434.5 V728.9 V758.9 H1435.5 V758.9 V784.4 H1436.5 V784.4 V787.2 V762.8 H1437.5 V762.8 V729.3 H1438.5 V729.3 V692.1 H1439.5 V692.1 V654.5 H1440.5 V654.5 V619.9 H1441.5 V619.9 V597.8 H1442.5 V597.8 V597.8 V612.2 H1443.5 V612.2 V642.8 H1444.5 V642.8 V677.0 H1445.5 V677.0 V712.3 H1446.5 V712.3 V746.1 H1447.5 V746.1 V776.2 H1448.5 V776.2 V796.3 V791.0 H1449.5 V791.0 V762.4 H1450.5 V762.4 V728.6 H1451.5 V728.6 V692.2 H1452.5 V692.2 V656.6 H1453.5 V656.6 V624.8 H1454.5 V624.8 V604.0 V609.5 H1455.5 V609.5 V638.4 H1456.5 V638.4 V672.4 H1457.5 V672.4 V709.2 H1458.5 V709.2 V745.9 H1459.5 V745.9 V779.6 H1460.5 V779.6 V808.0 H1461.5 V808.0 V811.4 V790.5 H1462.5 V790.5 V761.5 H1463.5 V761.5 V729.1 H1464.5 V729.1 V695.9 H1465.5 V695.9 V664.5 H1466.5 V664.5 V637.4 H1467.5 V637.4 V626.4 V639.6 H1468.5 V639.6 V668.5 H1469.5 V668.5 V701.6 H1470.5 V701.6 V736.8 H1471.5 V736.8 V771.6 H1472.5 V771.6 V803.5 H1473.5 V803.5 V830.5 H1474.5 V830.5 V834.8 V813.4 H1475.5 V813.4 V782.1 H1476.5 V782.1 V747.2 H1477.5 V747.2 V711.7 H1478.5 V711.7 V678.8 H1479.5 V678.8 V651.2 H1480.5 V651.2 V647.4 V669.9 H1481.5 V669.9 V702.0 H1482.5 V702.0 V737.8 H1483.5 V737.8 V774.4 H1484.5 V774.4 V808.6 H1485.5 V808.6 V835.2 H1486.5 V835.2 V835.2 V830.7 H1487.5 V830.7 V802.2 H1488.5 V802.2 V769.8 H1489.5 V769.8 V735.8 H1490.5 V735.8 V702.9 H1491.5 V702.9 V673.5 H1492.5 V673.5 V652.5 V656.1 H1493.5 V656.1 V684.1 H1494.5 V684.1 V717.3 H1495.5 V717.3 V753.3 H1496.5 V753.3 V789.0 H1497.5 V789.0 V821.3 H1498.5 V821.3 V835.2 V835.2 H1499.5 V835.2 V820.3 H1500.5 V820.3 V789.8 H1501.5 V789.8 V756.3 H1502.5 V756.3 V722.2 H1503.5 V722.2 V690.0 H1504.5 V690.0 V661.9 H1505.5 V661.9 V648.9 V659.6 H1506.5 V659.6 V686.5 H1507.5 V686.5 V717.6 H1508.5 V717.6 V750.8 H1509.5 V750.8 V783.7 H1510.5 V783.7 V814.1 H1511.5 V814.1 V835.2 H1512.5 V835.2 V835.2 V824.7 H1513.5 V824.7 V791.2 H1514.5 V791.2 V753.6 H1515.5 V753.6 V715.1 H1516.5 V715.1 V679.2 H1517.5 V679.2 V648.8 H1518.5 V648.8 V642.8 V662.7 H1519.5 V662.7 V693.6 H1520.5 V693.6 V728.3 H1521.5 V728.3 V764.0 H1522.5 V764.0 V797.6 H1523.5 V797.6 V826.7 H1524.5 V826.7 V835.2 V823.1 H1525.5 V823.1 V794.4 H1526.5 V794.4 V761.5 H1527.5 V761.5 V726.8 H1528.5 V726.8 V693.0 H1529.5 V693.0 V662.6 H1530.5 V662.6 V639.2 V641.1 H1531.5 V641.1 V667.8 H1532.5 V667.8 V699.6 H1533.5 V699.6 V734.5 H1534.5 V734.5 V769.8 H1535.5 V769.8 V802.7 H1536.5 V802.7 V831.0 H1537.5 V831.0 V835.2 V822.9 H1538.5 V822.9 V792.1 H1539.5 V792.1 V757.1 H1540.5" stroke="#a386d8" stroke-width="1" fill="none"/><rect x="408.5" y="597.5" width="1132.0" height="238.0" fill="none" stroke="#a9a9a9" stroke-width="1"/><path d="M404 629.5 H411.5" stroke="#a9a9a9" stroke-width="1"/><path d="M404 680.5 H411.5" stroke="#a9a9a9" stroke-width="1"/><path d="M404 731.5 H411.5" stroke="#a9a9a9" stroke-width="1"/><path d="M404 782.5 H411.5" stroke="#a9a9a9" stroke-width="1"/><path d="M404 833.5 H411.5" stroke="#a9a9a9" stroke-width="1"/></svg>
<div class="t" style="left:-197.00px;width:600px;text-align:right;top:625.53px;font-size:9.3px;color:#f0f0f0;">0.000002</div>
<div class="t" style="left:-197.00px;width:600px;text-align:right;top:676.53px;font-size:9.3px;color:#f0f0f0;">0.000001</div>
<div class="t" style="left:-197.00px;width:600px;text-align:right;top:727.53px;font-size:9.3px;color:#f0f0f0;">0</div>
<div class="t" style="left:-197.00px;width:600px;text-align:right;top:778.53px;font-size:9.3px;color:#f0f0f0;">-0.000001</div>
<div class="t" style="left:-197.00px;width:600px;text-align:right;top:829.53px;font-size:9.3px;color:#f0f0f0;">-0.000002</div>
<div class="t" style="left:224.20px;width:600px;text-align:center;top:840.13px;font-size:9.3px;color:#f0f0f0;">0:06.00</div>
<div class="t" style="left:406.15px;width:600px;text-align:center;top:840.13px;font-size:9.3px;color:#f0f0f0;">0:06.25</div>
<div class="t" style="left:588.10px;width:600px;text-align:center;top:840.13px;font-size:9.3px;color:#f0f0f0;">0:06.50</div>
<div class="t" style="left:770.05px;width:600px;text-align:center;top:840.13px;font-size:9.3px;color:#f0f0f0;">0:06.75</div>
<div class="t" style="left:952.00px;width:600px;text-align:center;top:840.13px;font-size:9.3px;color:#f0f0f0;">0:07.00</div>
<div class="t" style="left:1133.95px;width:600px;text-align:center;top:840.13px;font-size:9.3px;color:#f0f0f0;">0:07.25</div>
<div class="t" style="left:625.60px;width:600px;text-align:center;top:585.17px;font-size:10.2px;color:#9a80d4;font-weight:bold;">Acceleration_double_integration [g/s²]</div>
<svg class="a" style="left:926px;top:786px;" width="48" height="49" viewBox="0 0 48 49"><rect x="0" y="0" width="48" height="49" rx="10" fill="#8a8a8a" fill-opacity="0.26"/><path d="M11.5 17.0 L19.0 24.5 L11.5 32.0 M21.0 17.0 L28.5 24.5 L21.0 32.0" stroke="#9d9d9d" stroke-width="3.4" fill="none"/></svg>
<svg class="a" style="left:408px;top:836px;" width="23.5" height="14" viewBox="0 0 23.5 14"><rect x="0" y="0" width="23.5" height="14" rx="3.5" fill="#f5a50f"/><path d="M6 7 L16.5 2.2 V11.8 Z" fill="#fff"/></svg>

<svg class="a" style="left:1588px;top:24px;" width="42" height="380" viewBox="0 0 42 380"><rect x="0" y="0" width="42" height="380" fill="#373737"/><path d="M0 14 C0 7 4 4 10 4 L42 0 V80.8 L0 92.4 Z" fill="#efefef"/><path d="M0 92.4 C0 88 3 86 8 84.5 L36 81.5 C40 81 42 79 42 76 V142.4 C42 138 40 136 36 135.5 L8 132 C3 131.5 0 129 0 126 Z" fill="#d3d3d3"/><path d="M0 126 C0 129 3 131.5 8 132 L36 135.5 C40 136 42 138 42 142.4 V312 C42 308 40 306 36 305.5 L8 301 C3 300.5 0 298.5 0 294 Z" fill="#efefef"/><path d="M0 294 C0 298.5 3 300.5 8 301 L36 305.5 C40 306 42 308 42 312 V358 C42 354 40 353 36 352.5 L8 349 C3 348 0 346.5 0 344 Z" fill="#595959"/><rect x="18.4" y="15.7" width="5.2" height="5" transform="rotate(0 21 26)" fill="#555555"/><rect x="18.4" y="15.7" width="5.2" height="5" transform="rotate(45 21 26)" fill="#555555"/><rect x="18.4" y="15.7" width="5.2" height="5" transform="rotate(90 21 26)" fill="#555555"/><rect x="18.4" y="15.7" width="5.2" height="5" transform="rotate(135 21 26)" fill="#555555"/><rect x="18.4" y="15.7" width="5.2" height="5" transform="rotate(180 21 26)" fill="#555555"/><rect x="18.4" y="15.7" width="5.2" height="5" transform="rotate(225 21 26)" fill="#555555"/><rect x="18.4" y="15.7" width="5.2" height="5" transform="rotate(270 21 26)" fill="#555555"/><rect x="18.4" y="15.7" width="5.2" height="5" transform="rotate(315 21 26)" fill="#555555"/><circle cx="21" cy="26" r="7.6" fill="#555555"/><circle cx="21" cy="26" r="4.6" fill="#efefef"/><circle cx="21" cy="26" r="3" fill="#555555"/><path d="M10 48.5 H32" stroke="#c9c9c9"/><rect x="10" y="61.9" width="3.2" height="3.2" rx="1" fill="#555555"/><rect x="15" y="61.8" width="17" height="3.4" rx="1.4" fill="#555555"/><rect x="10" y="67.4" width="3.2" height="3.2" rx="1" fill="#555555"/><rect x="15" y="67.3" width="17" height="3.4" rx="1.4" fill="#555555"/><rect x="10" y="72.9" width="3.2" height="3.2" rx="1" fill="#555555"/><rect x="15" y="72.8" width="17" height="3.4" rx="1.4" fill="#555555"/><rect x="10.8" y="101.8" width="14.5" height="19.5" fill="none" stroke="#1b5fb0" stroke-width="2"/><path d="M13.5 106.5 H23 M13.5 110 H21 M13.5 113.5 H19" stroke="#1b5fb0" stroke-width="1.4"/><path d="M20 115 C20 112 24 111 25.5 113.5 L31.5 119 L29.5 121 L23.5 116.5 C21 118 19.5 117 20 115 Z" fill="#1b5fb0"/><path d="M8 129 L11 126.7 V131.3 Z M12 126.8 h1.5 v4.4 h-1.5 Z M14.6 126.8 h1.5 v4.4 h-1.5 Z M25.9 126.8 h1.5 v4.4 h-1.5 Z M28.5 126.8 h1.5 v4.4 h-1.5 Z M31 126.7 L34 129 L31 131.3 Z" fill="#1b5fb0"/><path d="M28.5 145 L15 145 L11 157 L17 157 L13 166.5 L27.5 153 L21 153 Z" fill="#555555"/><path d="M10 177.5 H32" stroke="#c9c9c9"/><path d="M15.2 187.5 V209" stroke="#555555" stroke-width="2.2"/><path d="M14.5 187 L27 193.5 L14.5 200 Z" fill="#555555"/><path d="M10 220.5 H32" stroke="#c9c9c9"/><path d="M12 241 V251 H26 V247" stroke="#555555" stroke-width="1.8" fill="none"/><path d="M14 246 C15 238 20 236 25 236 V232 L32.5 238 L25 244 V240 C21 240 17 241 14 246 Z" fill="#555555"/><path d="M10 263.5 H32" stroke="#c9c9c9"/><path d="M12.5 283 L15 276.5 C15.5 275 16.5 274.5 18 274.5 H27 C28.5 274.5 29.5 275 30 276.5 L32.5 283 Z" fill="none" stroke="#555555" stroke-width="2.2"/><rect x="9.3" y="281.5" width="24.4" height="11" rx="2" fill="#555555"/><rect x="10" y="291" width="4.8" height="5" fill="#555555"/><rect x="28.2" y="291" width="4.8" height="5" fill="#555555"/><circle cx="14" cy="286.5" r="1.8" fill="#efefef"/><circle cx="29" cy="286.5" r="1.8" fill="#efefef"/><circle cx="21" cy="327" r="10.3" fill="none" stroke="#fff" stroke-width="2"/><circle cx="22.3" cy="321.2" r="1.4" fill="#fff"/><path d="M19.5 325 H22.5 L20.5 332 H23" stroke="#fff" stroke-width="2" fill="none" stroke-linejoin="round"/></svg>
<div class="a" style="left:1630px;top:24px;width:290px;height:972px;background:#d2d2d2"></div>
<div class="a" style="left:1630px;top:24px;width:290px;height:3px;background:linear-gradient(#bdbdbd,#d2d2d2)"></div>
<div class="a" style="left:1634px;top:28px;width:281px;height:30px;background:#dcdcdc"></div>
<div class="t" style="left:1475.00px;width:600px;text-align:center;top:38.01px;font-size:11.8px;color:#2b6cb3;font-weight:bold;">Recorder</div>
<div class="t" style="left:1635.40px;top:71.03px;font-size:11.3px;color:#111;font-weight:bold;">TIME AXIS</div>
<div class="t" style="left:1635.50px;top:95.57px;font-size:12.2px;color:#111;">Format</div>
<div class="t" style="left:1685.00px;top:94.97px;font-size:12.2px;color:#111;">Auto</div>
<div class="a" style="left:1680px;top:110px;width:235px;height:1.2px;background:#8a8a8a"></div>
<div class="a" style="left:1914px;top:105.5px;width:1.2px;height:6px;background:#8a8a8a"></div>
<svg class="a" style="left:1904px;top:101px;" width="10" height="10" viewBox="0 0 10 10"><path d="M0.5 9.5 L9 1 V9.5 Z" fill="#7a7a7a"/></svg>
<div class="t" style="left:1635.40px;top:130.43px;font-size:11.3px;color:#111;font-weight:bold;">CURSORS</div>
<div class="a" style="left:1635.5px;top:152px;width:17.5px;height:17.5px;background:#efefef;border:1px solid #8a8a8a;border-radius:2px"></div>
<div class="t" style="left:1659.50px;top:155.27px;font-size:12.2px;color:#111;">Max</div>
<div class="a" style="left:1707px;top:152px;width:17.5px;height:17.5px;background:#efefef;border:1px solid #8a8a8a;border-radius:2px"></div>
<div class="t" style="left:1731.00px;top:155.27px;font-size:12.2px;color:#111;">Avg</div>
<div class="a" style="left:1802px;top:152px;width:17.5px;height:17.5px;background:#efefef;border:1px solid #8a8a8a;border-radius:2px"></div>
<div class="t" style="left:1826.00px;top:155.27px;font-size:12.2px;color:#111;">Slope</div>
<div class="a" style="left:1635.5px;top:181px;width:17.5px;height:17.5px;background:#efefef;border:1px solid #8a8a8a;border-radius:2px"></div>
<div class="t" style="left:1659.50px;top:184.27px;font-size:12.2px;color:#111;">Min</div>
<div class="a" style="left:1707px;top:181px;width:17.5px;height:17.5px;background:#efefef;border:1px solid #8a8a8a;border-radius:2px"></div>
<div class="t" style="left:1731.00px;top:184.27px;font-size:12.2px;color:#111;">RMS</div>
<div class="a" style="left:1802px;top:181px;width:17.5px;height:17.5px;background:#efefef;border:1px solid #8a8a8a;border-radius:2px"></div>
<div class="t" style="left:1826.00px;top:184.27px;font-size:12.2px;color:#111;">Frequ.</div>
<div class="a" style="left:1635.5px;top:210px;width:17.5px;height:17.5px;background:#efefef;border:1px solid #8a8a8a;border-radius:2px"></div>
<div class="t" style="left:1659.50px;top:213.27px;font-size:12.2px;color:#111;">Integral</div>
<div class="a" style="left:1707px;top:210px;width:17.5px;height:17.5px;background:#efefef;border:1px solid #8a8a8a;border-radius:2px"></div>
<div class="t" style="left:1731.00px;top:213.27px;font-size:12.2px;color:#111;">C/D-Cursors</div>
<div class="t" style="left:1635.40px;top:249.83px;font-size:11.3px;color:#111;font-weight:bold;">VALUE AXIS</div>
<div class="a" style="left:1635.5px;top:271.3px;width:17.5px;height:17.5px;background:#efefef;border:1px solid #8a8a8a;border-radius:2px"></div>
<div class="t" style="left:1659.40px;top:274.17px;font-size:12.2px;color:#111;">Automatic scaling</div>
<div class="a" style="left:1635.5px;top:300.4px;width:17.5px;height:17.5px;background:#efefef;border:1px solid #8a8a8a;border-radius:2px"></div>
<div class="t" style="left:1659.40px;top:303.17px;font-size:12.2px;color:#111;">Individual scaling</div>
<div class="a" style="left:1635px;top:326px;width:280px;height:25px;background:#595959"></div>
<div class="t" style="left:1407.00px;width:600px;text-align:center;top:333.27px;font-size:12.2px;color:#f0f0f0;">Min</div>
<div class="t" style="left:1502.00px;width:600px;text-align:center;top:333.27px;font-size:12.2px;color:#f0f0f0;">Max</div>
<div class="t" style="left:1563.00px;width:600px;text-align:center;top:333.27px;font-size:12.2px;color:#f0f0f0;">Color</div>
<div class="a" style="left:1635px;top:351px;width:280px;height:27px;background:#c0d5ec;border:1px solid #5b8fd0"></div>
<div class="a" style="left:1640px;top:356.5px;width:18px;height:17.5px;border:1px solid #a9bdd3;border-radius:2px"></div>
<svg class="a" style="left:1640px;top:356px;" width="18" height="18" viewBox="0 0 18 18"><path d="M4.5 9 L8 12.5 L14 5.5" stroke="#9fb3c8" stroke-width="1.5" fill="none"/></svg>
<div class="t" style="left:1412.00px;width:600px;text-align:center;top:359.07px;font-size:12.2px;color:#111;">-0.87</div>
<div class="t" style="left:1507.00px;width:600px;text-align:center;top:359.07px;font-size:12.2px;color:#111;">0.5</div>
<div class="a" style="left:1858.5px;top:354.5px;width:20.5px;height:19.5px;background:#3b68a3;border-radius:3px"></div>
<div class="t" style="left:1635.40px;top:397.03px;font-size:11.3px;color:#111;font-weight:bold;">STYLE</div>
<div class="a" style="left:1635.5px;top:418.2px;width:17.5px;height:17.5px;background:#efefef;border:1px solid #8a8a8a;border-radius:2px"></div>
<svg class="a" style="left:1635.5px;top:418.2px;" width="18" height="18" viewBox="0 0 18 18"><path d="M4 9 L7.5 12.5 L14 5" stroke="#1b5fb0" stroke-width="1.8" fill="none"/></svg>
<div class="t" style="left:1659.40px;top:420.47px;font-size:12.2px;color:#111;">Show event markers</div>
<div class="t" style="left:1635.40px;top:449.37px;font-size:12.2px;color:#111;">Statistics data</div>
<div class="t" style="left:1742.50px;top:448.87px;font-size:12.2px;color:#111;">Min/Max range</div>
<div class="a" style="left:1737px;top:464.5px;width:178px;height:1.2px;background:#8a8a8a"></div>
<div class="a" style="left:1914px;top:459.5px;width:1.2px;height:6px;background:#8a8a8a"></div>
<svg class="a" style="left:1904px;top:455px;" width="10" height="10" viewBox="0 0 10 10"><path d="M0.5 9.5 L9 1 V9.5 Z" fill="#7a7a7a"/></svg>
<div class="a" style="left:1635.5px;top:474.3px;width:17.5px;height:17.5px;background:#efefef;border:1px solid #8a8a8a;border-radius:2px"></div>
<div class="t" style="left:1659.40px;top:476.27px;font-size:12.2px;color:#111;">Show only statistics data</div>
<svg class="a" style="left:1909px;top:488px;" width="11" height="48" viewBox="0 0 11 48"><path d="M11 0 L6 0 L1 5 L1 43 L6 48 L11 48 Z" fill="#6e6e6e"/><path d="M8.5 20 L5 24 L8.5 28" fill="none" stroke="#fff" stroke-width="1.5"/></svg>
<div class="a" style="left:1920px;top:95px;width:2px;height:32px;background:#222"></div>
<div class="a" style="left:0px;top:996px;width:1920px;height:4px;background:#0e7d10"></div>
<div class="a" style="left:0px;top:1000px;width:1920px;height:39px;background:#5a5a5a"></div>
<div class="a" style="left:0px;top:1000px;width:1920px;height:5px;background:linear-gradient(#54565c,#5a5a5a)"></div>
<svg class="a" style="left:9px;top:1004px;" width="32" height="32" viewBox="0 0 32 32"><circle cx="16" cy="16" r="15.2" fill="#0b7e0b"/></svg>
<div class="t" style="left:-275.00px;width:600px;text-align:center;top:1015.41px;font-size:10.5px;color:#c9f5a9;font-weight:bold;letter-spacing:-0.3px;">PLAY</div>
<svg class="a" style="left:48px;top:1004px;" width="32" height="32" viewBox="0 0 32 32"><circle cx="16" cy="16" r="15" fill="#6b6b6b"/><path d="M4.5 12 A12 12 0 0 1 26 8.5 M27.5 20 A12 12 0 0 1 6 23.5" stroke="#e6e6e6" stroke-width="1.6" fill="none"/><path d="M26.5 5.5 L27.5 11 L22.5 10 Z M5.5 26.5 L4.5 21 L9.5 22 Z" fill="#e6e6e6"/></svg>
<div class="t" style="left:-236.00px;width:600px;text-align:center;top:1015.41px;font-size:10.5px;color:#e9e9e9;font-weight:bold;letter-spacing:-0.4px;">SYNC</div>
<div class="t" style="left:93.50px;top:1009.21px;font-size:9.2px;color:#f0f0f0;">10:57:41 (UTC-6)</div>
<div class="t" style="left:93.50px;top:1023.21px;font-size:9.2px;color:#f0f0f0;">17.01.2018</div>
<svg class="a" style="left:382px;top:1005px;" width="207" height="30" viewBox="0 0 207 30"><rect x="0" y="0" width="207" height="30" rx="15" fill="#2a2a2a"/><path d="M51.5 5 V25" stroke="#4a4a4a" stroke-width="1"/><path d="M103.5 5 V25" stroke="#4a4a4a" stroke-width="1"/><path d="M154.5 5 V25" stroke="#4a4a4a" stroke-width="1"/><path d="M24.3 14.5 V11 A4.6 4.6 0 0 1 33.5 11 V14.5" stroke="#ffffff" stroke-width="2.3" fill="none"/><rect x="21.6" y="14.2" width="14.4" height="10.1" rx="1" fill="#ffffff"/><circle cx="28.9" cy="18.3" r="1.4" fill="#2a2a2a"/><rect x="28.2" y="18.5" width="1.4" height="2.8" fill="#2a2a2a"/><path d="M68.8 6 L68.8 24 L86.7 24 Z" fill="#ffffff"/><path d="M71.4 14.3 L71.4 21.3 L78.2 21.3 Z" fill="#2a2a2a"/><path d="M71.5 9.5 l1.6 -1.2 M73.6 11.7 l1.6 -1.2 M75.7 13.9 l1.6 -1.2 M77.8 16.1 l1.6 -1.2 M79.9 18.3 l1.6 -1.2" stroke="#2a2a2a" stroke-width="0.9"/><path d="M124 5 V25 M136.6 5 V25" stroke="#bbb" stroke-width="0.7" stroke-dasharray="1.2 1.2"/><path d="M119 14.2 L124 10.6 L136.6 19.8 L140.1 17.7" stroke="#ffffff" stroke-width="1.3" fill="none"/><path d="M121 10.6 H127 M124 7.6 V13.6 M133.6 19.8 H139.6 M136.6 16.8 V22.8" stroke="#ffffff" stroke-width="1"/><g stroke="#4d4d4d" stroke-width="2"><path d="M179 6.5 V23.5 M171.6 10.8 L186.4 19.2 M171.6 19.2 L186.4 10.8 M176 7.5 L179 10 L182 7.5 M176 22.5 L179 20 L182 22.5" fill="none"/></g></svg>
<svg class="a" style="left:818.5px;top:1002px;" width="282" height="36" viewBox="0 0 282 36"><rect x="55" y="2.7" width="170" height="30.1" fill="#2a2a2a"/><rect x="0.5" y="0.5" width="62" height="35" rx="17.5" fill="#2a2a2a" stroke="#4c4c4c" stroke-width="1"/><rect x="219.5" y="0.5" width="62" height="35" rx="17.5" fill="#2a2a2a" stroke="#4c4c4c" stroke-width="1"/><path d="M24.5 8 L40 18 L24.5 28 Z" fill="#129212"/><path d="M82 21 L89.5 10 L97 21 Z" fill="#ffffff"/><rect x="82.5" y="23" width="14" height="2.8" rx="0.8" fill="#ffffff"/><path d="M114.5 8 V28 M166.5 8 V28" stroke="#4a4a4a"/><rect x="135" y="10" width="2.6" height="16" fill="#ffffff"/><path d="M148 10 L138 18 L148 26 Z" fill="#ffffff"/><rect x="199.4" y="10" width="2.6" height="16" fill="#ffffff"/><path d="M188 10 L198 18 L188 26 Z" fill="#ffffff"/><path d="M238 10 H245 L247 12 H256 V15 H243 L238.5 28 Z" fill="#ffffff"/><path d="M244 16.5 H267.5 L262 28 H238.5 Z" fill="#ffffff"/></svg>
<svg class="a" style="left:1330px;top:1005px;" width="207" height="30" viewBox="0 0 207 30"><rect x="0" y="0" width="207" height="29.5" rx="14.75" fill="#2a2a2a"/><path d="M51.6 5 V25" stroke="#4a4a4a"/><path d="M103.75 5 V25" stroke="#4a4a4a"/><path d="M155.6 5 V25" stroke="#4a4a4a"/><path d="M19 5.5 H34.5 L37.3 8.3 V24.5 H19 Z" fill="#ffffff"/><rect x="21.5" y="7.3" width="10" height="5" fill="#2a2a2a"/><rect x="28" y="8" width="2" height="3.5" fill="#ffffff"/><rect x="21" y="16" width="14.3" height="7" fill="#2a2a2a"/><g fill="#4a4a4a"><circle cx="75" cy="14" r="6.5"/><rect x="69" y="17" width="19" height="8" rx="3"/></g><rect x="127.5" y="5.5" width="3.6" height="4" transform="rotate(0 129.3 14.5)" fill="#ffffff"/><rect x="127.5" y="5.5" width="3.6" height="4" transform="rotate(45 129.3 14.5)" fill="#ffffff"/><rect x="127.5" y="5.5" width="3.6" height="4" transform="rotate(90 129.3 14.5)" fill="#ffffff"/><rect x="127.5" y="5.5" width="3.6" height="4" transform="rotate(135 129.3 14.5)" fill="#ffffff"/><rect x="127.5" y="5.5" width="3.6" height="4" transform="rotate(180 129.3 14.5)" fill="#ffffff"/><rect x="127.5" y="5.5" width="3.6" height="4" transform="rotate(225 129.3 14.5)" fill="#ffffff"/><rect x="127.5" y="5.5" width="3.6" height="4" transform="rotate(270 129.3 14.5)" fill="#ffffff"/><rect x="127.5" y="5.5" width="3.6" height="4" transform="rotate(315 129.3 14.5)" fill="#ffffff"/><circle cx="129.3" cy="14.5" r="6.3" fill="#ffffff"/><circle cx="129.3" cy="14.5" r="3.3" fill="#2a2a2a"/><rect x="132" y="13" width="10" height="12" fill="#2a2a2a"/><path d="M133 14 H139.5 L141 15.5 V24.5 H133 Z" fill="#ffffff"/><rect x="134.5" y="15.3" width="4.5" height="3" fill="#2a2a2a"/><rect x="134.5" y="20.5" width="5" height="3" fill="#2a2a2a"/><path d="M175 6 V24" stroke="#ffffff" stroke-width="2.3"/><path d="M174.5 6 L185 12.5 L174.5 18.5 Z" fill="#ffffff"/></svg>
<svg class="a" style="left:1870px;top:1005px;" width="50" height="30" viewBox="0 0 50 30"><path d="M15 0 H50 V30 H15 A15 15 0 0 1 15 0 Z" fill="#2a2a2a"/><path d="M21.5 10 H23.5 M21.5 15 H23.5 M21.5 20 H23.5" stroke="#ffffff" stroke-width="2"/><path d="M25.5 10 H33.5 M25.5 15 H33.5 M25.5 20 H33.5" stroke="#ffffff" stroke-width="2" stroke-linecap="round"/><path d="M19 8 V6.5 H20.5 M36 8 V6.5 H34.5 M19 22 V23.5 H20.5 M36 22 V23.5 H34.5" stroke="#ffffff" stroke-width="1.2" fill="none"/></svg>
</body></html>
